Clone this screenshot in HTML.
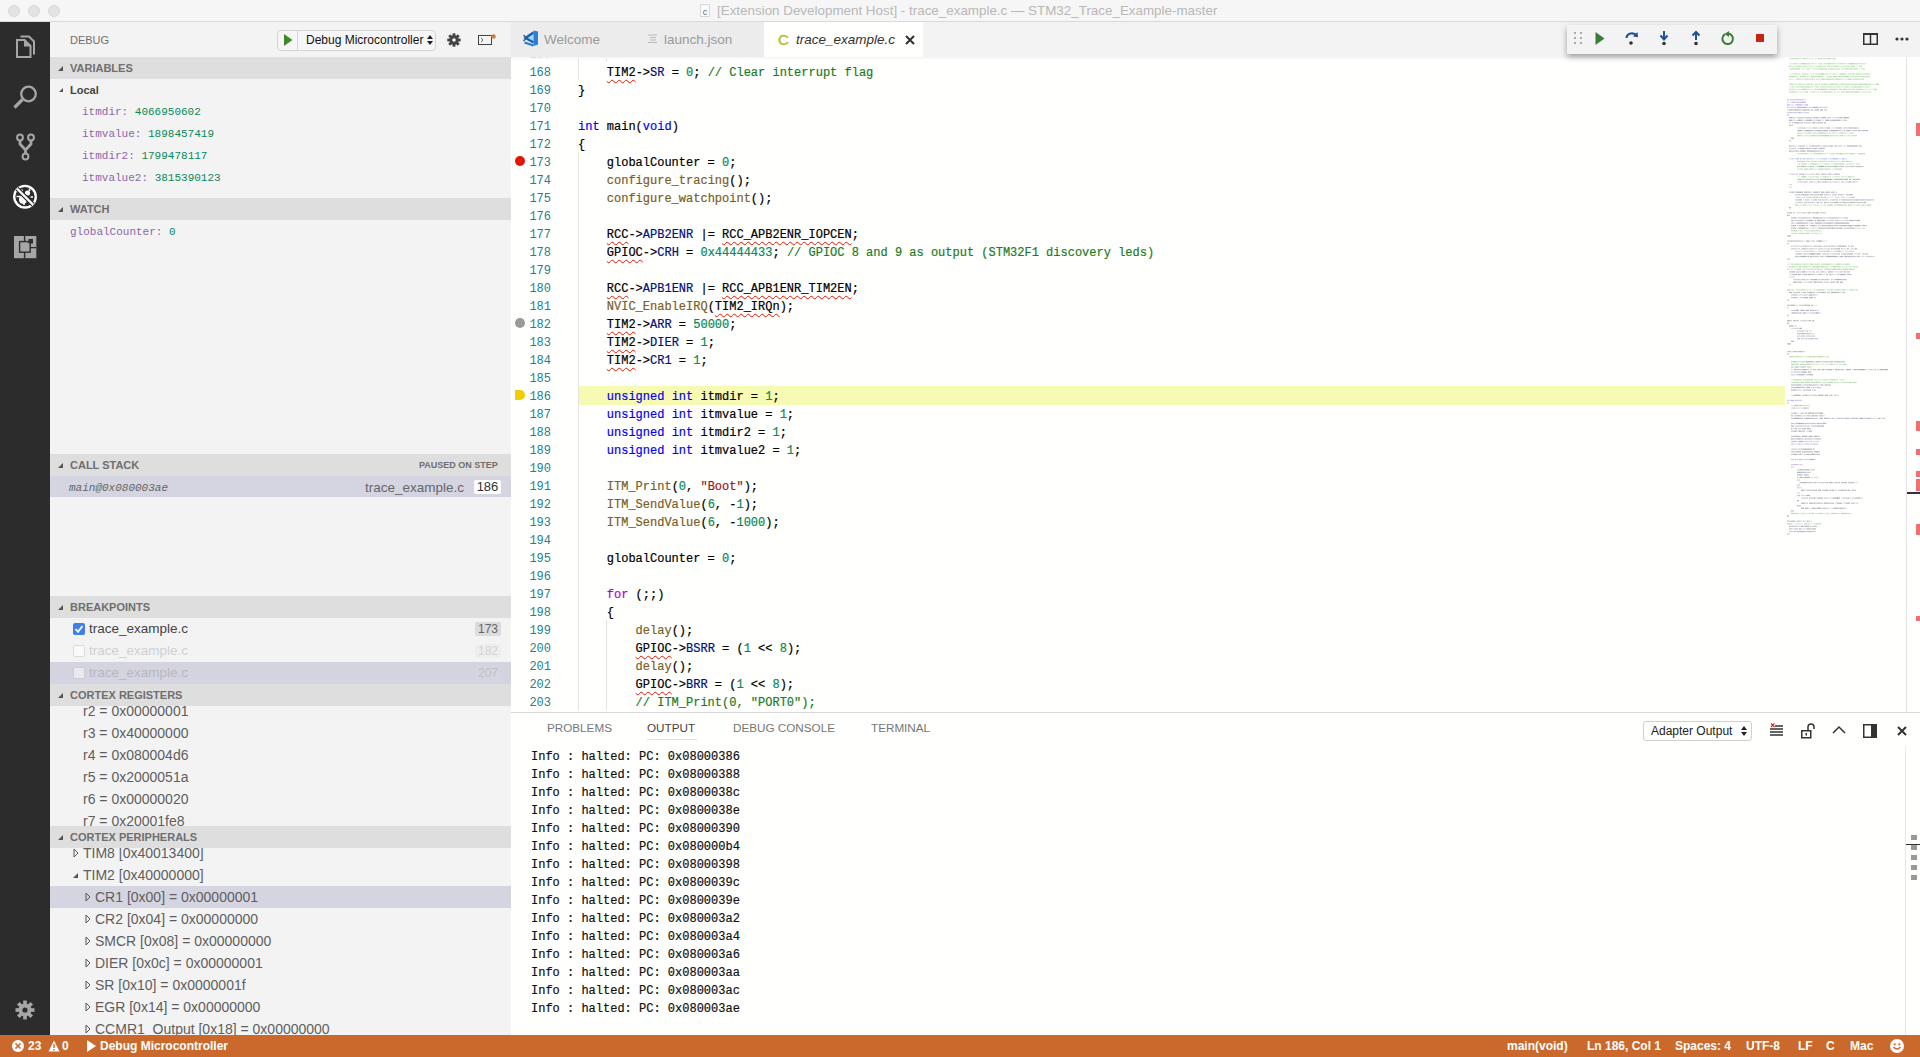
<!DOCTYPE html><html><head><meta charset="utf-8"><title>VS Code Debug</title><style>
*{margin:0;padding:0;box-sizing:border-box}
html,body{width:1920px;height:1057px;overflow:hidden;background:#f3f3f3;font-family:"Liberation Sans",sans-serif}
.a{position:absolute}
svg{position:absolute;overflow:visible}
.t{position:absolute;white-space:pre}
.mono{font-family:"Liberation Mono",monospace}
.sh{position:absolute;left:50px;width:461px;height:22px;background:#dedede;font-size:11px;font-weight:bold;color:#6f6f6f;line-height:22px}
.sh .tx{position:absolute;left:20px;top:0}
.tri{position:absolute;width:0;height:0;border-left:5px solid transparent;border-bottom:5px solid #555}
.tric{position:absolute;width:0;height:0;border-top:4px solid transparent;border-bottom:4px solid transparent;border-left:4px solid #666}
.ln{position:absolute;font-family:"Liberation Mono",monospace;font-size:12px;line-height:18px;color:#26808c;padding-top:2px;text-align:right;width:60px;left:491px;white-space:pre}
.cd{position:absolute;font-family:"Liberation Mono",monospace;font-size:12px;line-height:18px;color:#000;padding-top:2px;-webkit-text-stroke:0.2px currentColor;left:578px;white-space:pre}
.kw{color:#0000ff}.fn{color:#795e26}.nu{color:#09885a}.cm{color:#1e7b1e}.str{color:#a31515}.ctl{color:#af00db}.var{color:#001080}
.sq{text-decoration:underline wavy #e51400;text-decoration-thickness:1px;text-underline-offset:3px;text-decoration-skip-ink:none}
.out{position:absolute;left:531px;font-family:"Liberation Mono",monospace;font-size:12px;line-height:18px;color:#111;padding-top:2px;-webkit-text-stroke:0.2px currentColor;white-space:pre}
.reg{position:absolute;font-size:14px;color:#5e5e5e;line-height:22px;white-space:pre}
.st{position:absolute;top:1035px;height:22px;line-height:22px;font-size:12px;font-weight:bold;color:#fff;white-space:pre}
</style></head><body>
<div class="a" style="left:0;top:0;width:1920px;height:22px;background:#f6f6f6;border-bottom:1px solid #d9d9d9"></div>
<div class="a" style="left:8px;top:5px;width:12px;height:12px;border-radius:50%;background:#e3e3e3;border:1px solid #dadada"></div>
<div class="a" style="left:28px;top:5px;width:12px;height:12px;border-radius:50%;background:#e3e3e3;border:1px solid #dadada"></div>
<div class="a" style="left:48px;top:5px;width:12px;height:12px;border-radius:50%;background:#e3e3e3;border:1px solid #dadada"></div>
<div class="t" style="left:717px;top:0;height:22px;line-height:22px;font-size:13.4px;color:#b8b8b8">[Extension Development Host] - trace_example.c — STM32_Trace_Example-master</div>
<div class="a" style="left:700px;top:4px;width:10px;height:13px;border:1px solid #d8d8d8;background:#fbfbfb;font-size:9px;line-height:14px;color:#666;text-align:center">c</div>
<div class="a" style="left:0;top:22px;width:50px;height:1013px;background:#2c2c2c"></div>
<svg style="left:0;top:0" width="50" height="270" viewBox="0 0 50 270">
<path d="M20.5 36.5 H29 L34 41.5 V54.5" fill="none" stroke="#a6a6a6" stroke-width="2"/>
<path d="M15 38 H26 L32.5 44.5 V59 H15 Z" fill="#2c2c2c"/>
<path d="M17 40 H24.5 L30.5 46 V57 H17 Z" fill="none" stroke="#a6a6a6" stroke-width="2"/>
<path d="M24 40 L30.5 46.5 H24 Z" fill="#a6a6a6"/>
<circle cx="28.5" cy="94" r="7.3" fill="none" stroke="#a6a6a6" stroke-width="2.3"/>
<path d="M22.5 99.5 L14.5 107.5" stroke="#a6a6a6" stroke-width="3.2" stroke-linecap="butt"/>
<circle cx="20" cy="137.5" r="2.9" fill="none" stroke="#a6a6a6" stroke-width="2"/>
<circle cx="31" cy="137.5" r="2.9" fill="none" stroke="#a6a6a6" stroke-width="2"/>
<circle cx="25.5" cy="156.5" r="2.9" fill="none" stroke="#a6a6a6" stroke-width="2"/>
<path d="M20 140.5 V144 L25.5 150 L31 144 V140.5 M25.5 150 V153.5" fill="none" stroke="#a6a6a6" stroke-width="2.8" stroke-linejoin="round"/>
<circle cx="25" cy="196.7" r="10.8" fill="none" stroke="#fff" stroke-width="2.3"/>
<ellipse cx="23" cy="199.5" rx="4" ry="4.2" fill="#fff"/>
<circle cx="27.5" cy="193" r="2.6" fill="#fff"/>
<path d="M16.5 196.5 H20 M24 203 V205 M22 189.5 V192 M29.5 188.5 V191 M30.5 197 H33" stroke="#fff" stroke-width="1.6"/>
<path d="M17 188.6 L33 204.6" stroke="#2c2c2c" stroke-width="4.4"/>
<path d="M17 188.6 L33 204.6" stroke="#fff" stroke-width="2.2"/>
<rect x="14" y="236" width="22.3" height="22.2" fill="#a6a6a6"/>
<path d="M24.6 236 V258.2 M24.6 247.6 H36.3" stroke="#2c2c2c" stroke-width="1.4"/>
<rect x="19.6" y="241.6" width="10.6" height="10.6" fill="#a6a6a6" stroke="#2c2c2c" stroke-width="1.4"/>
<rect x="28.5" y="239" width="4.5" height="4.5" fill="#2c2c2c"/>
</svg>
<svg style="left:15px;top:1000px" width="20" height="20" viewBox="0 0 20 20"><g fill="#a6a6a6"><circle cx="10" cy="10" r="6.5"/><rect x="8.2" y="0.5" width="3.6" height="5" transform="rotate(0 10 10)"/><rect x="8.2" y="0.5" width="3.6" height="5" transform="rotate(45 10 10)"/><rect x="8.2" y="0.5" width="3.6" height="5" transform="rotate(90 10 10)"/><rect x="8.2" y="0.5" width="3.6" height="5" transform="rotate(135 10 10)"/><rect x="8.2" y="0.5" width="3.6" height="5" transform="rotate(180 10 10)"/><rect x="8.2" y="0.5" width="3.6" height="5" transform="rotate(225 10 10)"/><rect x="8.2" y="0.5" width="3.6" height="5" transform="rotate(270 10 10)"/><rect x="8.2" y="0.5" width="3.6" height="5" transform="rotate(315 10 10)"/></g><circle cx="10" cy="10" r="2.6" fill="#2c2c2c"/></svg>
<div class="a" style="left:50px;top:22px;width:461px;height:1013px;background:#f3f3f3"></div>
<div class="t" style="left:70px;top:33px;font-size:11px;line-height:14px;color:#6f6f6f">DEBUG</div>
<div class="a" style="left:277px;top:30px;width:159px;height:21px;border:1px solid #d4d4d4;border-radius:4px;background:#f6f6f6"></div>
<div class="a" style="left:297px;top:31px;width:1px;height:19px;background:#d8d8d8"></div>
<svg style="left:283px;top:34px" width="10" height="12" viewBox="0 0 10 12"><path d="M1 0 L9.5 6 L1 12 Z" fill="#3d8a2e"/></svg>
<div class="t" style="left:306px;top:32px;font-size:12px;line-height:16px;color:#111">Debug Microcontroller</div>
<svg style="left:427px;top:34px" width="6" height="12" viewBox="0 0 6 12"><path d="M0 5 L3 1 L6 5 Z M0 7 L3 11 L6 7 Z" fill="#222"/></svg>
<svg style="left:447px;top:33px" width="14" height="14" viewBox="0 0 14 14"><g fill="#444"><circle cx="7" cy="7" r="4.8"/><rect x="5.6" y="0.3" width="2.8" height="3.6" transform="rotate(0 7 7)"/><rect x="5.6" y="0.3" width="2.8" height="3.6" transform="rotate(45 7 7)"/><rect x="5.6" y="0.3" width="2.8" height="3.6" transform="rotate(90 7 7)"/><rect x="5.6" y="0.3" width="2.8" height="3.6" transform="rotate(135 7 7)"/><rect x="5.6" y="0.3" width="2.8" height="3.6" transform="rotate(180 7 7)"/><rect x="5.6" y="0.3" width="2.8" height="3.6" transform="rotate(225 7 7)"/><rect x="5.6" y="0.3" width="2.8" height="3.6" transform="rotate(270 7 7)"/><rect x="5.6" y="0.3" width="2.8" height="3.6" transform="rotate(315 7 7)"/></g><circle cx="7" cy="7" r="1.8" fill="#f3f3f3"/></svg>
<svg style="left:478px;top:34px" width="18" height="12" viewBox="0 0 18 12"><rect x="0.5" y="1.5" width="13" height="9" fill="none" stroke="#444" stroke-width="1"/><path d="M3 4 L5 6 L3 8" fill="none" stroke="#444" stroke-width="0.8"/><circle cx="15.5" cy="2.5" r="2.3" fill="#d0803a"/></svg>
<div class="sh" style="top:57px"><div class="tri" style="left:8px;top:9px"></div><div class="tx">VARIABLES</div></div>
<div class="tri" style="left:59px;top:88px;border-left-width:4px;border-bottom-width:4px;border-bottom-color:#555"></div>
<div class="t" style="left:70px;top:79px;font-size:11px;line-height:22px;font-weight:bold;color:#444">Local</div>
<div class="t mono" style="left:82px;top:101px;font-size:11px;line-height:22px"><span style="color:#8a68a6">itmdir: </span><span style="color:#09885a">4066950602</span></div>
<div class="t mono" style="left:82px;top:123px;font-size:11px;line-height:22px"><span style="color:#8a68a6">itmvalue: </span><span style="color:#09885a">1898457419</span></div>
<div class="t mono" style="left:82px;top:145px;font-size:11px;line-height:22px"><span style="color:#8a68a6">itmdir2: </span><span style="color:#09885a">1799478117</span></div>
<div class="t mono" style="left:82px;top:167px;font-size:11px;line-height:22px"><span style="color:#8a68a6">itmvalue2: </span><span style="color:#09885a">3815390123</span></div>
<div class="sh" style="top:198px"><div class="tri" style="left:8px;top:9px"></div><div class="tx">WATCH</div></div>
<div class="t mono" style="left:70px;top:221px;font-size:11px;line-height:22px"><span style="color:#8a68a6">globalCounter: </span><span style="color:#09885a">0</span></div>
<div class="sh" style="top:454px"><div class="tri" style="left:8px;top:9px"></div><div class="tx">CALL STACK</div><div class="tx" style="left:369px;font-size:9px;color:#6f6f6f">PAUSED ON STEP</div></div>
<div class="a" style="left:50px;top:476px;width:461px;height:21px;background:#d5d5e1"></div>
<div class="t mono" style="left:69px;top:478px;font-size:11px;line-height:21px;font-style:italic;color:#666">main@0x080003ae</div>
<div class="t" style="left:365px;top:477px;font-size:13.5px;line-height:21px;color:#666">trace_example.c</div>
<div class="a" style="left:474px;top:480px;width:27px;height:14px;background:#fff;border-radius:2px"></div>
<div class="t" style="left:474px;top:477px;width:27px;text-align:center;font-size:13px;line-height:20px;color:#333">186</div>
<div class="sh" style="top:596px"><div class="tri" style="left:8px;top:9px"></div><div class="tx">BREAKPOINTS</div></div>
<div class="a" style="left:50px;top:662px;width:461px;height:22px;background:#d4d4e0"></div>
<div class="a" style="left:73px;top:623px;width:12px;height:12px;border-radius:2px;background:#3f7fe8"></div>
<svg style="left:73px;top:623px" width="12" height="12" viewBox="0 0 12 12"><path d="M2.5 6 L5 8.8 L9.5 3" fill="none" stroke="#fff" stroke-width="1.8"/></svg>
<div class="t" style="left:89px;top:618px;font-size:13.5px;line-height:22px;color:#444;opacity:1.0">trace_example.c</div>
<div class="a" style="left:475px;top:622px;width:26px;height:14px;background:#dcdcdc;border-radius:2px;opacity:1.0"></div>
<div class="t" style="left:475px;top:618px;width:26px;text-align:center;font-size:12px;line-height:22px;color:#666;opacity:1.0">173</div>
<div class="a" style="left:73px;top:645px;width:12px;height:12px;border-radius:2px;background:#fff;border:1px solid #c8c8c8;opacity:0.5"></div>
<div class="t" style="left:89px;top:640px;font-size:13.5px;line-height:22px;color:#444;opacity:0.2">trace_example.c</div>
<div class="a" style="left:475px;top:644px;width:26px;height:14px;background:#dcdcdc;border-radius:2px;opacity:0.2"></div>
<div class="t" style="left:475px;top:640px;width:26px;text-align:center;font-size:12px;line-height:22px;color:#666;opacity:0.2">182</div>
<div class="a" style="left:73px;top:667px;width:12px;height:12px;border-radius:2px;background:#fff;border:1px solid #c8c8c8;opacity:0.5"></div>
<div class="t" style="left:89px;top:662px;font-size:13.5px;line-height:22px;color:#444;opacity:0.2">trace_example.c</div>
<div class="a" style="left:475px;top:666px;width:26px;height:14px;background:#dcdcdc;border-radius:2px;opacity:0.2"></div>
<div class="t" style="left:475px;top:662px;width:26px;text-align:center;font-size:12px;line-height:22px;color:#666;opacity:0.2">207</div>
<div class="a" style="left:50px;top:706px;width:461px;height:120px;overflow:hidden">
<div class="reg" style="left:33px;top:-6px">r2 = 0x00000001</div>
<div class="reg" style="left:33px;top:16px">r3 = 0x40000000</div>
<div class="reg" style="left:33px;top:38px">r4 = 0x080004d6</div>
<div class="reg" style="left:33px;top:60px">r5 = 0x2000051a</div>
<div class="reg" style="left:33px;top:82px">r6 = 0x00000020</div>
<div class="reg" style="left:33px;top:104px">r7 = 0x20001fe8</div>
</div>
<div class="sh" style="top:684px"><div class="tri" style="left:8px;top:9px"></div><div class="tx">CORTEX REGISTERS</div></div>
<div class="sh" style="top:826px"><div class="tri" style="left:8px;top:9px"></div><div class="tx">CORTEX PERIPHERALS</div></div>
<div class="a" style="left:50px;top:848px;width:461px;height:187px;overflow:hidden">
<div class="a" style="left:0;top:38px;width:461px;height:22px;background:#d5d5e2"></div>
<svg style="left:23px;top:0px" width="6" height="10" viewBox="0 0 6 10"><path d="M1 1 L5 5 L1 9 Z" fill="none" stroke="#555" stroke-width="1"/></svg>
<div class="reg" style="left:33px;top:-6px">TIM8 [0x40013400]</div>
<div class="tri" style="left:23px;top:25px;border-left-width:5px;border-bottom-width:5px"></div>
<div class="reg" style="left:33px;top:16px">TIM2 [0x40000000]</div>
<svg style="left:35px;top:44px" width="6" height="10" viewBox="0 0 6 10"><path d="M1 1 L5 5 L1 9 Z" fill="none" stroke="#555" stroke-width="1"/></svg>
<div class="reg" style="left:45px;top:38px">CR1 [0x00] = 0x00000001</div>
<svg style="left:35px;top:66px" width="6" height="10" viewBox="0 0 6 10"><path d="M1 1 L5 5 L1 9 Z" fill="none" stroke="#555" stroke-width="1"/></svg>
<div class="reg" style="left:45px;top:60px">CR2 [0x04] = 0x00000000</div>
<svg style="left:35px;top:88px" width="6" height="10" viewBox="0 0 6 10"><path d="M1 1 L5 5 L1 9 Z" fill="none" stroke="#555" stroke-width="1"/></svg>
<div class="reg" style="left:45px;top:82px">SMCR [0x08] = 0x00000000</div>
<svg style="left:35px;top:110px" width="6" height="10" viewBox="0 0 6 10"><path d="M1 1 L5 5 L1 9 Z" fill="none" stroke="#555" stroke-width="1"/></svg>
<div class="reg" style="left:45px;top:104px">DIER [0x0c] = 0x00000001</div>
<svg style="left:35px;top:132px" width="6" height="10" viewBox="0 0 6 10"><path d="M1 1 L5 5 L1 9 Z" fill="none" stroke="#555" stroke-width="1"/></svg>
<div class="reg" style="left:45px;top:126px">SR [0x10] = 0x0000001f</div>
<svg style="left:35px;top:154px" width="6" height="10" viewBox="0 0 6 10"><path d="M1 1 L5 5 L1 9 Z" fill="none" stroke="#555" stroke-width="1"/></svg>
<div class="reg" style="left:45px;top:148px">EGR [0x14] = 0x00000000</div>
<svg style="left:35px;top:176px" width="6" height="10" viewBox="0 0 6 10"><path d="M1 1 L5 5 L1 9 Z" fill="none" stroke="#555" stroke-width="1"/></svg>
<div class="reg" style="left:45px;top:170px">CCMR1_Output [0x18] = 0x00000000</div>
</div>
<div class="a" style="left:511px;top:22px;width:1409px;height:690px;background:#fffffe"></div>
<div class="a" style="left:511px;top:22px;width:1409px;height:35px;background:#f3f3f3"></div>
<div class="a" style="left:511px;top:22px;width:253px;height:35px;background:#ececec"></div>
<div class="a" style="left:764px;top:22px;width:159px;height:35px;background:#fffffe"></div>
<svg style="left:515px;top:25px" width="30" height="30" viewBox="0 0 30 30"><path d="M18.5 8 L11 13 L18.5 17.5 Z" fill="#9fdcf8"/><path d="M18.5 7.5 L10.5 13 L18.5 17.5" fill="none" stroke="#1d5fae" stroke-width="2.4"/><path d="M8.5 10 L12 13.5 M8.5 16 L11 13.5" stroke="#2a5f9e" stroke-width="1.4"/><path d="M9.5 17.5 L18.5 20.5" stroke="#2a78c8" stroke-width="2"/><path d="M18.5 5.5 L23 6.5 V19.5 L18.5 21 Z" fill="#2c7ed6"/></svg>
<div class="t" style="left:544px;top:22px;font-size:13.5px;line-height:35px;color:#9a9a9a">Welcome</div>
<svg style="left:648px;top:34px" width="9" height="10" viewBox="0 0 9 10"><path d="M0 1 h9 M2 3.5 h6 M2 6 h6 M0 8.5 h9" stroke="#bbb" stroke-width="1"/></svg>
<div class="t" style="left:664px;top:22px;font-size:13.5px;line-height:35px;color:#9a9a9a">launch.json</div>
<div class="t" style="left:778px;top:22px;font-size:15px;line-height:35px;color:#b0c23a;-webkit-text-stroke:0.5px #b0c23a">C</div>
<div class="t" style="left:796px;top:22px;font-size:13.5px;line-height:35px;font-style:italic;color:#333">trace_example.c</div>
<svg style="left:905px;top:35px" width="10" height="10" viewBox="0 0 10 10"><path d="M1 1 L9 9 M9 1 L1 9" stroke="#333" stroke-width="2"/></svg>
<div class="a" style="left:511px;top:57px;width:1274px;height:655px;overflow:hidden">
<div class="a" style="left:67px;top:329px;width:1208px;height:19px;background:#f7fab2"></div>
<div class="a" style="left:67px;top:-13px;width:1px;height:36px;background:#e3e3e3"></div>
<div class="a" style="left:67px;top:95px;width:1px;height:558px;background:#e3e3e3"></div>
<div class="a" style="left:95px;top:563px;width:1px;height:90px;background:#e3e3e3"></div>
<div class="a" style="left:95px;top:-13px;width:1px;height:18px;background:#e3e3e3"></div>
<div class="ln" style="left:-20px;top:-13px">167</div>
<div class="ln" style="left:-20px;top:5px">168</div>
<div class="cd" style="left:67px;top:5px">    <span class="sq">TIM2</span>-&gt;<span class="var">SR</span> = <span class="nu">0</span>; <span class="cm">// Clear interrupt flag</span></div>
<div class="ln" style="left:-20px;top:23px">169</div>
<div class="cd" style="left:67px;top:23px">}</div>
<div class="ln" style="left:-20px;top:41px">170</div>
<div class="cd" style="left:67px;top:41px"></div>
<div class="ln" style="left:-20px;top:59px">171</div>
<div class="cd" style="left:67px;top:59px"><span class="kw">int</span> main(<span class="kw">void</span>)</div>
<div class="ln" style="left:-20px;top:77px">172</div>
<div class="cd" style="left:67px;top:77px">{</div>
<div class="ln" style="left:-20px;top:95px">173</div>
<div class="cd" style="left:67px;top:95px">    globalCounter = <span class="nu">0</span>;</div>
<div class="ln" style="left:-20px;top:113px">174</div>
<div class="cd" style="left:67px;top:113px">    <span class="fn">configure_tracing</span>();</div>
<div class="ln" style="left:-20px;top:131px">175</div>
<div class="cd" style="left:67px;top:131px">    <span class="fn">configure_watchpoint</span>();</div>
<div class="ln" style="left:-20px;top:149px">176</div>
<div class="cd" style="left:67px;top:149px"></div>
<div class="ln" style="left:-20px;top:167px">177</div>
<div class="cd" style="left:67px;top:167px">    <span class="sq">RCC</span>-&gt;<span class="var">APB2ENR</span> |= <span class="sq">RCC_APB2ENR_IOPCEN</span>;</div>
<div class="ln" style="left:-20px;top:185px">178</div>
<div class="cd" style="left:67px;top:185px">    <span class="sq">GPIOC</span>-&gt;<span class="var">CRH</span> = <span class="nu">0x44444433</span>; <span class="cm">// GPIOC 8 and 9 as output (STM32F1 discovery leds)</span></div>
<div class="ln" style="left:-20px;top:203px">179</div>
<div class="cd" style="left:67px;top:203px"></div>
<div class="ln" style="left:-20px;top:221px">180</div>
<div class="cd" style="left:67px;top:221px">    <span class="sq">RCC</span>-&gt;<span class="var">APB1ENR</span> |= <span class="sq">RCC_APB1ENR_TIM2EN</span>;</div>
<div class="ln" style="left:-20px;top:239px">181</div>
<div class="cd" style="left:67px;top:239px">    <span class="fn">NVIC_EnableIRQ</span>(<span class="sq">TIM2_IRQn</span>);</div>
<div class="ln" style="left:-20px;top:257px">182</div>
<div class="cd" style="left:67px;top:257px">    <span class="sq">TIM2</span>-&gt;<span class="var">ARR</span> = <span class="nu">50000</span>;</div>
<div class="ln" style="left:-20px;top:275px">183</div>
<div class="cd" style="left:67px;top:275px">    <span class="sq">TIM2</span>-&gt;<span class="var">DIER</span> = <span class="nu">1</span>;</div>
<div class="ln" style="left:-20px;top:293px">184</div>
<div class="cd" style="left:67px;top:293px">    <span class="sq">TIM2</span>-&gt;<span class="var">CR1</span> = <span class="nu">1</span>;</div>
<div class="ln" style="left:-20px;top:311px">185</div>
<div class="cd" style="left:67px;top:311px"></div>
<div class="ln" style="left:-20px;top:329px">186</div>
<div class="cd" style="left:67px;top:329px">    <span class="kw">unsigned</span> <span class="kw">int</span> itmdir = <span class="nu">1</span>;</div>
<div class="ln" style="left:-20px;top:347px">187</div>
<div class="cd" style="left:67px;top:347px">    <span class="kw">unsigned</span> <span class="kw">int</span> itmvalue = <span class="nu">1</span>;</div>
<div class="ln" style="left:-20px;top:365px">188</div>
<div class="cd" style="left:67px;top:365px">    <span class="kw">unsigned</span> <span class="kw">int</span> itmdir2 = <span class="nu">1</span>;</div>
<div class="ln" style="left:-20px;top:383px">189</div>
<div class="cd" style="left:67px;top:383px">    <span class="kw">unsigned</span> <span class="kw">int</span> itmvalue2 = <span class="nu">1</span>;</div>
<div class="ln" style="left:-20px;top:401px">190</div>
<div class="cd" style="left:67px;top:401px"></div>
<div class="ln" style="left:-20px;top:419px">191</div>
<div class="cd" style="left:67px;top:419px">    <span class="fn">ITM_Print</span>(<span class="nu">0</span>, <span class="str">"Boot"</span>);</div>
<div class="ln" style="left:-20px;top:437px">192</div>
<div class="cd" style="left:67px;top:437px">    <span class="fn">ITM_SendValue</span>(<span class="nu">6</span>, -<span class="nu">1</span>);</div>
<div class="ln" style="left:-20px;top:455px">193</div>
<div class="cd" style="left:67px;top:455px">    <span class="fn">ITM_SendValue</span>(<span class="nu">6</span>, -<span class="nu">1000</span>);</div>
<div class="ln" style="left:-20px;top:473px">194</div>
<div class="cd" style="left:67px;top:473px"></div>
<div class="ln" style="left:-20px;top:491px">195</div>
<div class="cd" style="left:67px;top:491px">    globalCounter = <span class="nu">0</span>;</div>
<div class="ln" style="left:-20px;top:509px">196</div>
<div class="cd" style="left:67px;top:509px"></div>
<div class="ln" style="left:-20px;top:527px">197</div>
<div class="cd" style="left:67px;top:527px">    <span class="ctl">for</span> (;;)</div>
<div class="ln" style="left:-20px;top:545px">198</div>
<div class="cd" style="left:67px;top:545px">    {</div>
<div class="ln" style="left:-20px;top:563px">199</div>
<div class="cd" style="left:67px;top:563px">        <span class="fn">delay</span>();</div>
<div class="ln" style="left:-20px;top:581px">200</div>
<div class="cd" style="left:67px;top:581px">        <span class="sq">GPIOC</span>-&gt;<span class="var">BSRR</span> = (<span class="nu">1</span> &lt;&lt; <span class="nu">8</span>);</div>
<div class="ln" style="left:-20px;top:599px">201</div>
<div class="cd" style="left:67px;top:599px">        <span class="fn">delay</span>();</div>
<div class="ln" style="left:-20px;top:617px">202</div>
<div class="cd" style="left:67px;top:617px">        <span class="sq">GPIOC</span>-&gt;<span class="var">BRR</span> = (<span class="nu">1</span> &lt;&lt; <span class="nu">8</span>);</div>
<div class="ln" style="left:-20px;top:635px">203</div>
<div class="cd" style="left:67px;top:635px">        <span class="cm">// ITM_Print(0, "PORT0");</span></div>
<div class="a" style="left:4px;top:99px;width:10px;height:10px;border-radius:50%;background:#e51400"></div>
<div class="a" style="left:4px;top:261px;width:10px;height:10px;border-radius:50%;background:#9a9a9a"></div>
<svg style="left:4px;top:333px" width="11" height="10" viewBox="0 0 11 10"><path d="M0 0 H5 A5 5 0 0 1 5 10 H0 Z" fill="#f0cc00"/></svg>
</div>
<svg style="left:1785px;top:57px" width="120" height="490" viewBox="0 0 120 490">
<rect x="4" y="1.0" width="3" height="1.2" fill="#9fcf95" fill-opacity="0.5"/>
<rect x="7" y="1.0" width="1" height="1.2" fill="#9fcf95" fill-opacity="0.75"/>
<rect x="8" y="1.0" width="3" height="1.2" fill="#9fcf95" fill-opacity="0.5"/>
<rect x="11" y="1.0" width="1" height="1.2" fill="#9fcf95" fill-opacity="0.75"/>
<rect x="12" y="1.0" width="2" height="1.2" fill="#9fcf95" fill-opacity="0.5"/>
<rect x="14" y="1.0" width="3" height="1.2" fill="#9fcf95" fill-opacity="0.35"/>
<rect x="18" y="1.0" width="2" height="1.2" fill="#9fcf95" fill-opacity="0.75"/>
<rect x="20" y="1.0" width="3" height="1.2" fill="#9fcf95" fill-opacity="0.5"/>
<rect x="23" y="1.0" width="3" height="1.2" fill="#9fcf95" fill-opacity="0.35"/>
<rect x="26" y="1.0" width="3" height="1.2" fill="#9fcf95" fill-opacity="0.35"/>
<rect x="30" y="1.0" width="1" height="1.2" fill="#9fcf95" fill-opacity="0.5"/>
<rect x="31" y="1.0" width="1" height="1.2" fill="#9fcf95" fill-opacity="0.35"/>
<rect x="33" y="1.0" width="2" height="1.2" fill="#9fcf95" fill-opacity="0.75"/>
<rect x="35" y="1.0" width="3" height="1.2" fill="#9fcf95" fill-opacity="0.5"/>
<rect x="38" y="1.0" width="3" height="1.2" fill="#9fcf95" fill-opacity="0.5"/>
<rect x="41" y="1.0" width="3" height="1.2" fill="#9fcf95" fill-opacity="0.6"/>
<rect x="43" y="1.0" width="1" height="1.2" fill="#9fcf95" fill-opacity="0.35"/>
<rect x="44" y="1.0" width="2" height="1.2" fill="#9fcf95" fill-opacity="0.6"/>
<rect x="46" y="1.0" width="2" height="1.2" fill="#9fcf95" fill-opacity="0.35"/>
<rect x="48" y="1.0" width="3" height="1.2" fill="#9fcf95" fill-opacity="0.6"/>
<rect x="4" y="6.1" width="2" height="1.2" fill="#9fcf95" fill-opacity="0.35"/>
<rect x="6" y="6.1" width="1" height="1.2" fill="#9fcf95" fill-opacity="0.35"/>
<rect x="7" y="6.1" width="2" height="1.2" fill="#9fcf95" fill-opacity="0.35"/>
<rect x="9" y="6.1" width="2" height="1.2" fill="#9fcf95" fill-opacity="0.75"/>
<rect x="11" y="6.1" width="1" height="1.2" fill="#9fcf95" fill-opacity="0.35"/>
<rect x="12" y="6.1" width="3" height="1.2" fill="#9fcf95" fill-opacity="0.35"/>
<rect x="15" y="6.1" width="1" height="1.2" fill="#9fcf95" fill-opacity="0.35"/>
<rect x="16" y="6.1" width="2" height="1.2" fill="#9fcf95" fill-opacity="0.75"/>
<rect x="18" y="6.1" width="3" height="1.2" fill="#9fcf95" fill-opacity="0.75"/>
<rect x="21" y="6.1" width="1" height="1.2" fill="#9fcf95" fill-opacity="0.5"/>
<rect x="22" y="6.1" width="3" height="1.2" fill="#9fcf95" fill-opacity="0.6"/>
<rect x="25" y="6.1" width="2" height="1.2" fill="#9fcf95" fill-opacity="0.35"/>
<rect x="27" y="6.1" width="2" height="1.2" fill="#9fcf95" fill-opacity="0.6"/>
<rect x="30" y="6.1" width="2" height="1.2" fill="#9fcf95" fill-opacity="0.35"/>
<rect x="33" y="6.1" width="1" height="1.2" fill="#9fcf95" fill-opacity="0.35"/>
<rect x="34" y="6.1" width="1" height="1.2" fill="#9fcf95" fill-opacity="0.35"/>
<rect x="35" y="6.1" width="2" height="1.2" fill="#9fcf95" fill-opacity="0.75"/>
<rect x="38" y="6.1" width="3" height="1.2" fill="#9fcf95" fill-opacity="0.5"/>
<rect x="41" y="6.1" width="2" height="1.2" fill="#9fcf95" fill-opacity="0.5"/>
<rect x="43" y="6.1" width="2" height="1.2" fill="#9fcf95" fill-opacity="0.75"/>
<rect x="45" y="6.1" width="1" height="1.2" fill="#9fcf95" fill-opacity="0.75"/>
<rect x="46" y="6.1" width="2" height="1.2" fill="#9fcf95" fill-opacity="0.5"/>
<rect x="48" y="6.1" width="2" height="1.2" fill="#9fcf95" fill-opacity="0.6"/>
<rect x="51" y="6.1" width="1" height="1.2" fill="#9fcf95" fill-opacity="0.5"/>
<rect x="52" y="6.1" width="2" height="1.2" fill="#9fcf95" fill-opacity="0.35"/>
<rect x="54" y="6.1" width="1" height="1.2" fill="#9fcf95" fill-opacity="0.5"/>
<rect x="55" y="6.1" width="2" height="1.2" fill="#9fcf95" fill-opacity="0.6"/>
<rect x="57" y="6.1" width="3" height="1.2" fill="#9fcf95" fill-opacity="0.6"/>
<rect x="60" y="6.1" width="2" height="1.2" fill="#9fcf95" fill-opacity="0.35"/>
<rect x="62" y="6.1" width="1" height="1.2" fill="#9fcf95" fill-opacity="0.35"/>
<rect x="63" y="6.1" width="1" height="1.2" fill="#9fcf95" fill-opacity="0.5"/>
<rect x="64" y="6.1" width="1" height="1.2" fill="#9fcf95" fill-opacity="0.6"/>
<rect x="65" y="6.1" width="2" height="1.2" fill="#9fcf95" fill-opacity="0.75"/>
<rect x="67" y="6.1" width="3" height="1.2" fill="#9fcf95" fill-opacity="0.75"/>
<rect x="70" y="6.1" width="3" height="1.2" fill="#9fcf95" fill-opacity="0.5"/>
<rect x="72" y="6.1" width="1" height="1.2" fill="#9fcf95" fill-opacity="0.5"/>
<rect x="73" y="6.1" width="2" height="1.2" fill="#9fcf95" fill-opacity="0.5"/>
<rect x="75" y="6.1" width="3" height="1.2" fill="#9fcf95" fill-opacity="0.5"/>
<rect x="78" y="6.1" width="3" height="1.2" fill="#9fcf95" fill-opacity="0.5"/>
<rect x="4" y="8.7" width="2" height="1.2" fill="#9fcf95" fill-opacity="0.75"/>
<rect x="6" y="8.7" width="3" height="1.2" fill="#9fcf95" fill-opacity="0.35"/>
<rect x="9" y="8.7" width="2" height="1.2" fill="#9fcf95" fill-opacity="0.35"/>
<rect x="11" y="8.7" width="1" height="1.2" fill="#9fcf95" fill-opacity="0.35"/>
<rect x="12" y="8.7" width="1" height="1.2" fill="#9fcf95" fill-opacity="0.6"/>
<rect x="13" y="8.7" width="1" height="1.2" fill="#9fcf95" fill-opacity="0.75"/>
<rect x="14" y="8.7" width="2" height="1.2" fill="#9fcf95" fill-opacity="0.75"/>
<rect x="17" y="8.7" width="2" height="1.2" fill="#9fcf95" fill-opacity="0.6"/>
<rect x="19" y="8.7" width="3" height="1.2" fill="#9fcf95" fill-opacity="0.5"/>
<rect x="22" y="8.7" width="3" height="1.2" fill="#9fcf95" fill-opacity="0.35"/>
<rect x="25" y="8.7" width="1" height="1.2" fill="#9fcf95" fill-opacity="0.5"/>
<rect x="26" y="8.7" width="2" height="1.2" fill="#9fcf95" fill-opacity="0.35"/>
<rect x="29" y="8.7" width="1" height="1.2" fill="#9fcf95" fill-opacity="0.5"/>
<rect x="30" y="8.7" width="3" height="1.2" fill="#9fcf95" fill-opacity="0.35"/>
<rect x="33" y="8.7" width="1" height="1.2" fill="#9fcf95" fill-opacity="0.6"/>
<rect x="34" y="8.7" width="2" height="1.2" fill="#9fcf95" fill-opacity="0.75"/>
<rect x="36" y="8.7" width="1" height="1.2" fill="#9fcf95" fill-opacity="0.35"/>
<rect x="37" y="8.7" width="1" height="1.2" fill="#9fcf95" fill-opacity="0.6"/>
<rect x="38" y="8.7" width="2" height="1.2" fill="#9fcf95" fill-opacity="0.5"/>
<rect x="40" y="8.7" width="1" height="1.2" fill="#9fcf95" fill-opacity="0.6"/>
<rect x="42" y="8.7" width="2" height="1.2" fill="#9fcf95" fill-opacity="0.6"/>
<rect x="44" y="8.7" width="3" height="1.2" fill="#9fcf95" fill-opacity="0.5"/>
<rect x="47" y="8.7" width="1" height="1.2" fill="#9fcf95" fill-opacity="0.35"/>
<rect x="48" y="8.7" width="2" height="1.2" fill="#9fcf95" fill-opacity="0.6"/>
<rect x="50" y="8.7" width="3" height="1.2" fill="#9fcf95" fill-opacity="0.6"/>
<rect x="53" y="8.7" width="1" height="1.2" fill="#9fcf95" fill-opacity="0.35"/>
<rect x="54" y="8.7" width="3" height="1.2" fill="#9fcf95" fill-opacity="0.35"/>
<rect x="57" y="8.7" width="2" height="1.2" fill="#9fcf95" fill-opacity="0.35"/>
<rect x="59" y="8.7" width="2" height="1.2" fill="#9fcf95" fill-opacity="0.5"/>
<rect x="61" y="8.7" width="1" height="1.2" fill="#9fcf95" fill-opacity="0.35"/>
<rect x="62" y="8.7" width="2" height="1.2" fill="#9fcf95" fill-opacity="0.6"/>
<rect x="64" y="8.7" width="3" height="1.2" fill="#9fcf95" fill-opacity="0.35"/>
<rect x="66" y="8.7" width="2" height="1.2" fill="#9fcf95" fill-opacity="0.6"/>
<rect x="68" y="8.7" width="1" height="1.2" fill="#9fcf95" fill-opacity="0.75"/>
<rect x="69" y="8.7" width="1" height="1.2" fill="#9fcf95" fill-opacity="0.75"/>
<rect x="71" y="8.7" width="2" height="1.2" fill="#9fcf95" fill-opacity="0.35"/>
<rect x="74" y="8.7" width="3" height="1.2" fill="#9fcf95" fill-opacity="0.75"/>
<rect x="4" y="11.3" width="1" height="1.2" fill="#9fcf95" fill-opacity="0.35"/>
<rect x="5" y="11.3" width="1" height="1.2" fill="#9fcf95" fill-opacity="0.35"/>
<rect x="6" y="11.3" width="2" height="1.2" fill="#9fcf95" fill-opacity="0.75"/>
<rect x="8" y="11.3" width="3" height="1.2" fill="#9fcf95" fill-opacity="0.6"/>
<rect x="11" y="11.3" width="2" height="1.2" fill="#9fcf95" fill-opacity="0.75"/>
<rect x="13" y="11.3" width="2" height="1.2" fill="#9fcf95" fill-opacity="0.75"/>
<rect x="16" y="11.3" width="1" height="1.2" fill="#9fcf95" fill-opacity="0.35"/>
<rect x="17" y="11.3" width="2" height="1.2" fill="#9fcf95" fill-opacity="0.35"/>
<rect x="19" y="11.3" width="2" height="1.2" fill="#9fcf95" fill-opacity="0.35"/>
<rect x="21" y="11.3" width="1" height="1.2" fill="#9fcf95" fill-opacity="0.35"/>
<rect x="22" y="11.3" width="2" height="1.2" fill="#9fcf95" fill-opacity="0.75"/>
<rect x="24" y="11.3" width="2" height="1.2" fill="#9fcf95" fill-opacity="0.35"/>
<rect x="27" y="11.3" width="2" height="1.2" fill="#9fcf95" fill-opacity="0.5"/>
<rect x="29" y="11.3" width="3" height="1.2" fill="#9fcf95" fill-opacity="0.5"/>
<rect x="32" y="11.3" width="3" height="1.2" fill="#9fcf95" fill-opacity="0.5"/>
<rect x="35" y="11.3" width="3" height="1.2" fill="#9fcf95" fill-opacity="0.75"/>
<rect x="38" y="11.3" width="2" height="1.2" fill="#9fcf95" fill-opacity="0.5"/>
<rect x="40" y="11.3" width="2" height="1.2" fill="#9fcf95" fill-opacity="0.75"/>
<rect x="43" y="11.3" width="2" height="1.2" fill="#9fcf95" fill-opacity="0.5"/>
<rect x="45" y="11.3" width="3" height="1.2" fill="#9fcf95" fill-opacity="0.75"/>
<rect x="48" y="11.3" width="1" height="1.2" fill="#9fcf95" fill-opacity="0.5"/>
<rect x="49" y="11.3" width="2" height="1.2" fill="#9fcf95" fill-opacity="0.5"/>
<rect x="51" y="11.3" width="3" height="1.2" fill="#9fcf95" fill-opacity="0.6"/>
<rect x="54" y="11.3" width="1" height="1.2" fill="#9fcf95" fill-opacity="0.5"/>
<rect x="56" y="11.3" width="2" height="1.2" fill="#9fcf95" fill-opacity="0.6"/>
<rect x="58" y="11.3" width="1" height="1.2" fill="#9fcf95" fill-opacity="0.35"/>
<rect x="59" y="11.3" width="2" height="1.2" fill="#9fcf95" fill-opacity="0.5"/>
<rect x="61" y="11.3" width="2" height="1.2" fill="#9fcf95" fill-opacity="0.75"/>
<rect x="63" y="11.3" width="2" height="1.2" fill="#9fcf95" fill-opacity="0.5"/>
<rect x="65" y="11.3" width="2" height="1.2" fill="#9fcf95" fill-opacity="0.75"/>
<rect x="67" y="11.3" width="3" height="1.2" fill="#9fcf95" fill-opacity="0.6"/>
<rect x="70" y="11.3" width="3" height="1.2" fill="#9fcf95" fill-opacity="0.75"/>
<rect x="74" y="11.3" width="1" height="1.2" fill="#9fcf95" fill-opacity="0.35"/>
<rect x="75" y="11.3" width="2" height="1.2" fill="#9fcf95" fill-opacity="0.35"/>
<rect x="77" y="11.3" width="3" height="1.2" fill="#9fcf95" fill-opacity="0.6"/>
<rect x="4" y="16.4" width="3" height="1.2" fill="#9fcf95" fill-opacity="0.35"/>
<rect x="7" y="16.4" width="3" height="1.2" fill="#9fcf95" fill-opacity="0.5"/>
<rect x="10" y="16.4" width="2" height="1.2" fill="#9fcf95" fill-opacity="0.75"/>
<rect x="12" y="16.4" width="1" height="1.2" fill="#9fcf95" fill-opacity="0.35"/>
<rect x="13" y="16.4" width="2" height="1.2" fill="#9fcf95" fill-opacity="0.5"/>
<rect x="15" y="16.4" width="1" height="1.2" fill="#9fcf95" fill-opacity="0.35"/>
<rect x="17" y="16.4" width="1" height="1.2" fill="#9fcf95" fill-opacity="0.75"/>
<rect x="18" y="16.4" width="1" height="1.2" fill="#9fcf95" fill-opacity="0.6"/>
<rect x="19" y="16.4" width="1" height="1.2" fill="#9fcf95" fill-opacity="0.5"/>
<rect x="20" y="16.4" width="1" height="1.2" fill="#9fcf95" fill-opacity="0.75"/>
<rect x="21" y="16.4" width="2" height="1.2" fill="#9fcf95" fill-opacity="0.5"/>
<rect x="23" y="16.4" width="3" height="1.2" fill="#9fcf95" fill-opacity="0.35"/>
<rect x="26" y="16.4" width="2" height="1.2" fill="#9fcf95" fill-opacity="0.35"/>
<rect x="28" y="16.4" width="1" height="1.2" fill="#9fcf95" fill-opacity="0.5"/>
<rect x="30" y="16.4" width="2" height="1.2" fill="#9fcf95" fill-opacity="0.5"/>
<rect x="32" y="16.4" width="2" height="1.2" fill="#9fcf95" fill-opacity="0.5"/>
<rect x="34" y="16.4" width="1" height="1.2" fill="#9fcf95" fill-opacity="0.75"/>
<rect x="35" y="16.4" width="3" height="1.2" fill="#9fcf95" fill-opacity="0.75"/>
<rect x="37" y="16.4" width="2" height="1.2" fill="#9fcf95" fill-opacity="0.75"/>
<rect x="39" y="16.4" width="1" height="1.2" fill="#9fcf95" fill-opacity="0.35"/>
<rect x="40" y="16.4" width="2" height="1.2" fill="#9fcf95" fill-opacity="0.6"/>
<rect x="42" y="16.4" width="2" height="1.2" fill="#9fcf95" fill-opacity="0.5"/>
<rect x="44" y="16.4" width="1" height="1.2" fill="#9fcf95" fill-opacity="0.35"/>
<rect x="45" y="16.4" width="1" height="1.2" fill="#9fcf95" fill-opacity="0.5"/>
<rect x="46" y="16.4" width="2" height="1.2" fill="#9fcf95" fill-opacity="0.35"/>
<rect x="48" y="16.4" width="2" height="1.2" fill="#9fcf95" fill-opacity="0.6"/>
<rect x="50" y="16.4" width="2" height="1.2" fill="#9fcf95" fill-opacity="0.35"/>
<rect x="52" y="16.4" width="3" height="1.2" fill="#9fcf95" fill-opacity="0.35"/>
<rect x="55" y="16.4" width="1" height="1.2" fill="#9fcf95" fill-opacity="0.75"/>
<rect x="56" y="16.4" width="2" height="1.2" fill="#9fcf95" fill-opacity="0.75"/>
<rect x="58" y="16.4" width="2" height="1.2" fill="#9fcf95" fill-opacity="0.75"/>
<rect x="60" y="16.4" width="1" height="1.2" fill="#9fcf95" fill-opacity="0.35"/>
<rect x="61" y="16.4" width="2" height="1.2" fill="#9fcf95" fill-opacity="0.35"/>
<rect x="63" y="16.4" width="3" height="1.2" fill="#9fcf95" fill-opacity="0.6"/>
<rect x="66" y="16.4" width="3" height="1.2" fill="#9fcf95" fill-opacity="0.5"/>
<rect x="68" y="16.4" width="1" height="1.2" fill="#9fcf95" fill-opacity="0.75"/>
<rect x="69" y="16.4" width="2" height="1.2" fill="#9fcf95" fill-opacity="0.35"/>
<rect x="71" y="16.4" width="1" height="1.2" fill="#9fcf95" fill-opacity="0.75"/>
<rect x="72" y="16.4" width="3" height="1.2" fill="#9fcf95" fill-opacity="0.6"/>
<rect x="75" y="16.4" width="3" height="1.2" fill="#9fcf95" fill-opacity="0.5"/>
<rect x="78" y="16.4" width="3" height="1.2" fill="#9fcf95" fill-opacity="0.6"/>
<rect x="81" y="16.4" width="2" height="1.2" fill="#9fcf95" fill-opacity="0.75"/>
<rect x="83" y="16.4" width="3" height="1.2" fill="#9fcf95" fill-opacity="0.5"/>
<rect x="4" y="19.0" width="3" height="1.2" fill="#9fcf95" fill-opacity="0.6"/>
<rect x="7" y="19.0" width="3" height="1.2" fill="#9fcf95" fill-opacity="0.75"/>
<rect x="10" y="19.0" width="1" height="1.2" fill="#9fcf95" fill-opacity="0.75"/>
<rect x="11" y="19.0" width="3" height="1.2" fill="#9fcf95" fill-opacity="0.35"/>
<rect x="15" y="19.0" width="1" height="1.2" fill="#9fcf95" fill-opacity="0.75"/>
<rect x="16" y="19.0" width="1" height="1.2" fill="#9fcf95" fill-opacity="0.35"/>
<rect x="17" y="19.0" width="3" height="1.2" fill="#9fcf95" fill-opacity="0.75"/>
<rect x="20" y="19.0" width="3" height="1.2" fill="#9fcf95" fill-opacity="0.35"/>
<rect x="23" y="19.0" width="2" height="1.2" fill="#9fcf95" fill-opacity="0.35"/>
<rect x="26" y="19.0" width="1" height="1.2" fill="#9fcf95" fill-opacity="0.75"/>
<rect x="27" y="19.0" width="2" height="1.2" fill="#9fcf95" fill-opacity="0.75"/>
<rect x="29" y="19.0" width="2" height="1.2" fill="#9fcf95" fill-opacity="0.5"/>
<rect x="31" y="19.0" width="2" height="1.2" fill="#9fcf95" fill-opacity="0.5"/>
<rect x="33" y="19.0" width="2" height="1.2" fill="#9fcf95" fill-opacity="0.75"/>
<rect x="35" y="19.0" width="2" height="1.2" fill="#9fcf95" fill-opacity="0.6"/>
<rect x="37" y="19.0" width="1" height="1.2" fill="#9fcf95" fill-opacity="0.5"/>
<rect x="38" y="19.0" width="2" height="1.2" fill="#9fcf95" fill-opacity="0.35"/>
<rect x="41" y="19.0" width="1" height="1.2" fill="#9fcf95" fill-opacity="0.35"/>
<rect x="42" y="19.0" width="1" height="1.2" fill="#9fcf95" fill-opacity="0.5"/>
<rect x="43" y="19.0" width="1" height="1.2" fill="#9fcf95" fill-opacity="0.5"/>
<rect x="44" y="19.0" width="1" height="1.2" fill="#9fcf95" fill-opacity="0.6"/>
<rect x="45" y="19.0" width="2" height="1.2" fill="#9fcf95" fill-opacity="0.6"/>
<rect x="48" y="19.0" width="3" height="1.2" fill="#9fcf95" fill-opacity="0.75"/>
<rect x="51" y="19.0" width="1" height="1.2" fill="#9fcf95" fill-opacity="0.75"/>
<rect x="52" y="19.0" width="3" height="1.2" fill="#9fcf95" fill-opacity="0.35"/>
<rect x="54" y="19.0" width="3" height="1.2" fill="#9fcf95" fill-opacity="0.6"/>
<rect x="57" y="19.0" width="3" height="1.2" fill="#9fcf95" fill-opacity="0.5"/>
<rect x="60" y="19.0" width="3" height="1.2" fill="#9fcf95" fill-opacity="0.75"/>
<rect x="63" y="19.0" width="1" height="1.2" fill="#9fcf95" fill-opacity="0.75"/>
<rect x="65" y="19.0" width="2" height="1.2" fill="#9fcf95" fill-opacity="0.5"/>
<rect x="67" y="19.0" width="3" height="1.2" fill="#9fcf95" fill-opacity="0.5"/>
<rect x="70" y="19.0" width="3" height="1.2" fill="#9fcf95" fill-opacity="0.5"/>
<rect x="73" y="19.0" width="3" height="1.2" fill="#9fcf95" fill-opacity="0.5"/>
<rect x="76" y="19.0" width="3" height="1.2" fill="#9fcf95" fill-opacity="0.5"/>
<rect x="78" y="19.0" width="3" height="1.2" fill="#9fcf95" fill-opacity="0.6"/>
<rect x="81" y="19.0" width="1" height="1.2" fill="#9fcf95" fill-opacity="0.6"/>
<rect x="82" y="19.0" width="3" height="1.2" fill="#9fcf95" fill-opacity="0.6"/>
<rect x="4" y="21.6" width="1" height="1.2" fill="#9fcf95" fill-opacity="0.5"/>
<rect x="5" y="21.6" width="1" height="1.2" fill="#9fcf95" fill-opacity="0.5"/>
<rect x="6" y="21.6" width="3" height="1.2" fill="#9fcf95" fill-opacity="0.35"/>
<rect x="10" y="21.6" width="2" height="1.2" fill="#9fcf95" fill-opacity="0.35"/>
<rect x="12" y="21.6" width="2" height="1.2" fill="#9fcf95" fill-opacity="0.75"/>
<rect x="14" y="21.6" width="3" height="1.2" fill="#9fcf95" fill-opacity="0.5"/>
<rect x="17" y="21.6" width="2" height="1.2" fill="#9fcf95" fill-opacity="0.35"/>
<rect x="19" y="21.6" width="1" height="1.2" fill="#9fcf95" fill-opacity="0.5"/>
<rect x="20" y="21.6" width="3" height="1.2" fill="#9fcf95" fill-opacity="0.6"/>
<rect x="23" y="21.6" width="1" height="1.2" fill="#9fcf95" fill-opacity="0.6"/>
<rect x="24" y="21.6" width="3" height="1.2" fill="#9fcf95" fill-opacity="0.5"/>
<rect x="27" y="21.6" width="1" height="1.2" fill="#9fcf95" fill-opacity="0.75"/>
<rect x="28" y="21.6" width="1" height="1.2" fill="#9fcf95" fill-opacity="0.35"/>
<rect x="29" y="21.6" width="1" height="1.2" fill="#9fcf95" fill-opacity="0.75"/>
<rect x="31" y="21.6" width="1" height="1.2" fill="#9fcf95" fill-opacity="0.5"/>
<rect x="32" y="21.6" width="1" height="1.2" fill="#9fcf95" fill-opacity="0.5"/>
<rect x="33" y="21.6" width="1" height="1.2" fill="#9fcf95" fill-opacity="0.5"/>
<rect x="34" y="21.6" width="2" height="1.2" fill="#9fcf95" fill-opacity="0.35"/>
<rect x="36" y="21.6" width="1" height="1.2" fill="#9fcf95" fill-opacity="0.5"/>
<rect x="37" y="21.6" width="3" height="1.2" fill="#9fcf95" fill-opacity="0.75"/>
<rect x="40" y="21.6" width="1" height="1.2" fill="#9fcf95" fill-opacity="0.35"/>
<rect x="41" y="21.6" width="2" height="1.2" fill="#9fcf95" fill-opacity="0.75"/>
<rect x="43" y="21.6" width="2" height="1.2" fill="#9fcf95" fill-opacity="0.75"/>
<rect x="45" y="21.6" width="3" height="1.2" fill="#9fcf95" fill-opacity="0.6"/>
<rect x="48" y="21.6" width="1" height="1.2" fill="#9fcf95" fill-opacity="0.6"/>
<rect x="49" y="21.6" width="1" height="1.2" fill="#9fcf95" fill-opacity="0.35"/>
<rect x="50" y="21.6" width="1" height="1.2" fill="#9fcf95" fill-opacity="0.5"/>
<rect x="51" y="21.6" width="2" height="1.2" fill="#9fcf95" fill-opacity="0.75"/>
<rect x="53" y="21.6" width="2" height="1.2" fill="#9fcf95" fill-opacity="0.6"/>
<rect x="55" y="21.6" width="2" height="1.2" fill="#9fcf95" fill-opacity="0.5"/>
<rect x="57" y="21.6" width="1" height="1.2" fill="#9fcf95" fill-opacity="0.35"/>
<rect x="58" y="21.6" width="3" height="1.2" fill="#9fcf95" fill-opacity="0.35"/>
<rect x="61" y="21.6" width="2" height="1.2" fill="#9fcf95" fill-opacity="0.35"/>
<rect x="63" y="21.6" width="3" height="1.2" fill="#9fcf95" fill-opacity="0.75"/>
<rect x="66" y="21.6" width="3" height="1.2" fill="#9fcf95" fill-opacity="0.5"/>
<rect x="69" y="21.6" width="3" height="1.2" fill="#9fcf95" fill-opacity="0.6"/>
<rect x="72" y="21.6" width="2" height="1.2" fill="#9fcf95" fill-opacity="0.6"/>
<rect x="74" y="21.6" width="1" height="1.2" fill="#9fcf95" fill-opacity="0.5"/>
<rect x="75" y="21.6" width="2" height="1.2" fill="#9fcf95" fill-opacity="0.5"/>
<rect x="77" y="21.6" width="2" height="1.2" fill="#9fcf95" fill-opacity="0.6"/>
<rect x="4" y="26.7" width="1" height="1.2" fill="#9fcf95" fill-opacity="0.5"/>
<rect x="5" y="26.7" width="1" height="1.2" fill="#9fcf95" fill-opacity="0.6"/>
<rect x="6" y="26.7" width="2" height="1.2" fill="#9fcf95" fill-opacity="0.75"/>
<rect x="8" y="26.7" width="1" height="1.2" fill="#9fcf95" fill-opacity="0.35"/>
<rect x="9" y="26.7" width="2" height="1.2" fill="#9fcf95" fill-opacity="0.35"/>
<rect x="11" y="26.7" width="1" height="1.2" fill="#9fcf95" fill-opacity="0.6"/>
<rect x="13" y="26.7" width="2" height="1.2" fill="#9fcf95" fill-opacity="0.6"/>
<rect x="15" y="26.7" width="1" height="1.2" fill="#9fcf95" fill-opacity="0.75"/>
<rect x="16" y="26.7" width="3" height="1.2" fill="#9fcf95" fill-opacity="0.5"/>
<rect x="19" y="26.7" width="3" height="1.2" fill="#9fcf95" fill-opacity="0.35"/>
<rect x="22" y="26.7" width="2" height="1.2" fill="#9fcf95" fill-opacity="0.75"/>
<rect x="24" y="26.7" width="3" height="1.2" fill="#9fcf95" fill-opacity="0.5"/>
<rect x="26" y="26.7" width="2" height="1.2" fill="#9fcf95" fill-opacity="0.35"/>
<rect x="28" y="26.7" width="1" height="1.2" fill="#9fcf95" fill-opacity="0.35"/>
<rect x="30" y="26.7" width="2" height="1.2" fill="#9fcf95" fill-opacity="0.75"/>
<rect x="32" y="26.7" width="2" height="1.2" fill="#9fcf95" fill-opacity="0.35"/>
<rect x="34" y="26.7" width="1" height="1.2" fill="#9fcf95" fill-opacity="0.75"/>
<rect x="36" y="26.7" width="1" height="1.2" fill="#9fcf95" fill-opacity="0.6"/>
<rect x="37" y="26.7" width="2" height="1.2" fill="#9fcf95" fill-opacity="0.6"/>
<rect x="39" y="26.7" width="3" height="1.2" fill="#9fcf95" fill-opacity="0.75"/>
<rect x="42" y="26.7" width="3" height="1.2" fill="#9fcf95" fill-opacity="0.35"/>
<rect x="45" y="26.7" width="3" height="1.2" fill="#9fcf95" fill-opacity="0.75"/>
<rect x="47" y="26.7" width="1" height="1.2" fill="#9fcf95" fill-opacity="0.35"/>
<rect x="48" y="26.7" width="2" height="1.2" fill="#9fcf95" fill-opacity="0.5"/>
<rect x="50" y="26.7" width="2" height="1.2" fill="#9fcf95" fill-opacity="0.75"/>
<rect x="52" y="26.7" width="1" height="1.2" fill="#9fcf95" fill-opacity="0.75"/>
<rect x="53" y="26.7" width="3" height="1.2" fill="#9fcf95" fill-opacity="0.35"/>
<rect x="56" y="26.7" width="2" height="1.2" fill="#9fcf95" fill-opacity="0.75"/>
<rect x="58" y="26.7" width="2" height="1.2" fill="#9fcf95" fill-opacity="0.6"/>
<rect x="60" y="26.7" width="2" height="1.2" fill="#9fcf95" fill-opacity="0.6"/>
<rect x="62" y="26.7" width="2" height="1.2" fill="#9fcf95" fill-opacity="0.6"/>
<rect x="64" y="26.7" width="2" height="1.2" fill="#9fcf95" fill-opacity="0.6"/>
<rect x="66" y="26.7" width="3" height="1.2" fill="#9fcf95" fill-opacity="0.6"/>
<rect x="69" y="26.7" width="3" height="1.2" fill="#9fcf95" fill-opacity="0.6"/>
<rect x="71" y="26.7" width="1" height="1.2" fill="#9fcf95" fill-opacity="0.5"/>
<rect x="72" y="26.7" width="3" height="1.2" fill="#9fcf95" fill-opacity="0.35"/>
<rect x="74" y="26.7" width="1" height="1.2" fill="#9fcf95" fill-opacity="0.75"/>
<rect x="75" y="26.7" width="3" height="1.2" fill="#9fcf95" fill-opacity="0.75"/>
<rect x="78" y="26.7" width="1" height="1.2" fill="#9fcf95" fill-opacity="0.6"/>
<rect x="79" y="26.7" width="3" height="1.2" fill="#9fcf95" fill-opacity="0.75"/>
<rect x="82" y="26.7" width="1" height="1.2" fill="#9fcf95" fill-opacity="0.6"/>
<rect x="83" y="26.7" width="1" height="1.2" fill="#9fcf95" fill-opacity="0.5"/>
<rect x="84" y="26.7" width="2" height="1.2" fill="#9fcf95" fill-opacity="0.75"/>
<rect x="87" y="26.7" width="1" height="1.2" fill="#9fcf95" fill-opacity="0.35"/>
<rect x="88" y="26.7" width="3" height="1.2" fill="#9fcf95" fill-opacity="0.35"/>
<rect x="91" y="26.7" width="3" height="1.2" fill="#9fcf95" fill-opacity="0.75"/>
<rect x="4" y="29.3" width="3" height="1.2" fill="#9fcf95" fill-opacity="0.35"/>
<rect x="7" y="29.3" width="1" height="1.2" fill="#9fcf95" fill-opacity="0.75"/>
<rect x="8" y="29.3" width="2" height="1.2" fill="#9fcf95" fill-opacity="0.35"/>
<rect x="10" y="29.3" width="1" height="1.2" fill="#9fcf95" fill-opacity="0.35"/>
<rect x="11" y="29.3" width="2" height="1.2" fill="#9fcf95" fill-opacity="0.5"/>
<rect x="13" y="29.3" width="1" height="1.2" fill="#9fcf95" fill-opacity="0.6"/>
<rect x="14" y="29.3" width="2" height="1.2" fill="#9fcf95" fill-opacity="0.5"/>
<rect x="16" y="29.3" width="2" height="1.2" fill="#9fcf95" fill-opacity="0.75"/>
<rect x="18" y="29.3" width="3" height="1.2" fill="#9fcf95" fill-opacity="0.6"/>
<rect x="21" y="29.3" width="3" height="1.2" fill="#9fcf95" fill-opacity="0.75"/>
<rect x="24" y="29.3" width="2" height="1.2" fill="#9fcf95" fill-opacity="0.5"/>
<rect x="26" y="29.3" width="2" height="1.2" fill="#9fcf95" fill-opacity="0.5"/>
<rect x="29" y="29.3" width="2" height="1.2" fill="#9fcf95" fill-opacity="0.35"/>
<rect x="31" y="29.3" width="3" height="1.2" fill="#9fcf95" fill-opacity="0.6"/>
<rect x="35" y="29.3" width="3" height="1.2" fill="#9fcf95" fill-opacity="0.6"/>
<rect x="38" y="29.3" width="2" height="1.2" fill="#9fcf95" fill-opacity="0.6"/>
<rect x="40" y="29.3" width="3" height="1.2" fill="#9fcf95" fill-opacity="0.5"/>
<rect x="43" y="29.3" width="3" height="1.2" fill="#9fcf95" fill-opacity="0.6"/>
<rect x="46" y="29.3" width="1" height="1.2" fill="#9fcf95" fill-opacity="0.5"/>
<rect x="47" y="29.3" width="3" height="1.2" fill="#9fcf95" fill-opacity="0.5"/>
<rect x="50" y="29.3" width="3" height="1.2" fill="#9fcf95" fill-opacity="0.35"/>
<rect x="52" y="29.3" width="1" height="1.2" fill="#9fcf95" fill-opacity="0.35"/>
<rect x="53" y="29.3" width="2" height="1.2" fill="#9fcf95" fill-opacity="0.6"/>
<rect x="55" y="29.3" width="2" height="1.2" fill="#9fcf95" fill-opacity="0.35"/>
<rect x="57" y="29.3" width="3" height="1.2" fill="#9fcf95" fill-opacity="0.35"/>
<rect x="60" y="29.3" width="1" height="1.2" fill="#9fcf95" fill-opacity="0.5"/>
<rect x="61" y="29.3" width="3" height="1.2" fill="#9fcf95" fill-opacity="0.6"/>
<rect x="65" y="29.3" width="1" height="1.2" fill="#9fcf95" fill-opacity="0.5"/>
<rect x="66" y="29.3" width="3" height="1.2" fill="#9fcf95" fill-opacity="0.5"/>
<rect x="69" y="29.3" width="2" height="1.2" fill="#9fcf95" fill-opacity="0.75"/>
<rect x="71" y="29.3" width="2" height="1.2" fill="#9fcf95" fill-opacity="0.6"/>
<rect x="73" y="29.3" width="1" height="1.2" fill="#9fcf95" fill-opacity="0.6"/>
<rect x="74" y="29.3" width="2" height="1.2" fill="#9fcf95" fill-opacity="0.75"/>
<rect x="76" y="29.3" width="3" height="1.2" fill="#9fcf95" fill-opacity="0.5"/>
<rect x="79" y="29.3" width="1" height="1.2" fill="#9fcf95" fill-opacity="0.35"/>
<rect x="80" y="29.3" width="2" height="1.2" fill="#9fcf95" fill-opacity="0.5"/>
<rect x="82" y="29.3" width="2" height="1.2" fill="#9fcf95" fill-opacity="0.6"/>
<rect x="4" y="31.8" width="1" height="1.2" fill="#9fcf95" fill-opacity="0.6"/>
<rect x="5" y="31.8" width="2" height="1.2" fill="#9fcf95" fill-opacity="0.5"/>
<rect x="7" y="31.8" width="2" height="1.2" fill="#9fcf95" fill-opacity="0.6"/>
<rect x="9" y="31.8" width="3" height="1.2" fill="#9fcf95" fill-opacity="0.35"/>
<rect x="12" y="31.8" width="2" height="1.2" fill="#9fcf95" fill-opacity="0.35"/>
<rect x="14" y="31.8" width="3" height="1.2" fill="#9fcf95" fill-opacity="0.35"/>
<rect x="17" y="31.8" width="2" height="1.2" fill="#9fcf95" fill-opacity="0.75"/>
<rect x="19" y="31.8" width="3" height="1.2" fill="#9fcf95" fill-opacity="0.75"/>
<rect x="22" y="31.8" width="1" height="1.2" fill="#9fcf95" fill-opacity="0.35"/>
<rect x="23" y="31.8" width="2" height="1.2" fill="#9fcf95" fill-opacity="0.5"/>
<rect x="25" y="31.8" width="3" height="1.2" fill="#9fcf95" fill-opacity="0.35"/>
<rect x="29" y="31.8" width="2" height="1.2" fill="#9fcf95" fill-opacity="0.6"/>
<rect x="31" y="31.8" width="2" height="1.2" fill="#9fcf95" fill-opacity="0.5"/>
<rect x="33" y="31.8" width="1" height="1.2" fill="#9fcf95" fill-opacity="0.6"/>
<rect x="34" y="31.8" width="3" height="1.2" fill="#9fcf95" fill-opacity="0.6"/>
<rect x="36" y="31.8" width="1" height="1.2" fill="#9fcf95" fill-opacity="0.6"/>
<rect x="37" y="31.8" width="3" height="1.2" fill="#9fcf95" fill-opacity="0.75"/>
<rect x="40" y="31.8" width="3" height="1.2" fill="#9fcf95" fill-opacity="0.6"/>
<rect x="44" y="31.8" width="3" height="1.2" fill="#9fcf95" fill-opacity="0.6"/>
<rect x="47" y="31.8" width="2" height="1.2" fill="#9fcf95" fill-opacity="0.6"/>
<rect x="49" y="31.8" width="1" height="1.2" fill="#9fcf95" fill-opacity="0.75"/>
<rect x="50" y="31.8" width="3" height="1.2" fill="#9fcf95" fill-opacity="0.5"/>
<rect x="54" y="31.8" width="2" height="1.2" fill="#9fcf95" fill-opacity="0.6"/>
<rect x="56" y="31.8" width="1" height="1.2" fill="#9fcf95" fill-opacity="0.6"/>
<rect x="58" y="31.8" width="2" height="1.2" fill="#9fcf95" fill-opacity="0.75"/>
<rect x="60" y="31.8" width="1" height="1.2" fill="#9fcf95" fill-opacity="0.6"/>
<rect x="61" y="31.8" width="2" height="1.2" fill="#9fcf95" fill-opacity="0.5"/>
<rect x="63" y="31.8" width="3" height="1.2" fill="#9fcf95" fill-opacity="0.5"/>
<rect x="66" y="31.8" width="1" height="1.2" fill="#9fcf95" fill-opacity="0.35"/>
<rect x="67" y="31.8" width="2" height="1.2" fill="#9fcf95" fill-opacity="0.6"/>
<rect x="69" y="31.8" width="1" height="1.2" fill="#9fcf95" fill-opacity="0.5"/>
<rect x="71" y="31.8" width="1" height="1.2" fill="#9fcf95" fill-opacity="0.5"/>
<rect x="72" y="31.8" width="3" height="1.2" fill="#9fcf95" fill-opacity="0.6"/>
<rect x="75" y="31.8" width="1" height="1.2" fill="#9fcf95" fill-opacity="0.75"/>
<rect x="76" y="31.8" width="1" height="1.2" fill="#9fcf95" fill-opacity="0.6"/>
<rect x="77" y="31.8" width="3" height="1.2" fill="#9fcf95" fill-opacity="0.35"/>
<rect x="80" y="31.8" width="2" height="1.2" fill="#9fcf95" fill-opacity="0.35"/>
<rect x="82" y="31.8" width="3" height="1.2" fill="#9fcf95" fill-opacity="0.35"/>
<rect x="85" y="31.8" width="2" height="1.2" fill="#9fcf95" fill-opacity="0.35"/>
<rect x="87" y="31.8" width="1" height="1.2" fill="#9fcf95" fill-opacity="0.5"/>
<rect x="89" y="31.8" width="3" height="1.2" fill="#9fcf95" fill-opacity="0.75"/>
<rect x="4" y="34.4" width="3" height="1.2" fill="#9fcf95" fill-opacity="0.6"/>
<rect x="7" y="34.4" width="2" height="1.2" fill="#9fcf95" fill-opacity="0.75"/>
<rect x="9" y="34.4" width="2" height="1.2" fill="#9fcf95" fill-opacity="0.6"/>
<rect x="11" y="34.4" width="2" height="1.2" fill="#9fcf95" fill-opacity="0.5"/>
<rect x="14" y="34.4" width="2" height="1.2" fill="#9fcf95" fill-opacity="0.35"/>
<rect x="16" y="34.4" width="3" height="1.2" fill="#9fcf95" fill-opacity="0.35"/>
<rect x="19" y="34.4" width="2" height="1.2" fill="#9fcf95" fill-opacity="0.6"/>
<rect x="21" y="34.4" width="1" height="1.2" fill="#9fcf95" fill-opacity="0.75"/>
<rect x="22" y="34.4" width="1" height="1.2" fill="#9fcf95" fill-opacity="0.75"/>
<rect x="24" y="34.4" width="3" height="1.2" fill="#9fcf95" fill-opacity="0.35"/>
<rect x="27" y="34.4" width="3" height="1.2" fill="#9fcf95" fill-opacity="0.6"/>
<rect x="30" y="34.4" width="3" height="1.2" fill="#9fcf95" fill-opacity="0.35"/>
<rect x="33" y="34.4" width="1" height="1.2" fill="#9fcf95" fill-opacity="0.75"/>
<rect x="35" y="34.4" width="1" height="1.2" fill="#9fcf95" fill-opacity="0.5"/>
<rect x="36" y="34.4" width="3" height="1.2" fill="#9fcf95" fill-opacity="0.5"/>
<rect x="39" y="34.4" width="3" height="1.2" fill="#9fcf95" fill-opacity="0.75"/>
<rect x="42" y="34.4" width="3" height="1.2" fill="#9fcf95" fill-opacity="0.5"/>
<rect x="44" y="34.4" width="1" height="1.2" fill="#9fcf95" fill-opacity="0.75"/>
<rect x="45" y="34.4" width="2" height="1.2" fill="#9fcf95" fill-opacity="0.6"/>
<rect x="47" y="34.4" width="2" height="1.2" fill="#9fcf95" fill-opacity="0.35"/>
<rect x="49" y="34.4" width="2" height="1.2" fill="#9fcf95" fill-opacity="0.6"/>
<rect x="52" y="34.4" width="2" height="1.2" fill="#9fcf95" fill-opacity="0.5"/>
<rect x="54" y="34.4" width="1" height="1.2" fill="#9fcf95" fill-opacity="0.35"/>
<rect x="56" y="34.4" width="1" height="1.2" fill="#9fcf95" fill-opacity="0.75"/>
<rect x="57" y="34.4" width="1" height="1.2" fill="#9fcf95" fill-opacity="0.6"/>
<rect x="58" y="34.4" width="1" height="1.2" fill="#9fcf95" fill-opacity="0.5"/>
<rect x="59" y="34.4" width="1" height="1.2" fill="#9fcf95" fill-opacity="0.6"/>
<rect x="60" y="34.4" width="1" height="1.2" fill="#9fcf95" fill-opacity="0.5"/>
<rect x="61" y="34.4" width="3" height="1.2" fill="#9fcf95" fill-opacity="0.75"/>
<rect x="64" y="34.4" width="3" height="1.2" fill="#9fcf95" fill-opacity="0.5"/>
<rect x="66" y="34.4" width="1" height="1.2" fill="#9fcf95" fill-opacity="0.6"/>
<rect x="67" y="34.4" width="2" height="1.2" fill="#9fcf95" fill-opacity="0.5"/>
<rect x="69" y="34.4" width="2" height="1.2" fill="#9fcf95" fill-opacity="0.75"/>
<rect x="71" y="34.4" width="2" height="1.2" fill="#9fcf95" fill-opacity="0.75"/>
<rect x="73" y="34.4" width="2" height="1.2" fill="#9fcf95" fill-opacity="0.6"/>
<rect x="76" y="34.4" width="3" height="1.2" fill="#9fcf95" fill-opacity="0.35"/>
<rect x="79" y="34.4" width="2" height="1.2" fill="#9fcf95" fill-opacity="0.5"/>
<rect x="81" y="34.4" width="2" height="1.2" fill="#9fcf95" fill-opacity="0.35"/>
<rect x="83" y="34.4" width="1" height="1.2" fill="#9fcf95" fill-opacity="0.5"/>
<rect x="84" y="34.4" width="2" height="1.2" fill="#9fcf95" fill-opacity="0.6"/>
<rect x="2" y="42.1" width="2" height="1.2" fill="#b898cc" fill-opacity="0.6"/>
<rect x="5" y="42.1" width="1" height="1.2" fill="#b898cc" fill-opacity="0.75"/>
<rect x="6" y="42.1" width="3" height="1.2" fill="#b898cc" fill-opacity="0.5"/>
<rect x="9" y="42.1" width="2" height="1.2" fill="#b898cc" fill-opacity="0.5"/>
<rect x="11" y="42.1" width="2" height="1.2" fill="#b898cc" fill-opacity="0.5"/>
<rect x="13" y="42.1" width="2" height="1.2" fill="#b898cc" fill-opacity="0.5"/>
<rect x="15" y="42.1" width="3" height="1.2" fill="#b898cc" fill-opacity="0.6"/>
<rect x="18" y="42.1" width="3" height="1.2" fill="#b898cc" fill-opacity="0.35"/>
<rect x="2" y="44.7" width="1" height="1.2" fill="#b898cc" fill-opacity="0.5"/>
<rect x="3" y="44.7" width="1" height="1.2" fill="#b898cc" fill-opacity="0.35"/>
<rect x="5" y="44.7" width="2" height="1.2" fill="#b898cc" fill-opacity="0.35"/>
<rect x="7" y="44.7" width="2" height="1.2" fill="#b898cc" fill-opacity="0.75"/>
<rect x="9" y="44.7" width="1" height="1.2" fill="#b898cc" fill-opacity="0.6"/>
<rect x="10" y="44.7" width="1" height="1.2" fill="#b898cc" fill-opacity="0.5"/>
<rect x="11" y="44.7" width="2" height="1.2" fill="#b898cc" fill-opacity="0.5"/>
<rect x="13" y="44.7" width="1" height="1.2" fill="#b898cc" fill-opacity="0.75"/>
<rect x="14" y="44.7" width="1" height="1.2" fill="#b898cc" fill-opacity="0.35"/>
<rect x="15" y="44.7" width="3" height="1.2" fill="#b898cc" fill-opacity="0.75"/>
<rect x="18" y="44.7" width="3" height="1.2" fill="#b898cc" fill-opacity="0.75"/>
<rect x="2" y="47.3" width="2" height="1.2" fill="#9aa0e0" fill-opacity="0.75"/>
<rect x="4" y="47.3" width="1" height="1.2" fill="#9aa0e0" fill-opacity="0.6"/>
<rect x="5" y="47.3" width="2" height="1.2" fill="#9aa0e0" fill-opacity="0.35"/>
<rect x="7" y="47.3" width="2" height="1.2" fill="#9aa0e0" fill-opacity="0.35"/>
<rect x="10" y="47.3" width="1" height="1.2" fill="#9aa0e0" fill-opacity="0.35"/>
<rect x="11" y="47.3" width="3" height="1.2" fill="#9aa0e0" fill-opacity="0.75"/>
<rect x="14" y="47.3" width="3" height="1.2" fill="#9aa0e0" fill-opacity="0.75"/>
<rect x="17" y="47.3" width="3" height="1.2" fill="#9aa0e0" fill-opacity="0.35"/>
<rect x="20" y="47.3" width="3" height="1.2" fill="#9aa0e0" fill-opacity="0.75"/>
<rect x="2" y="49.8" width="1" height="1.2" fill="#9a9aa8" fill-opacity="0.6"/>
<rect x="3" y="49.8" width="3" height="1.2" fill="#9a9aa8" fill-opacity="0.35"/>
<rect x="6" y="49.8" width="2" height="1.2" fill="#9a9aa8" fill-opacity="0.35"/>
<rect x="8" y="49.8" width="3" height="1.2" fill="#9a9aa8" fill-opacity="0.5"/>
<rect x="12" y="49.8" width="1" height="1.2" fill="#9a9aa8" fill-opacity="0.6"/>
<rect x="13" y="49.8" width="3" height="1.2" fill="#9a9aa8" fill-opacity="0.75"/>
<rect x="16" y="49.8" width="3" height="1.2" fill="#9a9aa8" fill-opacity="0.6"/>
<rect x="19" y="49.8" width="2" height="1.2" fill="#9a9aa8" fill-opacity="0.75"/>
<rect x="21" y="49.8" width="3" height="1.2" fill="#9a9aa8" fill-opacity="0.35"/>
<rect x="24" y="49.8" width="1" height="1.2" fill="#9a9aa8" fill-opacity="0.5"/>
<rect x="25" y="49.8" width="2" height="1.2" fill="#9a9aa8" fill-opacity="0.35"/>
<rect x="27" y="49.8" width="2" height="1.2" fill="#9a9aa8" fill-opacity="0.6"/>
<rect x="29" y="49.8" width="2" height="1.2" fill="#9a9aa8" fill-opacity="0.75"/>
<rect x="31" y="49.8" width="2" height="1.2" fill="#9a9aa8" fill-opacity="0.75"/>
<rect x="33" y="49.8" width="2" height="1.2" fill="#9a9aa8" fill-opacity="0.35"/>
<rect x="35" y="49.8" width="1" height="1.2" fill="#9a9aa8" fill-opacity="0.5"/>
<rect x="36" y="49.8" width="3" height="1.2" fill="#9a9aa8" fill-opacity="0.35"/>
<rect x="39" y="49.8" width="1" height="1.2" fill="#9a9aa8" fill-opacity="0.5"/>
<rect x="40" y="49.8" width="1" height="1.2" fill="#9a9aa8" fill-opacity="0.5"/>
<rect x="41" y="49.8" width="2" height="1.2" fill="#9a9aa8" fill-opacity="0.35"/>
<rect x="2" y="52.4" width="1" height="1.2" fill="#9a9aa8" fill-opacity="0.35"/>
<rect x="3" y="52.4" width="1" height="1.2" fill="#9a9aa8" fill-opacity="0.35"/>
<rect x="4" y="52.4" width="2" height="1.2" fill="#9a9aa8" fill-opacity="0.75"/>
<rect x="6" y="52.4" width="2" height="1.2" fill="#9a9aa8" fill-opacity="0.75"/>
<rect x="8" y="52.4" width="3" height="1.2" fill="#9a9aa8" fill-opacity="0.5"/>
<rect x="10" y="52.4" width="1" height="1.2" fill="#9a9aa8" fill-opacity="0.5"/>
<rect x="11" y="52.4" width="3" height="1.2" fill="#9a9aa8" fill-opacity="0.75"/>
<rect x="14" y="52.4" width="2" height="1.2" fill="#9a9aa8" fill-opacity="0.6"/>
<rect x="16" y="52.4" width="2" height="1.2" fill="#9a9aa8" fill-opacity="0.35"/>
<rect x="18" y="52.4" width="3" height="1.2" fill="#9a9aa8" fill-opacity="0.75"/>
<rect x="21" y="52.4" width="3" height="1.2" fill="#9a9aa8" fill-opacity="0.6"/>
<rect x="23" y="52.4" width="3" height="1.2" fill="#9a9aa8" fill-opacity="0.35"/>
<rect x="26" y="52.4" width="2" height="1.2" fill="#9a9aa8" fill-opacity="0.6"/>
<rect x="29" y="52.4" width="2" height="1.2" fill="#9a9aa8" fill-opacity="0.6"/>
<rect x="31" y="52.4" width="3" height="1.2" fill="#9a9aa8" fill-opacity="0.75"/>
<rect x="35" y="52.4" width="3" height="1.2" fill="#9a9aa8" fill-opacity="0.75"/>
<rect x="39" y="52.4" width="3" height="1.2" fill="#9a9aa8" fill-opacity="0.6"/>
<rect x="2" y="55.0" width="3" height="1.2" fill="#9aa0e0" fill-opacity="0.5"/>
<rect x="5" y="55.0" width="2" height="1.2" fill="#9aa0e0" fill-opacity="0.6"/>
<rect x="7" y="55.0" width="3" height="1.2" fill="#9aa0e0" fill-opacity="0.5"/>
<rect x="10" y="55.0" width="2" height="1.2" fill="#9aa0e0" fill-opacity="0.5"/>
<rect x="12" y="55.0" width="3" height="1.2" fill="#9aa0e0" fill-opacity="0.5"/>
<rect x="14" y="55.0" width="3" height="1.2" fill="#9aa0e0" fill-opacity="0.5"/>
<rect x="17" y="55.0" width="3" height="1.2" fill="#9aa0e0" fill-opacity="0.35"/>
<rect x="20" y="55.0" width="3" height="1.2" fill="#9aa0e0" fill-opacity="0.5"/>
<rect x="23" y="55.0" width="1" height="1.2" fill="#9aa0e0" fill-opacity="0.5"/>
<rect x="2" y="57.5" width="2" height="1.2" fill="#9a9aa8" fill-opacity="0.6"/>
<rect x="4" y="60.1" width="2" height="1.2" fill="#9a9aa8" fill-opacity="0.75"/>
<rect x="6" y="60.1" width="1" height="1.2" fill="#9a9aa8" fill-opacity="0.75"/>
<rect x="7" y="60.1" width="3" height="1.2" fill="#9a9aa8" fill-opacity="0.5"/>
<rect x="10" y="60.1" width="1" height="1.2" fill="#9a9aa8" fill-opacity="0.35"/>
<rect x="12" y="60.1" width="2" height="1.2" fill="#9a9aa8" fill-opacity="0.5"/>
<rect x="14" y="60.1" width="3" height="1.2" fill="#9a9aa8" fill-opacity="0.6"/>
<rect x="17" y="60.1" width="3" height="1.2" fill="#9a9aa8" fill-opacity="0.5"/>
<rect x="20" y="60.1" width="1" height="1.2" fill="#9a9aa8" fill-opacity="0.35"/>
<rect x="21" y="60.1" width="2" height="1.2" fill="#9a9aa8" fill-opacity="0.6"/>
<rect x="23" y="60.1" width="3" height="1.2" fill="#9a9aa8" fill-opacity="0.6"/>
<rect x="26" y="60.1" width="1" height="1.2" fill="#9a9aa8" fill-opacity="0.5"/>
<rect x="27" y="60.1" width="3" height="1.2" fill="#9a9aa8" fill-opacity="0.35"/>
<rect x="29" y="60.1" width="1" height="1.2" fill="#9a9aa8" fill-opacity="0.75"/>
<rect x="30" y="60.1" width="1" height="1.2" fill="#9a9aa8" fill-opacity="0.5"/>
<rect x="31" y="60.1" width="2" height="1.2" fill="#9a9aa8" fill-opacity="0.75"/>
<rect x="33" y="60.1" width="3" height="1.2" fill="#9a9aa8" fill-opacity="0.35"/>
<rect x="36" y="60.1" width="1" height="1.2" fill="#9a9aa8" fill-opacity="0.5"/>
<rect x="37" y="60.1" width="2" height="1.2" fill="#9a9aa8" fill-opacity="0.75"/>
<rect x="39" y="60.1" width="1" height="1.2" fill="#9a9aa8" fill-opacity="0.75"/>
<rect x="40" y="60.1" width="1" height="1.2" fill="#9a9aa8" fill-opacity="0.75"/>
<rect x="42" y="60.1" width="2" height="1.2" fill="#9a9aa8" fill-opacity="0.5"/>
<rect x="44" y="60.1" width="2" height="1.2" fill="#9a9aa8" fill-opacity="0.5"/>
<rect x="47" y="60.1" width="2" height="1.2" fill="#9a9aa8" fill-opacity="0.35"/>
<rect x="49" y="60.1" width="3" height="1.2" fill="#9a9aa8" fill-opacity="0.35"/>
<rect x="52" y="60.1" width="3" height="1.2" fill="#9a9aa8" fill-opacity="0.5"/>
<rect x="55" y="60.1" width="2" height="1.2" fill="#9a9aa8" fill-opacity="0.75"/>
<rect x="57" y="60.1" width="3" height="1.2" fill="#9a9aa8" fill-opacity="0.35"/>
<rect x="59" y="60.1" width="2" height="1.2" fill="#9a9aa8" fill-opacity="0.75"/>
<rect x="61" y="60.1" width="3" height="1.2" fill="#9a9aa8" fill-opacity="0.75"/>
<rect x="4" y="62.7" width="3" height="1.2" fill="#9a9aa8" fill-opacity="0.75"/>
<rect x="7" y="62.7" width="2" height="1.2" fill="#9a9aa8" fill-opacity="0.35"/>
<rect x="9" y="62.7" width="3" height="1.2" fill="#9a9aa8" fill-opacity="0.35"/>
<rect x="12" y="62.7" width="3" height="1.2" fill="#9a9aa8" fill-opacity="0.6"/>
<rect x="14" y="62.7" width="3" height="1.2" fill="#9a9aa8" fill-opacity="0.75"/>
<rect x="17" y="62.7" width="2" height="1.2" fill="#9a9aa8" fill-opacity="0.35"/>
<rect x="19" y="62.7" width="2" height="1.2" fill="#9a9aa8" fill-opacity="0.35"/>
<rect x="21" y="62.7" width="2" height="1.2" fill="#9a9aa8" fill-opacity="0.75"/>
<rect x="23" y="62.7" width="3" height="1.2" fill="#9a9aa8" fill-opacity="0.75"/>
<rect x="25" y="62.7" width="2" height="1.2" fill="#9a9aa8" fill-opacity="0.6"/>
<rect x="27" y="62.7" width="3" height="1.2" fill="#9a9aa8" fill-opacity="0.35"/>
<rect x="30" y="62.7" width="1" height="1.2" fill="#9a9aa8" fill-opacity="0.35"/>
<rect x="31" y="62.7" width="2" height="1.2" fill="#9a9aa8" fill-opacity="0.5"/>
<rect x="33" y="62.7" width="3" height="1.2" fill="#9a9aa8" fill-opacity="0.75"/>
<rect x="37" y="62.7" width="2" height="1.2" fill="#9a9aa8" fill-opacity="0.35"/>
<rect x="40" y="62.7" width="1" height="1.2" fill="#9a9aa8" fill-opacity="0.6"/>
<rect x="41" y="62.7" width="3" height="1.2" fill="#9a9aa8" fill-opacity="0.75"/>
<rect x="44" y="62.7" width="1" height="1.2" fill="#9a9aa8" fill-opacity="0.35"/>
<rect x="45" y="62.7" width="3" height="1.2" fill="#9a9aa8" fill-opacity="0.6"/>
<rect x="48" y="62.7" width="3" height="1.2" fill="#9a9aa8" fill-opacity="0.75"/>
<rect x="51" y="62.7" width="1" height="1.2" fill="#9a9aa8" fill-opacity="0.5"/>
<rect x="52" y="62.7" width="3" height="1.2" fill="#9a9aa8" fill-opacity="0.75"/>
<rect x="55" y="62.7" width="3" height="1.2" fill="#9a9aa8" fill-opacity="0.35"/>
<rect x="58" y="62.7" width="1" height="1.2" fill="#9a9aa8" fill-opacity="0.35"/>
<rect x="59" y="62.7" width="3" height="1.2" fill="#9a9aa8" fill-opacity="0.5"/>
<rect x="4" y="65.2" width="2" height="1.2" fill="#9a9aa8" fill-opacity="0.5"/>
<rect x="7" y="65.2" width="1" height="1.2" fill="#9a9aa8" fill-opacity="0.6"/>
<rect x="8" y="65.2" width="1" height="1.2" fill="#9a9aa8" fill-opacity="0.35"/>
<rect x="9" y="65.2" width="2" height="1.2" fill="#9a9aa8" fill-opacity="0.75"/>
<rect x="11" y="65.2" width="3" height="1.2" fill="#9a9aa8" fill-opacity="0.75"/>
<rect x="14" y="65.2" width="2" height="1.2" fill="#9a9aa8" fill-opacity="0.5"/>
<rect x="16" y="65.2" width="1" height="1.2" fill="#9a9aa8" fill-opacity="0.6"/>
<rect x="17" y="65.2" width="1" height="1.2" fill="#9a9aa8" fill-opacity="0.75"/>
<rect x="19" y="65.2" width="2" height="1.2" fill="#9a9aa8" fill-opacity="0.6"/>
<rect x="21" y="65.2" width="2" height="1.2" fill="#9a9aa8" fill-opacity="0.5"/>
<rect x="23" y="65.2" width="2" height="1.2" fill="#9a9aa8" fill-opacity="0.5"/>
<rect x="25" y="65.2" width="1" height="1.2" fill="#9a9aa8" fill-opacity="0.6"/>
<rect x="27" y="65.2" width="1" height="1.2" fill="#9a9aa8" fill-opacity="0.6"/>
<rect x="28" y="65.2" width="2" height="1.2" fill="#9a9aa8" fill-opacity="0.75"/>
<rect x="30" y="65.2" width="1" height="1.2" fill="#9a9aa8" fill-opacity="0.5"/>
<rect x="31" y="65.2" width="3" height="1.2" fill="#9a9aa8" fill-opacity="0.5"/>
<rect x="33" y="65.2" width="1" height="1.2" fill="#9a9aa8" fill-opacity="0.35"/>
<rect x="34" y="65.2" width="2" height="1.2" fill="#9a9aa8" fill-opacity="0.6"/>
<rect x="36" y="65.2" width="2" height="1.2" fill="#9a9aa8" fill-opacity="0.75"/>
<rect x="39" y="65.2" width="2" height="1.2" fill="#9a9aa8" fill-opacity="0.75"/>
<rect x="4" y="67.8" width="1" height="1.2" fill="#9a9aa8" fill-opacity="0.6"/>
<rect x="5" y="67.8" width="1" height="1.2" fill="#9a9aa8" fill-opacity="0.5"/>
<rect x="6" y="67.8" width="2" height="1.2" fill="#9a9aa8" fill-opacity="0.5"/>
<rect x="12" y="70.4" width="2" height="1.2" fill="#9a9aa8" fill-opacity="0.35"/>
<rect x="14" y="70.4" width="3" height="1.2" fill="#9a9aa8" fill-opacity="0.5"/>
<rect x="17" y="70.4" width="2" height="1.2" fill="#9a9aa8" fill-opacity="0.5"/>
<rect x="19" y="70.4" width="1" height="1.2" fill="#9a9aa8" fill-opacity="0.6"/>
<rect x="20" y="70.4" width="1" height="1.2" fill="#9a9aa8" fill-opacity="0.35"/>
<rect x="21" y="70.4" width="2" height="1.2" fill="#9a9aa8" fill-opacity="0.35"/>
<rect x="23" y="70.4" width="2" height="1.2" fill="#9a9aa8" fill-opacity="0.35"/>
<rect x="25" y="70.4" width="3" height="1.2" fill="#9a9aa8" fill-opacity="0.35"/>
<rect x="28" y="70.4" width="1" height="1.2" fill="#9a9aa8" fill-opacity="0.6"/>
<rect x="29" y="70.4" width="3" height="1.2" fill="#9a9aa8" fill-opacity="0.6"/>
<rect x="32" y="70.4" width="3" height="1.2" fill="#9a9aa8" fill-opacity="0.35"/>
<rect x="35" y="70.4" width="1" height="1.2" fill="#9a9aa8" fill-opacity="0.6"/>
<rect x="36" y="70.4" width="1" height="1.2" fill="#9a9aa8" fill-opacity="0.5"/>
<rect x="37" y="70.4" width="1" height="1.2" fill="#9a9aa8" fill-opacity="0.6"/>
<rect x="38" y="70.4" width="3" height="1.2" fill="#9a9aa8" fill-opacity="0.35"/>
<rect x="41" y="70.4" width="1" height="1.2" fill="#9a9aa8" fill-opacity="0.35"/>
<rect x="42" y="70.4" width="3" height="1.2" fill="#9a9aa8" fill-opacity="0.75"/>
<rect x="46" y="70.4" width="2" height="1.2" fill="#9a9aa8" fill-opacity="0.35"/>
<rect x="48" y="70.4" width="2" height="1.2" fill="#9a9aa8" fill-opacity="0.35"/>
<rect x="50" y="70.4" width="1" height="1.2" fill="#9a9aa8" fill-opacity="0.35"/>
<rect x="51" y="70.4" width="3" height="1.2" fill="#9a9aa8" fill-opacity="0.6"/>
<rect x="54" y="70.4" width="2" height="1.2" fill="#9a9aa8" fill-opacity="0.75"/>
<rect x="56" y="70.4" width="1" height="1.2" fill="#9a9aa8" fill-opacity="0.6"/>
<rect x="58" y="70.4" width="3" height="1.2" fill="#9a9aa8" fill-opacity="0.5"/>
<rect x="61" y="70.4" width="3" height="1.2" fill="#9a9aa8" fill-opacity="0.5"/>
<rect x="64" y="70.4" width="1" height="1.2" fill="#9a9aa8" fill-opacity="0.75"/>
<rect x="65" y="70.4" width="1" height="1.2" fill="#9a9aa8" fill-opacity="0.75"/>
<rect x="66" y="70.4" width="3" height="1.2" fill="#9a9aa8" fill-opacity="0.6"/>
<rect x="69" y="70.4" width="2" height="1.2" fill="#9a9aa8" fill-opacity="0.75"/>
<rect x="71" y="70.4" width="3" height="1.2" fill="#9a9aa8" fill-opacity="0.5"/>
<rect x="12" y="73.0" width="1" height="1.2" fill="#9a9aa8" fill-opacity="0.35"/>
<rect x="13" y="73.0" width="3" height="1.2" fill="#9a9aa8" fill-opacity="0.75"/>
<rect x="15" y="73.0" width="2" height="1.2" fill="#9a9aa8" fill-opacity="0.5"/>
<rect x="17" y="73.0" width="3" height="1.2" fill="#9a9aa8" fill-opacity="0.35"/>
<rect x="20" y="73.0" width="2" height="1.2" fill="#9a9aa8" fill-opacity="0.75"/>
<rect x="22" y="73.0" width="3" height="1.2" fill="#9a9aa8" fill-opacity="0.75"/>
<rect x="25" y="73.0" width="3" height="1.2" fill="#9a9aa8" fill-opacity="0.6"/>
<rect x="28" y="73.0" width="1" height="1.2" fill="#9a9aa8" fill-opacity="0.35"/>
<rect x="29" y="73.0" width="1" height="1.2" fill="#9a9aa8" fill-opacity="0.5"/>
<rect x="30" y="73.0" width="3" height="1.2" fill="#9a9aa8" fill-opacity="0.5"/>
<rect x="32" y="73.0" width="1" height="1.2" fill="#9a9aa8" fill-opacity="0.35"/>
<rect x="33" y="73.0" width="2" height="1.2" fill="#9a9aa8" fill-opacity="0.75"/>
<rect x="35" y="73.0" width="1" height="1.2" fill="#9a9aa8" fill-opacity="0.6"/>
<rect x="36" y="73.0" width="3" height="1.2" fill="#9a9aa8" fill-opacity="0.6"/>
<rect x="39" y="73.0" width="3" height="1.2" fill="#9a9aa8" fill-opacity="0.75"/>
<rect x="42" y="73.0" width="1" height="1.2" fill="#9a9aa8" fill-opacity="0.5"/>
<rect x="44" y="73.0" width="2" height="1.2" fill="#9a9aa8" fill-opacity="0.5"/>
<rect x="46" y="73.0" width="1" height="1.2" fill="#9a9aa8" fill-opacity="0.75"/>
<rect x="47" y="73.0" width="3" height="1.2" fill="#9a9aa8" fill-opacity="0.75"/>
<rect x="50" y="73.0" width="1" height="1.2" fill="#9a9aa8" fill-opacity="0.6"/>
<rect x="51" y="73.0" width="2" height="1.2" fill="#9a9aa8" fill-opacity="0.75"/>
<rect x="53" y="73.0" width="3" height="1.2" fill="#9a9aa8" fill-opacity="0.5"/>
<rect x="56" y="73.0" width="3" height="1.2" fill="#9a9aa8" fill-opacity="0.35"/>
<rect x="59" y="73.0" width="1" height="1.2" fill="#9a9aa8" fill-opacity="0.75"/>
<rect x="61" y="73.0" width="1" height="1.2" fill="#9a9aa8" fill-opacity="0.5"/>
<rect x="62" y="73.0" width="3" height="1.2" fill="#9a9aa8" fill-opacity="0.75"/>
<rect x="65" y="73.0" width="3" height="1.2" fill="#9a9aa8" fill-opacity="0.35"/>
<rect x="68" y="73.0" width="1" height="1.2" fill="#9a9aa8" fill-opacity="0.5"/>
<rect x="69" y="73.0" width="2" height="1.2" fill="#9a9aa8" fill-opacity="0.5"/>
<rect x="71" y="73.0" width="1" height="1.2" fill="#9a9aa8" fill-opacity="0.75"/>
<rect x="73" y="73.0" width="2" height="1.2" fill="#9a9aa8" fill-opacity="0.75"/>
<rect x="75" y="73.0" width="2" height="1.2" fill="#9a9aa8" fill-opacity="0.35"/>
<rect x="77" y="73.0" width="1" height="1.2" fill="#9a9aa8" fill-opacity="0.5"/>
<rect x="78" y="73.0" width="2" height="1.2" fill="#9a9aa8" fill-opacity="0.6"/>
<rect x="80" y="73.0" width="1" height="1.2" fill="#9a9aa8" fill-opacity="0.5"/>
<rect x="81" y="73.0" width="2" height="1.2" fill="#9a9aa8" fill-opacity="0.75"/>
<rect x="12" y="75.5" width="2" height="1.2" fill="#9fcf95" fill-opacity="0.6"/>
<rect x="14" y="75.5" width="3" height="1.2" fill="#9fcf95" fill-opacity="0.5"/>
<rect x="17" y="75.5" width="1" height="1.2" fill="#9fcf95" fill-opacity="0.5"/>
<rect x="18" y="75.5" width="2" height="1.2" fill="#9fcf95" fill-opacity="0.35"/>
<rect x="20" y="75.5" width="3" height="1.2" fill="#9fcf95" fill-opacity="0.5"/>
<rect x="23" y="75.5" width="2" height="1.2" fill="#9fcf95" fill-opacity="0.75"/>
<rect x="25" y="75.5" width="1" height="1.2" fill="#9fcf95" fill-opacity="0.75"/>
<rect x="26" y="75.5" width="2" height="1.2" fill="#9fcf95" fill-opacity="0.35"/>
<rect x="28" y="75.5" width="2" height="1.2" fill="#9fcf95" fill-opacity="0.6"/>
<rect x="30" y="75.5" width="1" height="1.2" fill="#9fcf95" fill-opacity="0.5"/>
<rect x="31" y="75.5" width="3" height="1.2" fill="#9fcf95" fill-opacity="0.5"/>
<rect x="34" y="75.5" width="1" height="1.2" fill="#9fcf95" fill-opacity="0.75"/>
<rect x="35" y="75.5" width="1" height="1.2" fill="#9fcf95" fill-opacity="0.75"/>
<rect x="36" y="75.5" width="2" height="1.2" fill="#9fcf95" fill-opacity="0.75"/>
<rect x="38" y="75.5" width="2" height="1.2" fill="#9fcf95" fill-opacity="0.75"/>
<rect x="40" y="75.5" width="3" height="1.2" fill="#9fcf95" fill-opacity="0.5"/>
<rect x="44" y="75.5" width="1" height="1.2" fill="#9fcf95" fill-opacity="0.75"/>
<rect x="45" y="75.5" width="2" height="1.2" fill="#9fcf95" fill-opacity="0.35"/>
<rect x="47" y="75.5" width="1" height="1.2" fill="#9fcf95" fill-opacity="0.6"/>
<rect x="48" y="75.5" width="2" height="1.2" fill="#9fcf95" fill-opacity="0.6"/>
<rect x="50" y="75.5" width="3" height="1.2" fill="#9fcf95" fill-opacity="0.35"/>
<rect x="54" y="75.5" width="1" height="1.2" fill="#9fcf95" fill-opacity="0.6"/>
<rect x="55" y="75.5" width="3" height="1.2" fill="#9fcf95" fill-opacity="0.75"/>
<rect x="58" y="75.5" width="3" height="1.2" fill="#9fcf95" fill-opacity="0.5"/>
<rect x="61" y="75.5" width="2" height="1.2" fill="#9fcf95" fill-opacity="0.35"/>
<rect x="63" y="75.5" width="2" height="1.2" fill="#9fcf95" fill-opacity="0.35"/>
<rect x="65" y="75.5" width="3" height="1.2" fill="#9fcf95" fill-opacity="0.6"/>
<rect x="68" y="75.5" width="1" height="1.2" fill="#9fcf95" fill-opacity="0.5"/>
<rect x="12" y="78.1" width="2" height="1.2" fill="#9fcf95" fill-opacity="0.75"/>
<rect x="14" y="78.1" width="1" height="1.2" fill="#9fcf95" fill-opacity="0.75"/>
<rect x="15" y="78.1" width="2" height="1.2" fill="#9fcf95" fill-opacity="0.6"/>
<rect x="17" y="78.1" width="3" height="1.2" fill="#9fcf95" fill-opacity="0.35"/>
<rect x="20" y="78.1" width="2" height="1.2" fill="#9fcf95" fill-opacity="0.5"/>
<rect x="22" y="78.1" width="2" height="1.2" fill="#9fcf95" fill-opacity="0.35"/>
<rect x="24" y="78.1" width="1" height="1.2" fill="#9fcf95" fill-opacity="0.5"/>
<rect x="25" y="78.1" width="3" height="1.2" fill="#9fcf95" fill-opacity="0.5"/>
<rect x="27" y="78.1" width="1" height="1.2" fill="#9fcf95" fill-opacity="0.6"/>
<rect x="28" y="78.1" width="2" height="1.2" fill="#9fcf95" fill-opacity="0.75"/>
<rect x="30" y="78.1" width="3" height="1.2" fill="#9fcf95" fill-opacity="0.5"/>
<rect x="33" y="78.1" width="3" height="1.2" fill="#9fcf95" fill-opacity="0.6"/>
<rect x="36" y="78.1" width="2" height="1.2" fill="#9fcf95" fill-opacity="0.75"/>
<rect x="38" y="78.1" width="3" height="1.2" fill="#9fcf95" fill-opacity="0.75"/>
<rect x="40" y="78.1" width="1" height="1.2" fill="#9fcf95" fill-opacity="0.6"/>
<rect x="41" y="78.1" width="3" height="1.2" fill="#9fcf95" fill-opacity="0.75"/>
<rect x="45" y="78.1" width="1" height="1.2" fill="#9fcf95" fill-opacity="0.75"/>
<rect x="46" y="78.1" width="3" height="1.2" fill="#9fcf95" fill-opacity="0.6"/>
<rect x="49" y="78.1" width="1" height="1.2" fill="#9fcf95" fill-opacity="0.35"/>
<rect x="50" y="78.1" width="2" height="1.2" fill="#9fcf95" fill-opacity="0.6"/>
<rect x="52" y="78.1" width="2" height="1.2" fill="#9fcf95" fill-opacity="0.5"/>
<rect x="54" y="78.1" width="1" height="1.2" fill="#9fcf95" fill-opacity="0.35"/>
<rect x="55" y="78.1" width="3" height="1.2" fill="#9fcf95" fill-opacity="0.75"/>
<rect x="59" y="78.1" width="1" height="1.2" fill="#9fcf95" fill-opacity="0.6"/>
<rect x="60" y="78.1" width="3" height="1.2" fill="#9fcf95" fill-opacity="0.35"/>
<rect x="63" y="78.1" width="1" height="1.2" fill="#9fcf95" fill-opacity="0.6"/>
<rect x="64" y="78.1" width="3" height="1.2" fill="#9fcf95" fill-opacity="0.35"/>
<rect x="67" y="78.1" width="2" height="1.2" fill="#9fcf95" fill-opacity="0.5"/>
<rect x="69" y="78.1" width="3" height="1.2" fill="#9fcf95" fill-opacity="0.6"/>
<rect x="6" y="80.7" width="2" height="1.2" fill="#9a9aa8" fill-opacity="0.75"/>
<rect x="8" y="80.7" width="1" height="1.2" fill="#9a9aa8" fill-opacity="0.75"/>
<rect x="4" y="83.2" width="2" height="1.2" fill="#9a9aa8" fill-opacity="0.6"/>
<rect x="4" y="88.4" width="1" height="1.2" fill="#9a9aa8" fill-opacity="0.75"/>
<rect x="5" y="88.4" width="1" height="1.2" fill="#9a9aa8" fill-opacity="0.6"/>
<rect x="6" y="88.4" width="3" height="1.2" fill="#9a9aa8" fill-opacity="0.5"/>
<rect x="9" y="88.4" width="3" height="1.2" fill="#9a9aa8" fill-opacity="0.35"/>
<rect x="13" y="88.4" width="2" height="1.2" fill="#9a9aa8" fill-opacity="0.5"/>
<rect x="15" y="88.4" width="2" height="1.2" fill="#9a9aa8" fill-opacity="0.6"/>
<rect x="17" y="88.4" width="3" height="1.2" fill="#9a9aa8" fill-opacity="0.6"/>
<rect x="21" y="88.4" width="2" height="1.2" fill="#9a9aa8" fill-opacity="0.35"/>
<rect x="24" y="88.4" width="1" height="1.2" fill="#9a9aa8" fill-opacity="0.75"/>
<rect x="25" y="88.4" width="2" height="1.2" fill="#9a9aa8" fill-opacity="0.35"/>
<rect x="27" y="88.4" width="2" height="1.2" fill="#9a9aa8" fill-opacity="0.75"/>
<rect x="29" y="88.4" width="3" height="1.2" fill="#9a9aa8" fill-opacity="0.6"/>
<rect x="32" y="88.4" width="3" height="1.2" fill="#9a9aa8" fill-opacity="0.6"/>
<rect x="35" y="88.4" width="2" height="1.2" fill="#9a9aa8" fill-opacity="0.35"/>
<rect x="37" y="88.4" width="1" height="1.2" fill="#9a9aa8" fill-opacity="0.35"/>
<rect x="38" y="88.4" width="2" height="1.2" fill="#9a9aa8" fill-opacity="0.6"/>
<rect x="40" y="88.4" width="2" height="1.2" fill="#9a9aa8" fill-opacity="0.6"/>
<rect x="42" y="88.4" width="3" height="1.2" fill="#9a9aa8" fill-opacity="0.5"/>
<rect x="45" y="88.4" width="3" height="1.2" fill="#9a9aa8" fill-opacity="0.75"/>
<rect x="49" y="88.4" width="3" height="1.2" fill="#9a9aa8" fill-opacity="0.6"/>
<rect x="52" y="88.4" width="2" height="1.2" fill="#9a9aa8" fill-opacity="0.35"/>
<rect x="54" y="88.4" width="3" height="1.2" fill="#9a9aa8" fill-opacity="0.5"/>
<rect x="58" y="88.4" width="3" height="1.2" fill="#9a9aa8" fill-opacity="0.35"/>
<rect x="62" y="88.4" width="3" height="1.2" fill="#9a9aa8" fill-opacity="0.75"/>
<rect x="65" y="88.4" width="3" height="1.2" fill="#9a9aa8" fill-opacity="0.75"/>
<rect x="68" y="88.4" width="1" height="1.2" fill="#9a9aa8" fill-opacity="0.6"/>
<rect x="69" y="88.4" width="1" height="1.2" fill="#9a9aa8" fill-opacity="0.75"/>
<rect x="70" y="88.4" width="2" height="1.2" fill="#9a9aa8" fill-opacity="0.75"/>
<rect x="72" y="88.4" width="2" height="1.2" fill="#9a9aa8" fill-opacity="0.35"/>
<rect x="74" y="88.4" width="3" height="1.2" fill="#9a9aa8" fill-opacity="0.6"/>
<rect x="4" y="90.9" width="2" height="1.2" fill="#9a9aa8" fill-opacity="0.35"/>
<rect x="6" y="90.9" width="1" height="1.2" fill="#9a9aa8" fill-opacity="0.5"/>
<rect x="7" y="90.9" width="2" height="1.2" fill="#9a9aa8" fill-opacity="0.5"/>
<rect x="9" y="90.9" width="2" height="1.2" fill="#9a9aa8" fill-opacity="0.5"/>
<rect x="12" y="90.9" width="3" height="1.2" fill="#9a9aa8" fill-opacity="0.35"/>
<rect x="15" y="90.9" width="3" height="1.2" fill="#9a9aa8" fill-opacity="0.75"/>
<rect x="18" y="90.9" width="1" height="1.2" fill="#9a9aa8" fill-opacity="0.75"/>
<rect x="19" y="90.9" width="3" height="1.2" fill="#9a9aa8" fill-opacity="0.35"/>
<rect x="21" y="90.9" width="3" height="1.2" fill="#9a9aa8" fill-opacity="0.6"/>
<rect x="24" y="90.9" width="2" height="1.2" fill="#9a9aa8" fill-opacity="0.6"/>
<rect x="26" y="90.9" width="1" height="1.2" fill="#9a9aa8" fill-opacity="0.35"/>
<rect x="27" y="90.9" width="2" height="1.2" fill="#9a9aa8" fill-opacity="0.5"/>
<rect x="29" y="90.9" width="3" height="1.2" fill="#9a9aa8" fill-opacity="0.75"/>
<rect x="33" y="90.9" width="1" height="1.2" fill="#9a9aa8" fill-opacity="0.5"/>
<rect x="34" y="90.9" width="1" height="1.2" fill="#9a9aa8" fill-opacity="0.5"/>
<rect x="35" y="90.9" width="2" height="1.2" fill="#9a9aa8" fill-opacity="0.75"/>
<rect x="37" y="90.9" width="3" height="1.2" fill="#9a9aa8" fill-opacity="0.6"/>
<rect x="4" y="93.5" width="2" height="1.2" fill="#9a9aa8" fill-opacity="0.75"/>
<rect x="6" y="93.5" width="1" height="1.2" fill="#9a9aa8" fill-opacity="0.5"/>
<rect x="7" y="93.5" width="2" height="1.2" fill="#9a9aa8" fill-opacity="0.6"/>
<rect x="9" y="93.5" width="3" height="1.2" fill="#9a9aa8" fill-opacity="0.5"/>
<rect x="11" y="93.5" width="3" height="1.2" fill="#9a9aa8" fill-opacity="0.5"/>
<rect x="14" y="93.5" width="1" height="1.2" fill="#9a9aa8" fill-opacity="0.35"/>
<rect x="15" y="93.5" width="1" height="1.2" fill="#9a9aa8" fill-opacity="0.6"/>
<rect x="16" y="93.5" width="1" height="1.2" fill="#9a9aa8" fill-opacity="0.75"/>
<rect x="17" y="93.5" width="3" height="1.2" fill="#9a9aa8" fill-opacity="0.75"/>
<rect x="20" y="93.5" width="1" height="1.2" fill="#9a9aa8" fill-opacity="0.5"/>
<rect x="22" y="93.5" width="2" height="1.2" fill="#9a9aa8" fill-opacity="0.75"/>
<rect x="24" y="93.5" width="1" height="1.2" fill="#9a9aa8" fill-opacity="0.6"/>
<rect x="25" y="93.5" width="2" height="1.2" fill="#9a9aa8" fill-opacity="0.75"/>
<rect x="27" y="93.5" width="3" height="1.2" fill="#9a9aa8" fill-opacity="0.75"/>
<rect x="30" y="93.5" width="2" height="1.2" fill="#9a9aa8" fill-opacity="0.6"/>
<rect x="32" y="93.5" width="2" height="1.2" fill="#9a9aa8" fill-opacity="0.6"/>
<rect x="34" y="93.5" width="2" height="1.2" fill="#9a9aa8" fill-opacity="0.5"/>
<rect x="36" y="93.5" width="3" height="1.2" fill="#9a9aa8" fill-opacity="0.5"/>
<rect x="12" y="96.1" width="3" height="1.2" fill="#9fcf95" fill-opacity="0.5"/>
<rect x="15" y="96.1" width="3" height="1.2" fill="#9fcf95" fill-opacity="0.6"/>
<rect x="18" y="96.1" width="1" height="1.2" fill="#9fcf95" fill-opacity="0.5"/>
<rect x="19" y="96.1" width="1" height="1.2" fill="#9fcf95" fill-opacity="0.75"/>
<rect x="20" y="96.1" width="3" height="1.2" fill="#9fcf95" fill-opacity="0.6"/>
<rect x="23" y="96.1" width="1" height="1.2" fill="#9fcf95" fill-opacity="0.5"/>
<rect x="25" y="96.1" width="2" height="1.2" fill="#9fcf95" fill-opacity="0.5"/>
<rect x="28" y="96.1" width="3" height="1.2" fill="#9fcf95" fill-opacity="0.6"/>
<rect x="31" y="96.1" width="2" height="1.2" fill="#9fcf95" fill-opacity="0.6"/>
<rect x="33" y="96.1" width="3" height="1.2" fill="#9fcf95" fill-opacity="0.75"/>
<rect x="35" y="96.1" width="3" height="1.2" fill="#9fcf95" fill-opacity="0.5"/>
<rect x="38" y="96.1" width="1" height="1.2" fill="#9fcf95" fill-opacity="0.5"/>
<rect x="39" y="96.1" width="3" height="1.2" fill="#9fcf95" fill-opacity="0.35"/>
<rect x="42" y="96.1" width="1" height="1.2" fill="#9fcf95" fill-opacity="0.5"/>
<rect x="44" y="96.1" width="2" height="1.2" fill="#9fcf95" fill-opacity="0.35"/>
<rect x="46" y="96.1" width="2" height="1.2" fill="#9fcf95" fill-opacity="0.6"/>
<rect x="48" y="96.1" width="1" height="1.2" fill="#9fcf95" fill-opacity="0.75"/>
<rect x="49" y="96.1" width="1" height="1.2" fill="#9fcf95" fill-opacity="0.6"/>
<rect x="51" y="96.1" width="2" height="1.2" fill="#9fcf95" fill-opacity="0.75"/>
<rect x="53" y="96.1" width="3" height="1.2" fill="#9fcf95" fill-opacity="0.6"/>
<rect x="55" y="96.1" width="2" height="1.2" fill="#9fcf95" fill-opacity="0.75"/>
<rect x="57" y="96.1" width="1" height="1.2" fill="#9fcf95" fill-opacity="0.75"/>
<rect x="58" y="96.1" width="3" height="1.2" fill="#9fcf95" fill-opacity="0.5"/>
<rect x="61" y="96.1" width="2" height="1.2" fill="#9fcf95" fill-opacity="0.5"/>
<rect x="63" y="96.1" width="2" height="1.2" fill="#9fcf95" fill-opacity="0.5"/>
<rect x="65" y="96.1" width="1" height="1.2" fill="#9fcf95" fill-opacity="0.6"/>
<rect x="66" y="96.1" width="2" height="1.2" fill="#9fcf95" fill-opacity="0.75"/>
<rect x="68" y="96.1" width="1" height="1.2" fill="#9fcf95" fill-opacity="0.5"/>
<rect x="69" y="96.1" width="2" height="1.2" fill="#9fcf95" fill-opacity="0.35"/>
<rect x="72" y="96.1" width="3" height="1.2" fill="#9fcf95" fill-opacity="0.5"/>
<rect x="75" y="96.1" width="2" height="1.2" fill="#9fcf95" fill-opacity="0.75"/>
<rect x="77" y="96.1" width="2" height="1.2" fill="#9fcf95" fill-opacity="0.6"/>
<rect x="79" y="96.1" width="1" height="1.2" fill="#9fcf95" fill-opacity="0.75"/>
<rect x="4" y="101.2" width="2" height="1.2" fill="#9aa0e0" fill-opacity="0.35"/>
<rect x="6" y="101.2" width="1" height="1.2" fill="#9aa0e0" fill-opacity="0.35"/>
<rect x="7" y="101.2" width="1" height="1.2" fill="#9aa0e0" fill-opacity="0.6"/>
<rect x="8" y="101.2" width="3" height="1.2" fill="#9aa0e0" fill-opacity="0.35"/>
<rect x="11" y="101.2" width="1" height="1.2" fill="#9aa0e0" fill-opacity="0.5"/>
<rect x="12" y="101.2" width="2" height="1.2" fill="#9aa0e0" fill-opacity="0.75"/>
<rect x="15" y="101.2" width="1" height="1.2" fill="#9aa0e0" fill-opacity="0.75"/>
<rect x="16" y="101.2" width="2" height="1.2" fill="#9aa0e0" fill-opacity="0.35"/>
<rect x="18" y="101.2" width="2" height="1.2" fill="#9aa0e0" fill-opacity="0.6"/>
<rect x="20" y="101.2" width="2" height="1.2" fill="#9aa0e0" fill-opacity="0.35"/>
<rect x="22" y="101.2" width="1" height="1.2" fill="#9aa0e0" fill-opacity="0.6"/>
<rect x="23" y="101.2" width="2" height="1.2" fill="#9aa0e0" fill-opacity="0.5"/>
<rect x="25" y="101.2" width="2" height="1.2" fill="#9aa0e0" fill-opacity="0.5"/>
<rect x="27" y="101.2" width="2" height="1.2" fill="#9aa0e0" fill-opacity="0.35"/>
<rect x="29" y="101.2" width="1" height="1.2" fill="#9aa0e0" fill-opacity="0.35"/>
<rect x="31" y="101.2" width="3" height="1.2" fill="#9aa0e0" fill-opacity="0.35"/>
<rect x="34" y="101.2" width="3" height="1.2" fill="#9aa0e0" fill-opacity="0.35"/>
<rect x="36" y="101.2" width="2" height="1.2" fill="#9aa0e0" fill-opacity="0.35"/>
<rect x="38" y="101.2" width="3" height="1.2" fill="#9aa0e0" fill-opacity="0.6"/>
<rect x="41" y="101.2" width="1" height="1.2" fill="#9aa0e0" fill-opacity="0.75"/>
<rect x="43" y="101.2" width="1" height="1.2" fill="#9aa0e0" fill-opacity="0.35"/>
<rect x="44" y="101.2" width="2" height="1.2" fill="#9aa0e0" fill-opacity="0.35"/>
<rect x="46" y="101.2" width="2" height="1.2" fill="#9aa0e0" fill-opacity="0.5"/>
<rect x="48" y="101.2" width="3" height="1.2" fill="#9aa0e0" fill-opacity="0.75"/>
<rect x="51" y="101.2" width="2" height="1.2" fill="#9aa0e0" fill-opacity="0.6"/>
<rect x="53" y="101.2" width="3" height="1.2" fill="#9aa0e0" fill-opacity="0.35"/>
<rect x="57" y="101.2" width="2" height="1.2" fill="#9aa0e0" fill-opacity="0.75"/>
<rect x="59" y="101.2" width="2" height="1.2" fill="#9aa0e0" fill-opacity="0.35"/>
<rect x="61" y="101.2" width="1" height="1.2" fill="#9aa0e0" fill-opacity="0.5"/>
<rect x="12" y="103.8" width="3" height="1.2" fill="#9fcf95" fill-opacity="0.6"/>
<rect x="15" y="103.8" width="3" height="1.2" fill="#9fcf95" fill-opacity="0.6"/>
<rect x="18" y="103.8" width="2" height="1.2" fill="#9fcf95" fill-opacity="0.75"/>
<rect x="21" y="103.8" width="2" height="1.2" fill="#9fcf95" fill-opacity="0.6"/>
<rect x="23" y="103.8" width="1" height="1.2" fill="#9fcf95" fill-opacity="0.6"/>
<rect x="24" y="103.8" width="3" height="1.2" fill="#9fcf95" fill-opacity="0.35"/>
<rect x="27" y="103.8" width="2" height="1.2" fill="#9fcf95" fill-opacity="0.6"/>
<rect x="29" y="103.8" width="3" height="1.2" fill="#9fcf95" fill-opacity="0.5"/>
<rect x="32" y="103.8" width="1" height="1.2" fill="#9fcf95" fill-opacity="0.35"/>
<rect x="33" y="103.8" width="3" height="1.2" fill="#9fcf95" fill-opacity="0.5"/>
<rect x="35" y="103.8" width="2" height="1.2" fill="#9fcf95" fill-opacity="0.5"/>
<rect x="37" y="103.8" width="1" height="1.2" fill="#9fcf95" fill-opacity="0.6"/>
<rect x="38" y="103.8" width="1" height="1.2" fill="#9fcf95" fill-opacity="0.5"/>
<rect x="39" y="103.8" width="1" height="1.2" fill="#9fcf95" fill-opacity="0.6"/>
<rect x="40" y="103.8" width="2" height="1.2" fill="#9fcf95" fill-opacity="0.5"/>
<rect x="42" y="103.8" width="2" height="1.2" fill="#9fcf95" fill-opacity="0.35"/>
<rect x="44" y="103.8" width="1" height="1.2" fill="#9fcf95" fill-opacity="0.75"/>
<rect x="46" y="103.8" width="1" height="1.2" fill="#9fcf95" fill-opacity="0.75"/>
<rect x="47" y="103.8" width="1" height="1.2" fill="#9fcf95" fill-opacity="0.6"/>
<rect x="48" y="103.8" width="3" height="1.2" fill="#9fcf95" fill-opacity="0.5"/>
<rect x="51" y="103.8" width="1" height="1.2" fill="#9fcf95" fill-opacity="0.5"/>
<rect x="52" y="103.8" width="2" height="1.2" fill="#9fcf95" fill-opacity="0.35"/>
<rect x="54" y="103.8" width="3" height="1.2" fill="#9fcf95" fill-opacity="0.35"/>
<rect x="57" y="103.8" width="2" height="1.2" fill="#9fcf95" fill-opacity="0.75"/>
<rect x="59" y="103.8" width="2" height="1.2" fill="#9fcf95" fill-opacity="0.5"/>
<rect x="61" y="103.8" width="2" height="1.2" fill="#9fcf95" fill-opacity="0.75"/>
<rect x="63" y="103.8" width="3" height="1.2" fill="#9fcf95" fill-opacity="0.5"/>
<rect x="66" y="103.8" width="2" height="1.2" fill="#9fcf95" fill-opacity="0.35"/>
<rect x="12" y="106.4" width="2" height="1.2" fill="#9fcf95" fill-opacity="0.35"/>
<rect x="14" y="106.4" width="1" height="1.2" fill="#9fcf95" fill-opacity="0.75"/>
<rect x="15" y="106.4" width="3" height="1.2" fill="#9fcf95" fill-opacity="0.35"/>
<rect x="17" y="106.4" width="3" height="1.2" fill="#9fcf95" fill-opacity="0.6"/>
<rect x="20" y="106.4" width="2" height="1.2" fill="#9fcf95" fill-opacity="0.75"/>
<rect x="23" y="106.4" width="3" height="1.2" fill="#9fcf95" fill-opacity="0.35"/>
<rect x="26" y="106.4" width="1" height="1.2" fill="#9fcf95" fill-opacity="0.75"/>
<rect x="27" y="106.4" width="2" height="1.2" fill="#9fcf95" fill-opacity="0.75"/>
<rect x="29" y="106.4" width="2" height="1.2" fill="#9fcf95" fill-opacity="0.75"/>
<rect x="31" y="106.4" width="3" height="1.2" fill="#9fcf95" fill-opacity="0.5"/>
<rect x="34" y="106.4" width="3" height="1.2" fill="#9fcf95" fill-opacity="0.35"/>
<rect x="37" y="106.4" width="3" height="1.2" fill="#9fcf95" fill-opacity="0.35"/>
<rect x="40" y="106.4" width="3" height="1.2" fill="#9fcf95" fill-opacity="0.75"/>
<rect x="43" y="106.4" width="2" height="1.2" fill="#9fcf95" fill-opacity="0.35"/>
<rect x="45" y="106.4" width="3" height="1.2" fill="#9fcf95" fill-opacity="0.35"/>
<rect x="48" y="106.4" width="2" height="1.2" fill="#9fcf95" fill-opacity="0.5"/>
<rect x="50" y="106.4" width="3" height="1.2" fill="#9fcf95" fill-opacity="0.75"/>
<rect x="53" y="106.4" width="2" height="1.2" fill="#9fcf95" fill-opacity="0.6"/>
<rect x="55" y="106.4" width="1" height="1.2" fill="#9fcf95" fill-opacity="0.75"/>
<rect x="56" y="106.4" width="3" height="1.2" fill="#9fcf95" fill-opacity="0.75"/>
<rect x="59" y="106.4" width="1" height="1.2" fill="#9fcf95" fill-opacity="0.5"/>
<rect x="61" y="106.4" width="1" height="1.2" fill="#9fcf95" fill-opacity="0.5"/>
<rect x="62" y="106.4" width="1" height="1.2" fill="#9fcf95" fill-opacity="0.5"/>
<rect x="63" y="106.4" width="1" height="1.2" fill="#9fcf95" fill-opacity="0.35"/>
<rect x="64" y="106.4" width="3" height="1.2" fill="#9fcf95" fill-opacity="0.6"/>
<rect x="67" y="106.4" width="2" height="1.2" fill="#9fcf95" fill-opacity="0.35"/>
<rect x="69" y="106.4" width="1" height="1.2" fill="#9fcf95" fill-opacity="0.35"/>
<rect x="71" y="106.4" width="2" height="1.2" fill="#9fcf95" fill-opacity="0.6"/>
<rect x="73" y="106.4" width="2" height="1.2" fill="#9fcf95" fill-opacity="0.5"/>
<rect x="12" y="108.9" width="1" height="1.2" fill="#9a9aa8" fill-opacity="0.75"/>
<rect x="13" y="108.9" width="2" height="1.2" fill="#9a9aa8" fill-opacity="0.5"/>
<rect x="15" y="108.9" width="1" height="1.2" fill="#9a9aa8" fill-opacity="0.35"/>
<rect x="16" y="108.9" width="3" height="1.2" fill="#9a9aa8" fill-opacity="0.75"/>
<rect x="19" y="108.9" width="2" height="1.2" fill="#9a9aa8" fill-opacity="0.5"/>
<rect x="21" y="108.9" width="2" height="1.2" fill="#9a9aa8" fill-opacity="0.35"/>
<rect x="23" y="108.9" width="3" height="1.2" fill="#9a9aa8" fill-opacity="0.35"/>
<rect x="25" y="108.9" width="2" height="1.2" fill="#9a9aa8" fill-opacity="0.5"/>
<rect x="27" y="108.9" width="1" height="1.2" fill="#9a9aa8" fill-opacity="0.6"/>
<rect x="28" y="108.9" width="1" height="1.2" fill="#9a9aa8" fill-opacity="0.6"/>
<rect x="30" y="108.9" width="2" height="1.2" fill="#9a9aa8" fill-opacity="0.35"/>
<rect x="32" y="108.9" width="2" height="1.2" fill="#9a9aa8" fill-opacity="0.5"/>
<rect x="34" y="108.9" width="3" height="1.2" fill="#9a9aa8" fill-opacity="0.75"/>
<rect x="36" y="108.9" width="3" height="1.2" fill="#9a9aa8" fill-opacity="0.75"/>
<rect x="39" y="108.9" width="1" height="1.2" fill="#9a9aa8" fill-opacity="0.35"/>
<rect x="40" y="108.9" width="3" height="1.2" fill="#9a9aa8" fill-opacity="0.5"/>
<rect x="43" y="108.9" width="3" height="1.2" fill="#9a9aa8" fill-opacity="0.6"/>
<rect x="46" y="108.9" width="3" height="1.2" fill="#9a9aa8" fill-opacity="0.5"/>
<rect x="49" y="108.9" width="3" height="1.2" fill="#9a9aa8" fill-opacity="0.75"/>
<rect x="52" y="108.9" width="2" height="1.2" fill="#9a9aa8" fill-opacity="0.35"/>
<rect x="54" y="108.9" width="2" height="1.2" fill="#9a9aa8" fill-opacity="0.6"/>
<rect x="56" y="108.9" width="3" height="1.2" fill="#9a9aa8" fill-opacity="0.6"/>
<rect x="60" y="108.9" width="3" height="1.2" fill="#9a9aa8" fill-opacity="0.5"/>
<rect x="63" y="108.9" width="3" height="1.2" fill="#9a9aa8" fill-opacity="0.5"/>
<rect x="66" y="108.9" width="1" height="1.2" fill="#9a9aa8" fill-opacity="0.5"/>
<rect x="67" y="108.9" width="1" height="1.2" fill="#9a9aa8" fill-opacity="0.75"/>
<rect x="68" y="108.9" width="1" height="1.2" fill="#9a9aa8" fill-opacity="0.5"/>
<rect x="69" y="108.9" width="2" height="1.2" fill="#9a9aa8" fill-opacity="0.35"/>
<rect x="71" y="108.9" width="2" height="1.2" fill="#9a9aa8" fill-opacity="0.6"/>
<rect x="73" y="108.9" width="3" height="1.2" fill="#9a9aa8" fill-opacity="0.6"/>
<rect x="76" y="108.9" width="2" height="1.2" fill="#9a9aa8" fill-opacity="0.5"/>
<rect x="78" y="108.9" width="1" height="1.2" fill="#9a9aa8" fill-opacity="0.35"/>
<rect x="12" y="111.5" width="2" height="1.2" fill="#9fcf95" fill-opacity="0.5"/>
<rect x="14" y="111.5" width="1" height="1.2" fill="#9fcf95" fill-opacity="0.35"/>
<rect x="15" y="111.5" width="3" height="1.2" fill="#9fcf95" fill-opacity="0.6"/>
<rect x="19" y="111.5" width="2" height="1.2" fill="#9fcf95" fill-opacity="0.75"/>
<rect x="21" y="111.5" width="2" height="1.2" fill="#9fcf95" fill-opacity="0.75"/>
<rect x="23" y="111.5" width="1" height="1.2" fill="#9fcf95" fill-opacity="0.35"/>
<rect x="24" y="111.5" width="1" height="1.2" fill="#9fcf95" fill-opacity="0.6"/>
<rect x="25" y="111.5" width="3" height="1.2" fill="#9fcf95" fill-opacity="0.75"/>
<rect x="28" y="111.5" width="2" height="1.2" fill="#9fcf95" fill-opacity="0.35"/>
<rect x="30" y="111.5" width="2" height="1.2" fill="#9fcf95" fill-opacity="0.35"/>
<rect x="32" y="111.5" width="2" height="1.2" fill="#9fcf95" fill-opacity="0.35"/>
<rect x="34" y="111.5" width="3" height="1.2" fill="#9fcf95" fill-opacity="0.75"/>
<rect x="37" y="111.5" width="1" height="1.2" fill="#9fcf95" fill-opacity="0.75"/>
<rect x="38" y="111.5" width="2" height="1.2" fill="#9fcf95" fill-opacity="0.5"/>
<rect x="40" y="111.5" width="3" height="1.2" fill="#9fcf95" fill-opacity="0.75"/>
<rect x="43" y="111.5" width="3" height="1.2" fill="#9fcf95" fill-opacity="0.5"/>
<rect x="47" y="111.5" width="3" height="1.2" fill="#9fcf95" fill-opacity="0.35"/>
<rect x="50" y="111.5" width="2" height="1.2" fill="#9fcf95" fill-opacity="0.75"/>
<rect x="52" y="111.5" width="2" height="1.2" fill="#9fcf95" fill-opacity="0.6"/>
<rect x="54" y="111.5" width="3" height="1.2" fill="#9fcf95" fill-opacity="0.75"/>
<rect x="4" y="116.6" width="3" height="1.2" fill="#9a9aa8" fill-opacity="0.35"/>
<rect x="7" y="116.6" width="3" height="1.2" fill="#9a9aa8" fill-opacity="0.5"/>
<rect x="11" y="116.6" width="2" height="1.2" fill="#9a9aa8" fill-opacity="0.6"/>
<rect x="14" y="116.6" width="3" height="1.2" fill="#9a9aa8" fill-opacity="0.6"/>
<rect x="17" y="116.6" width="2" height="1.2" fill="#9a9aa8" fill-opacity="0.75"/>
<rect x="19" y="116.6" width="2" height="1.2" fill="#9a9aa8" fill-opacity="0.35"/>
<rect x="21" y="116.6" width="3" height="1.2" fill="#9a9aa8" fill-opacity="0.35"/>
<rect x="24" y="116.6" width="3" height="1.2" fill="#9a9aa8" fill-opacity="0.35"/>
<rect x="26" y="116.6" width="1" height="1.2" fill="#9a9aa8" fill-opacity="0.35"/>
<rect x="27" y="116.6" width="2" height="1.2" fill="#9a9aa8" fill-opacity="0.35"/>
<rect x="29" y="116.6" width="2" height="1.2" fill="#9a9aa8" fill-opacity="0.35"/>
<rect x="31" y="116.6" width="3" height="1.2" fill="#9a9aa8" fill-opacity="0.6"/>
<rect x="34" y="116.6" width="1" height="1.2" fill="#9a9aa8" fill-opacity="0.5"/>
<rect x="36" y="116.6" width="1" height="1.2" fill="#9a9aa8" fill-opacity="0.6"/>
<rect x="37" y="116.6" width="1" height="1.2" fill="#9a9aa8" fill-opacity="0.75"/>
<rect x="38" y="116.6" width="3" height="1.2" fill="#9a9aa8" fill-opacity="0.6"/>
<rect x="41" y="116.6" width="2" height="1.2" fill="#9a9aa8" fill-opacity="0.35"/>
<rect x="43" y="116.6" width="1" height="1.2" fill="#9a9aa8" fill-opacity="0.35"/>
<rect x="44" y="116.6" width="2" height="1.2" fill="#9a9aa8" fill-opacity="0.75"/>
<rect x="46" y="116.6" width="3" height="1.2" fill="#9a9aa8" fill-opacity="0.35"/>
<rect x="49" y="116.6" width="1" height="1.2" fill="#9a9aa8" fill-opacity="0.35"/>
<rect x="50" y="116.6" width="2" height="1.2" fill="#9a9aa8" fill-opacity="0.75"/>
<rect x="52" y="116.6" width="1" height="1.2" fill="#9a9aa8" fill-opacity="0.5"/>
<rect x="53" y="116.6" width="2" height="1.2" fill="#9a9aa8" fill-opacity="0.6"/>
<rect x="12" y="119.2" width="3" height="1.2" fill="#9fcf95" fill-opacity="0.35"/>
<rect x="16" y="119.2" width="1" height="1.2" fill="#9fcf95" fill-opacity="0.6"/>
<rect x="17" y="119.2" width="3" height="1.2" fill="#9fcf95" fill-opacity="0.75"/>
<rect x="19" y="119.2" width="2" height="1.2" fill="#9fcf95" fill-opacity="0.75"/>
<rect x="21" y="119.2" width="1" height="1.2" fill="#9fcf95" fill-opacity="0.35"/>
<rect x="23" y="119.2" width="2" height="1.2" fill="#9fcf95" fill-opacity="0.35"/>
<rect x="25" y="119.2" width="1" height="1.2" fill="#9fcf95" fill-opacity="0.6"/>
<rect x="26" y="119.2" width="2" height="1.2" fill="#9fcf95" fill-opacity="0.35"/>
<rect x="28" y="119.2" width="1" height="1.2" fill="#9fcf95" fill-opacity="0.6"/>
<rect x="29" y="119.2" width="3" height="1.2" fill="#9fcf95" fill-opacity="0.35"/>
<rect x="31" y="119.2" width="3" height="1.2" fill="#9fcf95" fill-opacity="0.5"/>
<rect x="35" y="119.2" width="3" height="1.2" fill="#9fcf95" fill-opacity="0.35"/>
<rect x="38" y="119.2" width="3" height="1.2" fill="#9fcf95" fill-opacity="0.6"/>
<rect x="40" y="119.2" width="2" height="1.2" fill="#9fcf95" fill-opacity="0.5"/>
<rect x="42" y="119.2" width="1" height="1.2" fill="#9fcf95" fill-opacity="0.75"/>
<rect x="43" y="119.2" width="2" height="1.2" fill="#9fcf95" fill-opacity="0.35"/>
<rect x="45" y="119.2" width="1" height="1.2" fill="#9fcf95" fill-opacity="0.75"/>
<rect x="47" y="119.2" width="3" height="1.2" fill="#9fcf95" fill-opacity="0.35"/>
<rect x="50" y="119.2" width="2" height="1.2" fill="#9fcf95" fill-opacity="0.5"/>
<rect x="52" y="119.2" width="3" height="1.2" fill="#9fcf95" fill-opacity="0.5"/>
<rect x="56" y="119.2" width="3" height="1.2" fill="#9fcf95" fill-opacity="0.5"/>
<rect x="59" y="119.2" width="2" height="1.2" fill="#9fcf95" fill-opacity="0.35"/>
<rect x="61" y="119.2" width="1" height="1.2" fill="#9fcf95" fill-opacity="0.5"/>
<rect x="62" y="119.2" width="1" height="1.2" fill="#9fcf95" fill-opacity="0.35"/>
<rect x="63" y="119.2" width="3" height="1.2" fill="#9fcf95" fill-opacity="0.75"/>
<rect x="66" y="119.2" width="1" height="1.2" fill="#9fcf95" fill-opacity="0.6"/>
<rect x="67" y="119.2" width="3" height="1.2" fill="#9fcf95" fill-opacity="0.35"/>
<rect x="12" y="121.8" width="2" height="1.2" fill="#9a9aa8" fill-opacity="0.35"/>
<rect x="14" y="121.8" width="2" height="1.2" fill="#9a9aa8" fill-opacity="0.75"/>
<rect x="16" y="121.8" width="2" height="1.2" fill="#9a9aa8" fill-opacity="0.35"/>
<rect x="18" y="121.8" width="1" height="1.2" fill="#9a9aa8" fill-opacity="0.6"/>
<rect x="19" y="121.8" width="3" height="1.2" fill="#9a9aa8" fill-opacity="0.35"/>
<rect x="22" y="121.8" width="2" height="1.2" fill="#9a9aa8" fill-opacity="0.6"/>
<rect x="24" y="121.8" width="2" height="1.2" fill="#9a9aa8" fill-opacity="0.5"/>
<rect x="26" y="121.8" width="3" height="1.2" fill="#9a9aa8" fill-opacity="0.5"/>
<rect x="29" y="121.8" width="3" height="1.2" fill="#9a9aa8" fill-opacity="0.35"/>
<rect x="32" y="121.8" width="2" height="1.2" fill="#9a9aa8" fill-opacity="0.6"/>
<rect x="35" y="121.8" width="3" height="1.2" fill="#9a9aa8" fill-opacity="0.6"/>
<rect x="38" y="121.8" width="1" height="1.2" fill="#9a9aa8" fill-opacity="0.6"/>
<rect x="39" y="121.8" width="1" height="1.2" fill="#9a9aa8" fill-opacity="0.75"/>
<rect x="40" y="121.8" width="2" height="1.2" fill="#9a9aa8" fill-opacity="0.75"/>
<rect x="42" y="121.8" width="3" height="1.2" fill="#9a9aa8" fill-opacity="0.75"/>
<rect x="45" y="121.8" width="2" height="1.2" fill="#9a9aa8" fill-opacity="0.75"/>
<rect x="47" y="121.8" width="1" height="1.2" fill="#9a9aa8" fill-opacity="0.35"/>
<rect x="48" y="121.8" width="2" height="1.2" fill="#9a9aa8" fill-opacity="0.35"/>
<rect x="50" y="121.8" width="3" height="1.2" fill="#9a9aa8" fill-opacity="0.75"/>
<rect x="53" y="121.8" width="3" height="1.2" fill="#9a9aa8" fill-opacity="0.6"/>
<rect x="55" y="121.8" width="1" height="1.2" fill="#9a9aa8" fill-opacity="0.35"/>
<rect x="56" y="121.8" width="3" height="1.2" fill="#9a9aa8" fill-opacity="0.6"/>
<rect x="59" y="121.8" width="1" height="1.2" fill="#9a9aa8" fill-opacity="0.6"/>
<rect x="60" y="121.8" width="2" height="1.2" fill="#9a9aa8" fill-opacity="0.75"/>
<rect x="62" y="121.8" width="1" height="1.2" fill="#9a9aa8" fill-opacity="0.75"/>
<rect x="64" y="121.8" width="2" height="1.2" fill="#9a9aa8" fill-opacity="0.75"/>
<rect x="67" y="121.8" width="1" height="1.2" fill="#9a9aa8" fill-opacity="0.35"/>
<rect x="68" y="121.8" width="3" height="1.2" fill="#9a9aa8" fill-opacity="0.6"/>
<rect x="71" y="121.8" width="1" height="1.2" fill="#9a9aa8" fill-opacity="0.6"/>
<rect x="72" y="121.8" width="3" height="1.2" fill="#9a9aa8" fill-opacity="0.6"/>
<rect x="12" y="124.4" width="3" height="1.2" fill="#9a9aa8" fill-opacity="0.35"/>
<rect x="15" y="124.4" width="2" height="1.2" fill="#9a9aa8" fill-opacity="0.5"/>
<rect x="17" y="124.4" width="2" height="1.2" fill="#9a9aa8" fill-opacity="0.35"/>
<rect x="19" y="124.4" width="3" height="1.2" fill="#9a9aa8" fill-opacity="0.6"/>
<rect x="22" y="124.4" width="1" height="1.2" fill="#9a9aa8" fill-opacity="0.35"/>
<rect x="24" y="124.4" width="2" height="1.2" fill="#9a9aa8" fill-opacity="0.6"/>
<rect x="26" y="124.4" width="2" height="1.2" fill="#9a9aa8" fill-opacity="0.6"/>
<rect x="28" y="124.4" width="2" height="1.2" fill="#9a9aa8" fill-opacity="0.35"/>
<rect x="30" y="124.4" width="3" height="1.2" fill="#9a9aa8" fill-opacity="0.35"/>
<rect x="33" y="124.4" width="1" height="1.2" fill="#9a9aa8" fill-opacity="0.75"/>
<rect x="34" y="124.4" width="1" height="1.2" fill="#9a9aa8" fill-opacity="0.6"/>
<rect x="35" y="124.4" width="2" height="1.2" fill="#9a9aa8" fill-opacity="0.35"/>
<rect x="37" y="124.4" width="1" height="1.2" fill="#9a9aa8" fill-opacity="0.5"/>
<rect x="38" y="124.4" width="2" height="1.2" fill="#9a9aa8" fill-opacity="0.6"/>
<rect x="40" y="124.4" width="1" height="1.2" fill="#9a9aa8" fill-opacity="0.75"/>
<rect x="41" y="124.4" width="1" height="1.2" fill="#9a9aa8" fill-opacity="0.75"/>
<rect x="42" y="124.4" width="3" height="1.2" fill="#9a9aa8" fill-opacity="0.35"/>
<rect x="45" y="124.4" width="1" height="1.2" fill="#9a9aa8" fill-opacity="0.6"/>
<rect x="46" y="124.4" width="3" height="1.2" fill="#9a9aa8" fill-opacity="0.35"/>
<rect x="49" y="124.4" width="3" height="1.2" fill="#9a9aa8" fill-opacity="0.5"/>
<rect x="52" y="124.4" width="3" height="1.2" fill="#9a9aa8" fill-opacity="0.35"/>
<rect x="56" y="124.4" width="2" height="1.2" fill="#9a9aa8" fill-opacity="0.6"/>
<rect x="58" y="124.4" width="3" height="1.2" fill="#9a9aa8" fill-opacity="0.35"/>
<rect x="61" y="124.4" width="1" height="1.2" fill="#9a9aa8" fill-opacity="0.35"/>
<rect x="62" y="124.4" width="2" height="1.2" fill="#9a9aa8" fill-opacity="0.5"/>
<rect x="64" y="124.4" width="2" height="1.2" fill="#9a9aa8" fill-opacity="0.75"/>
<rect x="66" y="124.4" width="2" height="1.2" fill="#9a9aa8" fill-opacity="0.35"/>
<rect x="68" y="124.4" width="2" height="1.2" fill="#9a9aa8" fill-opacity="0.6"/>
<rect x="70" y="124.4" width="3" height="1.2" fill="#9a9aa8" fill-opacity="0.35"/>
<rect x="4" y="126.9" width="3" height="1.2" fill="#9a9aa8" fill-opacity="0.35"/>
<rect x="4" y="129.5" width="3" height="1.2" fill="#9a9aa8" fill-opacity="0.35"/>
<rect x="4" y="134.6" width="2" height="1.2" fill="#9a9aa8" fill-opacity="0.5"/>
<rect x="6" y="134.6" width="1" height="1.2" fill="#9a9aa8" fill-opacity="0.5"/>
<rect x="7" y="134.6" width="2" height="1.2" fill="#9a9aa8" fill-opacity="0.75"/>
<rect x="9" y="134.6" width="2" height="1.2" fill="#9a9aa8" fill-opacity="0.35"/>
<rect x="11" y="134.6" width="2" height="1.2" fill="#9a9aa8" fill-opacity="0.75"/>
<rect x="13" y="134.6" width="3" height="1.2" fill="#9a9aa8" fill-opacity="0.75"/>
<rect x="16" y="134.6" width="2" height="1.2" fill="#9a9aa8" fill-opacity="0.75"/>
<rect x="19" y="134.6" width="3" height="1.2" fill="#9a9aa8" fill-opacity="0.75"/>
<rect x="22" y="134.6" width="1" height="1.2" fill="#9a9aa8" fill-opacity="0.5"/>
<rect x="23" y="134.6" width="3" height="1.2" fill="#9a9aa8" fill-opacity="0.6"/>
<rect x="26" y="134.6" width="1" height="1.2" fill="#9a9aa8" fill-opacity="0.35"/>
<rect x="28" y="134.6" width="1" height="1.2" fill="#9a9aa8" fill-opacity="0.6"/>
<rect x="29" y="134.6" width="2" height="1.2" fill="#9a9aa8" fill-opacity="0.75"/>
<rect x="31" y="134.6" width="2" height="1.2" fill="#9a9aa8" fill-opacity="0.75"/>
<rect x="33" y="134.6" width="2" height="1.2" fill="#9a9aa8" fill-opacity="0.5"/>
<rect x="36" y="134.6" width="3" height="1.2" fill="#9a9aa8" fill-opacity="0.75"/>
<rect x="39" y="134.6" width="2" height="1.2" fill="#9a9aa8" fill-opacity="0.35"/>
<rect x="41" y="134.6" width="3" height="1.2" fill="#9a9aa8" fill-opacity="0.75"/>
<rect x="44" y="134.6" width="1" height="1.2" fill="#9a9aa8" fill-opacity="0.6"/>
<rect x="46" y="134.6" width="3" height="1.2" fill="#9a9aa8" fill-opacity="0.75"/>
<rect x="49" y="134.6" width="3" height="1.2" fill="#9a9aa8" fill-opacity="0.35"/>
<rect x="10" y="137.2" width="2" height="1.2" fill="#9a9aa8" fill-opacity="0.5"/>
<rect x="12" y="137.2" width="3" height="1.2" fill="#9a9aa8" fill-opacity="0.5"/>
<rect x="15" y="137.2" width="2" height="1.2" fill="#9a9aa8" fill-opacity="0.35"/>
<rect x="17" y="137.2" width="1" height="1.2" fill="#9a9aa8" fill-opacity="0.75"/>
<rect x="18" y="137.2" width="3" height="1.2" fill="#9a9aa8" fill-opacity="0.75"/>
<rect x="21" y="137.2" width="2" height="1.2" fill="#9a9aa8" fill-opacity="0.75"/>
<rect x="23" y="137.2" width="1" height="1.2" fill="#9a9aa8" fill-opacity="0.5"/>
<rect x="24" y="137.2" width="1" height="1.2" fill="#9a9aa8" fill-opacity="0.35"/>
<rect x="25" y="137.2" width="3" height="1.2" fill="#9a9aa8" fill-opacity="0.6"/>
<rect x="28" y="137.2" width="1" height="1.2" fill="#9a9aa8" fill-opacity="0.35"/>
<rect x="29" y="137.2" width="3" height="1.2" fill="#9a9aa8" fill-opacity="0.6"/>
<rect x="32" y="137.2" width="3" height="1.2" fill="#9a9aa8" fill-opacity="0.5"/>
<rect x="35" y="137.2" width="3" height="1.2" fill="#9a9aa8" fill-opacity="0.75"/>
<rect x="39" y="137.2" width="2" height="1.2" fill="#9a9aa8" fill-opacity="0.5"/>
<rect x="41" y="137.2" width="2" height="1.2" fill="#9a9aa8" fill-opacity="0.6"/>
<rect x="43" y="137.2" width="2" height="1.2" fill="#9a9aa8" fill-opacity="0.35"/>
<rect x="45" y="137.2" width="1" height="1.2" fill="#9a9aa8" fill-opacity="0.5"/>
<rect x="47" y="137.2" width="1" height="1.2" fill="#9a9aa8" fill-opacity="0.6"/>
<rect x="48" y="137.2" width="1" height="1.2" fill="#9a9aa8" fill-opacity="0.5"/>
<rect x="49" y="137.2" width="1" height="1.2" fill="#9a9aa8" fill-opacity="0.5"/>
<rect x="50" y="137.2" width="2" height="1.2" fill="#9a9aa8" fill-opacity="0.6"/>
<rect x="53" y="137.2" width="1" height="1.2" fill="#9a9aa8" fill-opacity="0.6"/>
<rect x="54" y="137.2" width="3" height="1.2" fill="#9a9aa8" fill-opacity="0.6"/>
<rect x="57" y="137.2" width="1" height="1.2" fill="#9a9aa8" fill-opacity="0.5"/>
<rect x="58" y="137.2" width="2" height="1.2" fill="#9a9aa8" fill-opacity="0.35"/>
<rect x="61" y="137.2" width="3" height="1.2" fill="#9a9aa8" fill-opacity="0.6"/>
<rect x="64" y="137.2" width="3" height="1.2" fill="#9a9aa8" fill-opacity="0.6"/>
<rect x="66" y="137.2" width="2" height="1.2" fill="#9a9aa8" fill-opacity="0.5"/>
<rect x="10" y="139.8" width="2" height="1.2" fill="#9fcf95" fill-opacity="0.35"/>
<rect x="12" y="139.8" width="2" height="1.2" fill="#9fcf95" fill-opacity="0.6"/>
<rect x="14" y="139.8" width="1" height="1.2" fill="#9fcf95" fill-opacity="0.75"/>
<rect x="15" y="139.8" width="1" height="1.2" fill="#9fcf95" fill-opacity="0.5"/>
<rect x="16" y="139.8" width="3" height="1.2" fill="#9fcf95" fill-opacity="0.35"/>
<rect x="19" y="139.8" width="3" height="1.2" fill="#9fcf95" fill-opacity="0.5"/>
<rect x="22" y="139.8" width="3" height="1.2" fill="#9fcf95" fill-opacity="0.6"/>
<rect x="25" y="139.8" width="1" height="1.2" fill="#9fcf95" fill-opacity="0.75"/>
<rect x="26" y="139.8" width="2" height="1.2" fill="#9fcf95" fill-opacity="0.5"/>
<rect x="28" y="139.8" width="2" height="1.2" fill="#9fcf95" fill-opacity="0.75"/>
<rect x="30" y="139.8" width="3" height="1.2" fill="#9fcf95" fill-opacity="0.6"/>
<rect x="32" y="139.8" width="3" height="1.2" fill="#9fcf95" fill-opacity="0.5"/>
<rect x="35" y="139.8" width="3" height="1.2" fill="#9fcf95" fill-opacity="0.6"/>
<rect x="38" y="139.8" width="3" height="1.2" fill="#9fcf95" fill-opacity="0.6"/>
<rect x="40" y="139.8" width="1" height="1.2" fill="#9fcf95" fill-opacity="0.35"/>
<rect x="41" y="139.8" width="3" height="1.2" fill="#9fcf95" fill-opacity="0.35"/>
<rect x="44" y="139.8" width="2" height="1.2" fill="#9fcf95" fill-opacity="0.35"/>
<rect x="46" y="139.8" width="3" height="1.2" fill="#9fcf95" fill-opacity="0.35"/>
<rect x="50" y="139.8" width="2" height="1.2" fill="#9fcf95" fill-opacity="0.6"/>
<rect x="52" y="139.8" width="2" height="1.2" fill="#9fcf95" fill-opacity="0.5"/>
<rect x="54" y="139.8" width="1" height="1.2" fill="#9fcf95" fill-opacity="0.35"/>
<rect x="56" y="139.8" width="1" height="1.2" fill="#9fcf95" fill-opacity="0.75"/>
<rect x="57" y="139.8" width="3" height="1.2" fill="#9fcf95" fill-opacity="0.5"/>
<rect x="61" y="139.8" width="3" height="1.2" fill="#9fcf95" fill-opacity="0.35"/>
<rect x="64" y="139.8" width="2" height="1.2" fill="#9fcf95" fill-opacity="0.5"/>
<rect x="66" y="139.8" width="1" height="1.2" fill="#9fcf95" fill-opacity="0.6"/>
<rect x="67" y="139.8" width="3" height="1.2" fill="#9fcf95" fill-opacity="0.75"/>
<rect x="10" y="142.3" width="2" height="1.2" fill="#9a9aa8" fill-opacity="0.5"/>
<rect x="12" y="142.3" width="2" height="1.2" fill="#9a9aa8" fill-opacity="0.5"/>
<rect x="14" y="142.3" width="3" height="1.2" fill="#9a9aa8" fill-opacity="0.75"/>
<rect x="18" y="142.3" width="3" height="1.2" fill="#9a9aa8" fill-opacity="0.35"/>
<rect x="21" y="142.3" width="2" height="1.2" fill="#9a9aa8" fill-opacity="0.6"/>
<rect x="23" y="142.3" width="2" height="1.2" fill="#9a9aa8" fill-opacity="0.5"/>
<rect x="26" y="142.3" width="1" height="1.2" fill="#9a9aa8" fill-opacity="0.5"/>
<rect x="27" y="142.3" width="2" height="1.2" fill="#9a9aa8" fill-opacity="0.35"/>
<rect x="29" y="142.3" width="3" height="1.2" fill="#9a9aa8" fill-opacity="0.75"/>
<rect x="33" y="142.3" width="3" height="1.2" fill="#9a9aa8" fill-opacity="0.6"/>
<rect x="36" y="142.3" width="1" height="1.2" fill="#9a9aa8" fill-opacity="0.35"/>
<rect x="37" y="142.3" width="3" height="1.2" fill="#9a9aa8" fill-opacity="0.5"/>
<rect x="40" y="142.3" width="1" height="1.2" fill="#9a9aa8" fill-opacity="0.35"/>
<rect x="41" y="142.3" width="1" height="1.2" fill="#9a9aa8" fill-opacity="0.6"/>
<rect x="42" y="142.3" width="2" height="1.2" fill="#9a9aa8" fill-opacity="0.35"/>
<rect x="45" y="142.3" width="1" height="1.2" fill="#9a9aa8" fill-opacity="0.5"/>
<rect x="46" y="142.3" width="1" height="1.2" fill="#9a9aa8" fill-opacity="0.35"/>
<rect x="47" y="142.3" width="1" height="1.2" fill="#9a9aa8" fill-opacity="0.6"/>
<rect x="48" y="142.3" width="1" height="1.2" fill="#9a9aa8" fill-opacity="0.5"/>
<rect x="49" y="142.3" width="2" height="1.2" fill="#9a9aa8" fill-opacity="0.5"/>
<rect x="51" y="142.3" width="2" height="1.2" fill="#9a9aa8" fill-opacity="0.6"/>
<rect x="54" y="142.3" width="1" height="1.2" fill="#9a9aa8" fill-opacity="0.6"/>
<rect x="55" y="142.3" width="2" height="1.2" fill="#9a9aa8" fill-opacity="0.35"/>
<rect x="57" y="142.3" width="1" height="1.2" fill="#9a9aa8" fill-opacity="0.6"/>
<rect x="58" y="142.3" width="1" height="1.2" fill="#9a9aa8" fill-opacity="0.6"/>
<rect x="59" y="142.3" width="3" height="1.2" fill="#9a9aa8" fill-opacity="0.6"/>
<rect x="62" y="142.3" width="3" height="1.2" fill="#9a9aa8" fill-opacity="0.6"/>
<rect x="65" y="142.3" width="2" height="1.2" fill="#9a9aa8" fill-opacity="0.5"/>
<rect x="67" y="142.3" width="2" height="1.2" fill="#9a9aa8" fill-opacity="0.5"/>
<rect x="69" y="142.3" width="1" height="1.2" fill="#9a9aa8" fill-opacity="0.5"/>
<rect x="70" y="142.3" width="1" height="1.2" fill="#9a9aa8" fill-opacity="0.6"/>
<rect x="71" y="142.3" width="2" height="1.2" fill="#9a9aa8" fill-opacity="0.75"/>
<rect x="73" y="142.3" width="2" height="1.2" fill="#9a9aa8" fill-opacity="0.5"/>
<rect x="75" y="142.3" width="1" height="1.2" fill="#9a9aa8" fill-opacity="0.6"/>
<rect x="76" y="142.3" width="3" height="1.2" fill="#9a9aa8" fill-opacity="0.6"/>
<rect x="79" y="142.3" width="1" height="1.2" fill="#9a9aa8" fill-opacity="0.5"/>
<rect x="80" y="142.3" width="2" height="1.2" fill="#9a9aa8" fill-opacity="0.5"/>
<rect x="82" y="142.3" width="1" height="1.2" fill="#9a9aa8" fill-opacity="0.6"/>
<rect x="83" y="142.3" width="3" height="1.2" fill="#9a9aa8" fill-opacity="0.6"/>
<rect x="86" y="142.3" width="3" height="1.2" fill="#9a9aa8" fill-opacity="0.5"/>
<rect x="10" y="144.9" width="3" height="1.2" fill="#9a9aa8" fill-opacity="0.35"/>
<rect x="13" y="144.9" width="1" height="1.2" fill="#9a9aa8" fill-opacity="0.5"/>
<rect x="14" y="144.9" width="2" height="1.2" fill="#9a9aa8" fill-opacity="0.5"/>
<rect x="16" y="144.9" width="2" height="1.2" fill="#9a9aa8" fill-opacity="0.5"/>
<rect x="19" y="144.9" width="3" height="1.2" fill="#9a9aa8" fill-opacity="0.6"/>
<rect x="22" y="144.9" width="1" height="1.2" fill="#9a9aa8" fill-opacity="0.35"/>
<rect x="23" y="144.9" width="2" height="1.2" fill="#9a9aa8" fill-opacity="0.5"/>
<rect x="25" y="144.9" width="2" height="1.2" fill="#9a9aa8" fill-opacity="0.5"/>
<rect x="27" y="144.9" width="1" height="1.2" fill="#9a9aa8" fill-opacity="0.75"/>
<rect x="28" y="144.9" width="2" height="1.2" fill="#9a9aa8" fill-opacity="0.35"/>
<rect x="30" y="144.9" width="2" height="1.2" fill="#9a9aa8" fill-opacity="0.35"/>
<rect x="32" y="144.9" width="1" height="1.2" fill="#9a9aa8" fill-opacity="0.75"/>
<rect x="33" y="144.9" width="1" height="1.2" fill="#9a9aa8" fill-opacity="0.75"/>
<rect x="35" y="144.9" width="2" height="1.2" fill="#9a9aa8" fill-opacity="0.5"/>
<rect x="37" y="144.9" width="1" height="1.2" fill="#9a9aa8" fill-opacity="0.35"/>
<rect x="39" y="144.9" width="1" height="1.2" fill="#9a9aa8" fill-opacity="0.75"/>
<rect x="40" y="144.9" width="1" height="1.2" fill="#9a9aa8" fill-opacity="0.6"/>
<rect x="41" y="144.9" width="2" height="1.2" fill="#9a9aa8" fill-opacity="0.5"/>
<rect x="43" y="144.9" width="1" height="1.2" fill="#9a9aa8" fill-opacity="0.5"/>
<rect x="45" y="144.9" width="1" height="1.2" fill="#9a9aa8" fill-opacity="0.5"/>
<rect x="46" y="144.9" width="1" height="1.2" fill="#9a9aa8" fill-opacity="0.5"/>
<rect x="47" y="144.9" width="3" height="1.2" fill="#9a9aa8" fill-opacity="0.5"/>
<rect x="50" y="144.9" width="3" height="1.2" fill="#9a9aa8" fill-opacity="0.75"/>
<rect x="53" y="144.9" width="2" height="1.2" fill="#9a9aa8" fill-opacity="0.35"/>
<rect x="55" y="144.9" width="2" height="1.2" fill="#9a9aa8" fill-opacity="0.5"/>
<rect x="57" y="144.9" width="1" height="1.2" fill="#9a9aa8" fill-opacity="0.5"/>
<rect x="58" y="144.9" width="3" height="1.2" fill="#9a9aa8" fill-opacity="0.6"/>
<rect x="61" y="144.9" width="1" height="1.2" fill="#9a9aa8" fill-opacity="0.35"/>
<rect x="62" y="144.9" width="2" height="1.2" fill="#9a9aa8" fill-opacity="0.6"/>
<rect x="64" y="144.9" width="1" height="1.2" fill="#9a9aa8" fill-opacity="0.35"/>
<rect x="65" y="144.9" width="2" height="1.2" fill="#9a9aa8" fill-opacity="0.75"/>
<rect x="67" y="144.9" width="3" height="1.2" fill="#9a9aa8" fill-opacity="0.6"/>
<rect x="70" y="144.9" width="1" height="1.2" fill="#9a9aa8" fill-opacity="0.35"/>
<rect x="71" y="144.9" width="3" height="1.2" fill="#9a9aa8" fill-opacity="0.5"/>
<rect x="74" y="144.9" width="1" height="1.2" fill="#9a9aa8" fill-opacity="0.6"/>
<rect x="75" y="144.9" width="3" height="1.2" fill="#9a9aa8" fill-opacity="0.5"/>
<rect x="77" y="144.9" width="2" height="1.2" fill="#9a9aa8" fill-opacity="0.35"/>
<rect x="79" y="144.9" width="2" height="1.2" fill="#9a9aa8" fill-opacity="0.75"/>
<rect x="10" y="147.5" width="3" height="1.2" fill="#9fcf95" fill-opacity="0.75"/>
<rect x="13" y="147.5" width="2" height="1.2" fill="#9fcf95" fill-opacity="0.35"/>
<rect x="15" y="147.5" width="1" height="1.2" fill="#9fcf95" fill-opacity="0.5"/>
<rect x="16" y="147.5" width="2" height="1.2" fill="#9fcf95" fill-opacity="0.35"/>
<rect x="18" y="147.5" width="3" height="1.2" fill="#9fcf95" fill-opacity="0.75"/>
<rect x="21" y="147.5" width="3" height="1.2" fill="#9fcf95" fill-opacity="0.35"/>
<rect x="24" y="147.5" width="2" height="1.2" fill="#9fcf95" fill-opacity="0.5"/>
<rect x="26" y="147.5" width="1" height="1.2" fill="#9fcf95" fill-opacity="0.5"/>
<rect x="28" y="147.5" width="3" height="1.2" fill="#9fcf95" fill-opacity="0.5"/>
<rect x="31" y="147.5" width="1" height="1.2" fill="#9fcf95" fill-opacity="0.35"/>
<rect x="32" y="147.5" width="1" height="1.2" fill="#9fcf95" fill-opacity="0.75"/>
<rect x="33" y="147.5" width="2" height="1.2" fill="#9fcf95" fill-opacity="0.35"/>
<rect x="35" y="147.5" width="2" height="1.2" fill="#9fcf95" fill-opacity="0.35"/>
<rect x="37" y="147.5" width="2" height="1.2" fill="#9fcf95" fill-opacity="0.35"/>
<rect x="39" y="147.5" width="1" height="1.2" fill="#9fcf95" fill-opacity="0.6"/>
<rect x="40" y="147.5" width="1" height="1.2" fill="#9fcf95" fill-opacity="0.6"/>
<rect x="42" y="147.5" width="3" height="1.2" fill="#9fcf95" fill-opacity="0.6"/>
<rect x="45" y="147.5" width="3" height="1.2" fill="#9fcf95" fill-opacity="0.75"/>
<rect x="49" y="147.5" width="3" height="1.2" fill="#9fcf95" fill-opacity="0.6"/>
<rect x="52" y="147.5" width="1" height="1.2" fill="#9fcf95" fill-opacity="0.6"/>
<rect x="53" y="147.5" width="1" height="1.2" fill="#9fcf95" fill-opacity="0.75"/>
<rect x="54" y="147.5" width="2" height="1.2" fill="#9fcf95" fill-opacity="0.75"/>
<rect x="56" y="147.5" width="2" height="1.2" fill="#9fcf95" fill-opacity="0.75"/>
<rect x="58" y="147.5" width="1" height="1.2" fill="#9fcf95" fill-opacity="0.5"/>
<rect x="59" y="147.5" width="2" height="1.2" fill="#9fcf95" fill-opacity="0.6"/>
<rect x="61" y="147.5" width="1" height="1.2" fill="#9fcf95" fill-opacity="0.6"/>
<rect x="63" y="147.5" width="3" height="1.2" fill="#9fcf95" fill-opacity="0.75"/>
<rect x="66" y="147.5" width="1" height="1.2" fill="#9fcf95" fill-opacity="0.6"/>
<rect x="67" y="147.5" width="2" height="1.2" fill="#9fcf95" fill-opacity="0.35"/>
<rect x="69" y="147.5" width="3" height="1.2" fill="#9fcf95" fill-opacity="0.35"/>
<rect x="72" y="147.5" width="2" height="1.2" fill="#9fcf95" fill-opacity="0.75"/>
<rect x="74" y="147.5" width="3" height="1.2" fill="#9fcf95" fill-opacity="0.35"/>
<rect x="77" y="147.5" width="2" height="1.2" fill="#9fcf95" fill-opacity="0.75"/>
<rect x="79" y="147.5" width="3" height="1.2" fill="#9fcf95" fill-opacity="0.35"/>
<rect x="82" y="147.5" width="2" height="1.2" fill="#9fcf95" fill-opacity="0.75"/>
<rect x="84" y="147.5" width="2" height="1.2" fill="#9fcf95" fill-opacity="0.75"/>
<rect x="4" y="150.1" width="2" height="1.2" fill="#9a9aa8" fill-opacity="0.75"/>
<rect x="2" y="155.2" width="3" height="1.2" fill="#9a9aa8" fill-opacity="0.5"/>
<rect x="5" y="155.2" width="2" height="1.2" fill="#9a9aa8" fill-opacity="0.75"/>
<rect x="8" y="155.2" width="1" height="1.2" fill="#9a9aa8" fill-opacity="0.6"/>
<rect x="9" y="155.2" width="1" height="1.2" fill="#9a9aa8" fill-opacity="0.5"/>
<rect x="11" y="155.2" width="2" height="1.2" fill="#9a9aa8" fill-opacity="0.35"/>
<rect x="13" y="155.2" width="2" height="1.2" fill="#9a9aa8" fill-opacity="0.5"/>
<rect x="15" y="155.2" width="3" height="1.2" fill="#9a9aa8" fill-opacity="0.35"/>
<rect x="18" y="155.2" width="2" height="1.2" fill="#9a9aa8" fill-opacity="0.6"/>
<rect x="20" y="155.2" width="3" height="1.2" fill="#9a9aa8" fill-opacity="0.35"/>
<rect x="23" y="155.2" width="2" height="1.2" fill="#9a9aa8" fill-opacity="0.75"/>
<rect x="25" y="155.2" width="1" height="1.2" fill="#9a9aa8" fill-opacity="0.6"/>
<rect x="27" y="155.2" width="3" height="1.2" fill="#9a9aa8" fill-opacity="0.6"/>
<rect x="30" y="155.2" width="1" height="1.2" fill="#9a9aa8" fill-opacity="0.5"/>
<rect x="31" y="155.2" width="3" height="1.2" fill="#9a9aa8" fill-opacity="0.75"/>
<rect x="35" y="155.2" width="3" height="1.2" fill="#9a9aa8" fill-opacity="0.5"/>
<rect x="38" y="155.2" width="3" height="1.2" fill="#9a9aa8" fill-opacity="0.5"/>
<rect x="2" y="157.8" width="1" height="1.2" fill="#9a9aa8" fill-opacity="0.75"/>
<rect x="3" y="157.8" width="2" height="1.2" fill="#9a9aa8" fill-opacity="0.5"/>
<rect x="6" y="160.3" width="3" height="1.2" fill="#9a9aa8" fill-opacity="0.6"/>
<rect x="9" y="160.3" width="2" height="1.2" fill="#9a9aa8" fill-opacity="0.75"/>
<rect x="11" y="160.3" width="3" height="1.2" fill="#9a9aa8" fill-opacity="0.35"/>
<rect x="14" y="160.3" width="3" height="1.2" fill="#9a9aa8" fill-opacity="0.5"/>
<rect x="17" y="160.3" width="2" height="1.2" fill="#9a9aa8" fill-opacity="0.6"/>
<rect x="19" y="160.3" width="2" height="1.2" fill="#9a9aa8" fill-opacity="0.6"/>
<rect x="21" y="160.3" width="1" height="1.2" fill="#9a9aa8" fill-opacity="0.6"/>
<rect x="22" y="160.3" width="3" height="1.2" fill="#9a9aa8" fill-opacity="0.5"/>
<rect x="25" y="160.3" width="3" height="1.2" fill="#9a9aa8" fill-opacity="0.35"/>
<rect x="28" y="160.3" width="2" height="1.2" fill="#9a9aa8" fill-opacity="0.75"/>
<rect x="30" y="160.3" width="1" height="1.2" fill="#9a9aa8" fill-opacity="0.6"/>
<rect x="31" y="160.3" width="2" height="1.2" fill="#9a9aa8" fill-opacity="0.75"/>
<rect x="33" y="160.3" width="1" height="1.2" fill="#9a9aa8" fill-opacity="0.75"/>
<rect x="34" y="160.3" width="3" height="1.2" fill="#9a9aa8" fill-opacity="0.6"/>
<rect x="37" y="160.3" width="1" height="1.2" fill="#9a9aa8" fill-opacity="0.5"/>
<rect x="38" y="160.3" width="2" height="1.2" fill="#9a9aa8" fill-opacity="0.5"/>
<rect x="40" y="160.3" width="3" height="1.2" fill="#9a9aa8" fill-opacity="0.35"/>
<rect x="43" y="160.3" width="3" height="1.2" fill="#9a9aa8" fill-opacity="0.5"/>
<rect x="46" y="160.3" width="2" height="1.2" fill="#9a9aa8" fill-opacity="0.6"/>
<rect x="48" y="160.3" width="2" height="1.2" fill="#9a9aa8" fill-opacity="0.6"/>
<rect x="50" y="160.3" width="3" height="1.2" fill="#9a9aa8" fill-opacity="0.5"/>
<rect x="53" y="160.3" width="1" height="1.2" fill="#9a9aa8" fill-opacity="0.6"/>
<rect x="54" y="160.3" width="3" height="1.2" fill="#9a9aa8" fill-opacity="0.35"/>
<rect x="57" y="160.3" width="2" height="1.2" fill="#9a9aa8" fill-opacity="0.35"/>
<rect x="59" y="160.3" width="1" height="1.2" fill="#9a9aa8" fill-opacity="0.6"/>
<rect x="60" y="160.3" width="3" height="1.2" fill="#9a9aa8" fill-opacity="0.6"/>
<rect x="6" y="162.9" width="1" height="1.2" fill="#9a9aa8" fill-opacity="0.6"/>
<rect x="7" y="162.9" width="1" height="1.2" fill="#9a9aa8" fill-opacity="0.75"/>
<rect x="8" y="162.9" width="1" height="1.2" fill="#9a9aa8" fill-opacity="0.35"/>
<rect x="9" y="162.9" width="1" height="1.2" fill="#9a9aa8" fill-opacity="0.35"/>
<rect x="10" y="162.9" width="2" height="1.2" fill="#9a9aa8" fill-opacity="0.5"/>
<rect x="12" y="162.9" width="2" height="1.2" fill="#9a9aa8" fill-opacity="0.5"/>
<rect x="14" y="162.9" width="2" height="1.2" fill="#9a9aa8" fill-opacity="0.5"/>
<rect x="16" y="162.9" width="2" height="1.2" fill="#9a9aa8" fill-opacity="0.6"/>
<rect x="18" y="162.9" width="2" height="1.2" fill="#9a9aa8" fill-opacity="0.35"/>
<rect x="20" y="162.9" width="2" height="1.2" fill="#9a9aa8" fill-opacity="0.35"/>
<rect x="22" y="162.9" width="2" height="1.2" fill="#9a9aa8" fill-opacity="0.6"/>
<rect x="24" y="162.9" width="3" height="1.2" fill="#9a9aa8" fill-opacity="0.75"/>
<rect x="26" y="162.9" width="2" height="1.2" fill="#9a9aa8" fill-opacity="0.5"/>
<rect x="28" y="162.9" width="2" height="1.2" fill="#9a9aa8" fill-opacity="0.35"/>
<rect x="30" y="162.9" width="1" height="1.2" fill="#9a9aa8" fill-opacity="0.75"/>
<rect x="32" y="162.9" width="2" height="1.2" fill="#9a9aa8" fill-opacity="0.75"/>
<rect x="34" y="162.9" width="3" height="1.2" fill="#9a9aa8" fill-opacity="0.6"/>
<rect x="37" y="162.9" width="3" height="1.2" fill="#9a9aa8" fill-opacity="0.75"/>
<rect x="41" y="162.9" width="3" height="1.2" fill="#9a9aa8" fill-opacity="0.35"/>
<rect x="44" y="162.9" width="1" height="1.2" fill="#9a9aa8" fill-opacity="0.35"/>
<rect x="45" y="162.9" width="3" height="1.2" fill="#9a9aa8" fill-opacity="0.5"/>
<rect x="48" y="162.9" width="1" height="1.2" fill="#9a9aa8" fill-opacity="0.6"/>
<rect x="50" y="162.9" width="3" height="1.2" fill="#9a9aa8" fill-opacity="0.6"/>
<rect x="53" y="162.9" width="2" height="1.2" fill="#9a9aa8" fill-opacity="0.35"/>
<rect x="55" y="162.9" width="3" height="1.2" fill="#9a9aa8" fill-opacity="0.35"/>
<rect x="58" y="162.9" width="2" height="1.2" fill="#9a9aa8" fill-opacity="0.35"/>
<rect x="60" y="162.9" width="2" height="1.2" fill="#9a9aa8" fill-opacity="0.35"/>
<rect x="62" y="162.9" width="1" height="1.2" fill="#9a9aa8" fill-opacity="0.6"/>
<rect x="63" y="162.9" width="1" height="1.2" fill="#9a9aa8" fill-opacity="0.35"/>
<rect x="64" y="162.9" width="1" height="1.2" fill="#9a9aa8" fill-opacity="0.6"/>
<rect x="65" y="162.9" width="2" height="1.2" fill="#9a9aa8" fill-opacity="0.75"/>
<rect x="67" y="162.9" width="1" height="1.2" fill="#9a9aa8" fill-opacity="0.75"/>
<rect x="68" y="162.9" width="2" height="1.2" fill="#9a9aa8" fill-opacity="0.5"/>
<rect x="70" y="162.9" width="2" height="1.2" fill="#9a9aa8" fill-opacity="0.5"/>
<rect x="72" y="162.9" width="3" height="1.2" fill="#9a9aa8" fill-opacity="0.75"/>
<rect x="6" y="165.5" width="1" height="1.2" fill="#9a9aa8" fill-opacity="0.5"/>
<rect x="7" y="165.5" width="1" height="1.2" fill="#9a9aa8" fill-opacity="0.75"/>
<rect x="8" y="165.5" width="2" height="1.2" fill="#9a9aa8" fill-opacity="0.35"/>
<rect x="10" y="165.5" width="2" height="1.2" fill="#9a9aa8" fill-opacity="0.35"/>
<rect x="12" y="165.5" width="3" height="1.2" fill="#9a9aa8" fill-opacity="0.75"/>
<rect x="15" y="165.5" width="3" height="1.2" fill="#9a9aa8" fill-opacity="0.75"/>
<rect x="18" y="165.5" width="1" height="1.2" fill="#9a9aa8" fill-opacity="0.5"/>
<rect x="19" y="165.5" width="1" height="1.2" fill="#9a9aa8" fill-opacity="0.75"/>
<rect x="20" y="165.5" width="3" height="1.2" fill="#9a9aa8" fill-opacity="0.6"/>
<rect x="23" y="165.5" width="3" height="1.2" fill="#9a9aa8" fill-opacity="0.35"/>
<rect x="26" y="165.5" width="2" height="1.2" fill="#9a9aa8" fill-opacity="0.6"/>
<rect x="28" y="165.5" width="1" height="1.2" fill="#9a9aa8" fill-opacity="0.5"/>
<rect x="30" y="165.5" width="3" height="1.2" fill="#9a9aa8" fill-opacity="0.75"/>
<rect x="33" y="165.5" width="3" height="1.2" fill="#9a9aa8" fill-opacity="0.75"/>
<rect x="36" y="165.5" width="1" height="1.2" fill="#9a9aa8" fill-opacity="0.6"/>
<rect x="37" y="165.5" width="1" height="1.2" fill="#9a9aa8" fill-opacity="0.35"/>
<rect x="38" y="165.5" width="3" height="1.2" fill="#9a9aa8" fill-opacity="0.6"/>
<rect x="41" y="165.5" width="1" height="1.2" fill="#9a9aa8" fill-opacity="0.6"/>
<rect x="42" y="165.5" width="3" height="1.2" fill="#9a9aa8" fill-opacity="0.75"/>
<rect x="45" y="165.5" width="1" height="1.2" fill="#9a9aa8" fill-opacity="0.75"/>
<rect x="46" y="165.5" width="2" height="1.2" fill="#9a9aa8" fill-opacity="0.6"/>
<rect x="48" y="165.5" width="1" height="1.2" fill="#9a9aa8" fill-opacity="0.35"/>
<rect x="49" y="165.5" width="2" height="1.2" fill="#9a9aa8" fill-opacity="0.6"/>
<rect x="51" y="165.5" width="1" height="1.2" fill="#9a9aa8" fill-opacity="0.75"/>
<rect x="52" y="165.5" width="3" height="1.2" fill="#9a9aa8" fill-opacity="0.75"/>
<rect x="55" y="165.5" width="3" height="1.2" fill="#9a9aa8" fill-opacity="0.75"/>
<rect x="58" y="165.5" width="3" height="1.2" fill="#9a9aa8" fill-opacity="0.75"/>
<rect x="61" y="165.5" width="3" height="1.2" fill="#9a9aa8" fill-opacity="0.75"/>
<rect x="6" y="168.0" width="2" height="1.2" fill="#9a9aa8" fill-opacity="0.5"/>
<rect x="8" y="168.0" width="3" height="1.2" fill="#9a9aa8" fill-opacity="0.75"/>
<rect x="12" y="168.0" width="1" height="1.2" fill="#9a9aa8" fill-opacity="0.6"/>
<rect x="13" y="168.0" width="1" height="1.2" fill="#9a9aa8" fill-opacity="0.35"/>
<rect x="14" y="168.0" width="3" height="1.2" fill="#9a9aa8" fill-opacity="0.6"/>
<rect x="17" y="168.0" width="3" height="1.2" fill="#9a9aa8" fill-opacity="0.75"/>
<rect x="21" y="168.0" width="2" height="1.2" fill="#9a9aa8" fill-opacity="0.6"/>
<rect x="24" y="168.0" width="2" height="1.2" fill="#9a9aa8" fill-opacity="0.35"/>
<rect x="26" y="168.0" width="3" height="1.2" fill="#9a9aa8" fill-opacity="0.75"/>
<rect x="29" y="168.0" width="1" height="1.2" fill="#9a9aa8" fill-opacity="0.75"/>
<rect x="30" y="168.0" width="2" height="1.2" fill="#9a9aa8" fill-opacity="0.5"/>
<rect x="33" y="168.0" width="1" height="1.2" fill="#9a9aa8" fill-opacity="0.75"/>
<rect x="34" y="168.0" width="3" height="1.2" fill="#9a9aa8" fill-opacity="0.35"/>
<rect x="37" y="168.0" width="1" height="1.2" fill="#9a9aa8" fill-opacity="0.75"/>
<rect x="38" y="168.0" width="1" height="1.2" fill="#9a9aa8" fill-opacity="0.6"/>
<rect x="39" y="168.0" width="3" height="1.2" fill="#9a9aa8" fill-opacity="0.6"/>
<rect x="42" y="168.0" width="2" height="1.2" fill="#9a9aa8" fill-opacity="0.6"/>
<rect x="44" y="168.0" width="2" height="1.2" fill="#9a9aa8" fill-opacity="0.75"/>
<rect x="46" y="168.0" width="3" height="1.2" fill="#9a9aa8" fill-opacity="0.5"/>
<rect x="49" y="168.0" width="1" height="1.2" fill="#9a9aa8" fill-opacity="0.5"/>
<rect x="50" y="168.0" width="3" height="1.2" fill="#9a9aa8" fill-opacity="0.6"/>
<rect x="54" y="168.0" width="1" height="1.2" fill="#9a9aa8" fill-opacity="0.6"/>
<rect x="55" y="168.0" width="3" height="1.2" fill="#9a9aa8" fill-opacity="0.6"/>
<rect x="58" y="168.0" width="3" height="1.2" fill="#9a9aa8" fill-opacity="0.75"/>
<rect x="61" y="168.0" width="2" height="1.2" fill="#9a9aa8" fill-opacity="0.5"/>
<rect x="63" y="168.0" width="3" height="1.2" fill="#9a9aa8" fill-opacity="0.75"/>
<rect x="65" y="168.0" width="2" height="1.2" fill="#9a9aa8" fill-opacity="0.6"/>
<rect x="67" y="168.0" width="2" height="1.2" fill="#9a9aa8" fill-opacity="0.5"/>
<rect x="69" y="168.0" width="1" height="1.2" fill="#9a9aa8" fill-opacity="0.35"/>
<rect x="70" y="168.0" width="2" height="1.2" fill="#9a9aa8" fill-opacity="0.75"/>
<rect x="72" y="168.0" width="3" height="1.2" fill="#9a9aa8" fill-opacity="0.75"/>
<rect x="75" y="168.0" width="3" height="1.2" fill="#9a9aa8" fill-opacity="0.35"/>
<rect x="78" y="168.0" width="2" height="1.2" fill="#9a9aa8" fill-opacity="0.75"/>
<rect x="80" y="168.0" width="1" height="1.2" fill="#9a9aa8" fill-opacity="0.35"/>
<rect x="81" y="168.0" width="1" height="1.2" fill="#9a9aa8" fill-opacity="0.6"/>
<rect x="6" y="170.6" width="1" height="1.2" fill="#9a9aa8" fill-opacity="0.75"/>
<rect x="7" y="170.6" width="3" height="1.2" fill="#9a9aa8" fill-opacity="0.6"/>
<rect x="10" y="170.6" width="1" height="1.2" fill="#9a9aa8" fill-opacity="0.6"/>
<rect x="11" y="170.6" width="3" height="1.2" fill="#9a9aa8" fill-opacity="0.35"/>
<rect x="14" y="170.6" width="2" height="1.2" fill="#9a9aa8" fill-opacity="0.75"/>
<rect x="16" y="170.6" width="3" height="1.2" fill="#9a9aa8" fill-opacity="0.75"/>
<rect x="19" y="170.6" width="1" height="1.2" fill="#9a9aa8" fill-opacity="0.6"/>
<rect x="20" y="170.6" width="3" height="1.2" fill="#9a9aa8" fill-opacity="0.5"/>
<rect x="23" y="170.6" width="1" height="1.2" fill="#9a9aa8" fill-opacity="0.5"/>
<rect x="25" y="170.6" width="1" height="1.2" fill="#9a9aa8" fill-opacity="0.35"/>
<rect x="26" y="170.6" width="3" height="1.2" fill="#9a9aa8" fill-opacity="0.35"/>
<rect x="28" y="170.6" width="2" height="1.2" fill="#9a9aa8" fill-opacity="0.35"/>
<rect x="30" y="170.6" width="2" height="1.2" fill="#9a9aa8" fill-opacity="0.35"/>
<rect x="32" y="170.6" width="3" height="1.2" fill="#9a9aa8" fill-opacity="0.35"/>
<rect x="34" y="170.6" width="2" height="1.2" fill="#9a9aa8" fill-opacity="0.6"/>
<rect x="36" y="170.6" width="1" height="1.2" fill="#9a9aa8" fill-opacity="0.6"/>
<rect x="37" y="170.6" width="3" height="1.2" fill="#9a9aa8" fill-opacity="0.6"/>
<rect x="40" y="170.6" width="2" height="1.2" fill="#9a9aa8" fill-opacity="0.5"/>
<rect x="42" y="170.6" width="2" height="1.2" fill="#9a9aa8" fill-opacity="0.6"/>
<rect x="44" y="170.6" width="1" height="1.2" fill="#9a9aa8" fill-opacity="0.75"/>
<rect x="45" y="170.6" width="3" height="1.2" fill="#9a9aa8" fill-opacity="0.6"/>
<rect x="47" y="170.6" width="3" height="1.2" fill="#9a9aa8" fill-opacity="0.6"/>
<rect x="50" y="170.6" width="1" height="1.2" fill="#9a9aa8" fill-opacity="0.5"/>
<rect x="51" y="170.6" width="3" height="1.2" fill="#9a9aa8" fill-opacity="0.6"/>
<rect x="54" y="170.6" width="1" height="1.2" fill="#9a9aa8" fill-opacity="0.6"/>
<rect x="55" y="170.6" width="2" height="1.2" fill="#9a9aa8" fill-opacity="0.75"/>
<rect x="57" y="170.6" width="1" height="1.2" fill="#9a9aa8" fill-opacity="0.5"/>
<rect x="59" y="170.6" width="3" height="1.2" fill="#9a9aa8" fill-opacity="0.5"/>
<rect x="62" y="170.6" width="2" height="1.2" fill="#9a9aa8" fill-opacity="0.6"/>
<rect x="64" y="170.6" width="3" height="1.2" fill="#9a9aa8" fill-opacity="0.6"/>
<rect x="67" y="170.6" width="1" height="1.2" fill="#9a9aa8" fill-opacity="0.6"/>
<rect x="68" y="170.6" width="1" height="1.2" fill="#9a9aa8" fill-opacity="0.75"/>
<rect x="69" y="170.6" width="2" height="1.2" fill="#9a9aa8" fill-opacity="0.35"/>
<rect x="71" y="170.6" width="2" height="1.2" fill="#9a9aa8" fill-opacity="0.35"/>
<rect x="73" y="170.6" width="3" height="1.2" fill="#9a9aa8" fill-opacity="0.35"/>
<rect x="77" y="170.6" width="3" height="1.2" fill="#9a9aa8" fill-opacity="0.35"/>
<rect x="6" y="173.2" width="3" height="1.2" fill="#9fcf95" fill-opacity="0.6"/>
<rect x="9" y="173.2" width="3" height="1.2" fill="#9fcf95" fill-opacity="0.75"/>
<rect x="12" y="173.2" width="1" height="1.2" fill="#9fcf95" fill-opacity="0.35"/>
<rect x="13" y="173.2" width="2" height="1.2" fill="#9fcf95" fill-opacity="0.35"/>
<rect x="15" y="173.2" width="3" height="1.2" fill="#9fcf95" fill-opacity="0.5"/>
<rect x="19" y="173.2" width="2" height="1.2" fill="#9fcf95" fill-opacity="0.35"/>
<rect x="21" y="173.2" width="3" height="1.2" fill="#9fcf95" fill-opacity="0.5"/>
<rect x="24" y="173.2" width="3" height="1.2" fill="#9fcf95" fill-opacity="0.6"/>
<rect x="27" y="173.2" width="1" height="1.2" fill="#9fcf95" fill-opacity="0.75"/>
<rect x="28" y="173.2" width="2" height="1.2" fill="#9fcf95" fill-opacity="0.5"/>
<rect x="30" y="173.2" width="1" height="1.2" fill="#9fcf95" fill-opacity="0.6"/>
<rect x="31" y="173.2" width="1" height="1.2" fill="#9fcf95" fill-opacity="0.6"/>
<rect x="32" y="173.2" width="1" height="1.2" fill="#9fcf95" fill-opacity="0.5"/>
<rect x="33" y="173.2" width="2" height="1.2" fill="#9fcf95" fill-opacity="0.6"/>
<rect x="35" y="173.2" width="2" height="1.2" fill="#9fcf95" fill-opacity="0.35"/>
<rect x="6" y="175.8" width="2" height="1.2" fill="#9fcf95" fill-opacity="0.5"/>
<rect x="8" y="175.8" width="2" height="1.2" fill="#9fcf95" fill-opacity="0.5"/>
<rect x="10" y="175.8" width="1" height="1.2" fill="#9fcf95" fill-opacity="0.5"/>
<rect x="11" y="175.8" width="1" height="1.2" fill="#9fcf95" fill-opacity="0.75"/>
<rect x="13" y="175.8" width="3" height="1.2" fill="#9fcf95" fill-opacity="0.5"/>
<rect x="16" y="175.8" width="2" height="1.2" fill="#9fcf95" fill-opacity="0.75"/>
<rect x="18" y="175.8" width="3" height="1.2" fill="#9fcf95" fill-opacity="0.5"/>
<rect x="21" y="175.8" width="2" height="1.2" fill="#9fcf95" fill-opacity="0.75"/>
<rect x="23" y="175.8" width="2" height="1.2" fill="#9fcf95" fill-opacity="0.6"/>
<rect x="26" y="175.8" width="2" height="1.2" fill="#9fcf95" fill-opacity="0.5"/>
<rect x="28" y="175.8" width="2" height="1.2" fill="#9fcf95" fill-opacity="0.35"/>
<rect x="30" y="175.8" width="2" height="1.2" fill="#9fcf95" fill-opacity="0.6"/>
<rect x="32" y="175.8" width="2" height="1.2" fill="#9fcf95" fill-opacity="0.35"/>
<rect x="34" y="175.8" width="3" height="1.2" fill="#9fcf95" fill-opacity="0.35"/>
<rect x="2" y="178.3" width="1" height="1.2" fill="#9a9aa8" fill-opacity="0.6"/>
<rect x="3" y="178.3" width="3" height="1.2" fill="#9a9aa8" fill-opacity="0.75"/>
<rect x="2" y="183.5" width="2" height="1.2" fill="#9a9aa8" fill-opacity="0.5"/>
<rect x="4" y="183.5" width="3" height="1.2" fill="#9a9aa8" fill-opacity="0.5"/>
<rect x="6" y="183.5" width="1" height="1.2" fill="#9a9aa8" fill-opacity="0.5"/>
<rect x="7" y="183.5" width="3" height="1.2" fill="#9a9aa8" fill-opacity="0.6"/>
<rect x="10" y="183.5" width="2" height="1.2" fill="#9a9aa8" fill-opacity="0.6"/>
<rect x="12" y="183.5" width="1" height="1.2" fill="#9a9aa8" fill-opacity="0.6"/>
<rect x="13" y="183.5" width="3" height="1.2" fill="#9a9aa8" fill-opacity="0.6"/>
<rect x="16" y="183.5" width="1" height="1.2" fill="#9a9aa8" fill-opacity="0.35"/>
<rect x="17" y="183.5" width="1" height="1.2" fill="#9a9aa8" fill-opacity="0.5"/>
<rect x="18" y="183.5" width="2" height="1.2" fill="#9a9aa8" fill-opacity="0.35"/>
<rect x="21" y="183.5" width="3" height="1.2" fill="#9a9aa8" fill-opacity="0.75"/>
<rect x="24" y="183.5" width="3" height="1.2" fill="#9a9aa8" fill-opacity="0.35"/>
<rect x="27" y="183.5" width="3" height="1.2" fill="#9a9aa8" fill-opacity="0.5"/>
<rect x="31" y="183.5" width="2" height="1.2" fill="#9a9aa8" fill-opacity="0.5"/>
<rect x="33" y="183.5" width="3" height="1.2" fill="#9a9aa8" fill-opacity="0.75"/>
<rect x="35" y="183.5" width="2" height="1.2" fill="#9a9aa8" fill-opacity="0.6"/>
<rect x="37" y="183.5" width="3" height="1.2" fill="#9a9aa8" fill-opacity="0.35"/>
<rect x="41" y="183.5" width="1" height="1.2" fill="#9a9aa8" fill-opacity="0.5"/>
<rect x="2" y="186.0" width="2" height="1.2" fill="#9a9aa8" fill-opacity="0.5"/>
<rect x="6" y="188.6" width="1" height="1.2" fill="#9a9aa8" fill-opacity="0.5"/>
<rect x="7" y="188.6" width="1" height="1.2" fill="#9a9aa8" fill-opacity="0.35"/>
<rect x="8" y="188.6" width="2" height="1.2" fill="#9a9aa8" fill-opacity="0.35"/>
<rect x="10" y="188.6" width="3" height="1.2" fill="#9a9aa8" fill-opacity="0.5"/>
<rect x="13" y="188.6" width="3" height="1.2" fill="#9a9aa8" fill-opacity="0.35"/>
<rect x="16" y="188.6" width="3" height="1.2" fill="#9a9aa8" fill-opacity="0.5"/>
<rect x="19" y="188.6" width="3" height="1.2" fill="#9a9aa8" fill-opacity="0.6"/>
<rect x="22" y="188.6" width="2" height="1.2" fill="#9a9aa8" fill-opacity="0.5"/>
<rect x="24" y="188.6" width="2" height="1.2" fill="#9a9aa8" fill-opacity="0.35"/>
<rect x="26" y="188.6" width="3" height="1.2" fill="#9a9aa8" fill-opacity="0.35"/>
<rect x="29" y="188.6" width="1" height="1.2" fill="#9a9aa8" fill-opacity="0.6"/>
<rect x="30" y="188.6" width="2" height="1.2" fill="#9a9aa8" fill-opacity="0.6"/>
<rect x="32" y="188.6" width="2" height="1.2" fill="#9a9aa8" fill-opacity="0.5"/>
<rect x="34" y="188.6" width="2" height="1.2" fill="#9a9aa8" fill-opacity="0.75"/>
<rect x="36" y="188.6" width="3" height="1.2" fill="#9a9aa8" fill-opacity="0.35"/>
<rect x="39" y="188.6" width="1" height="1.2" fill="#9a9aa8" fill-opacity="0.6"/>
<rect x="40" y="188.6" width="2" height="1.2" fill="#9a9aa8" fill-opacity="0.5"/>
<rect x="42" y="188.6" width="1" height="1.2" fill="#9a9aa8" fill-opacity="0.35"/>
<rect x="43" y="188.6" width="2" height="1.2" fill="#9a9aa8" fill-opacity="0.5"/>
<rect x="45" y="188.6" width="3" height="1.2" fill="#9a9aa8" fill-opacity="0.5"/>
<rect x="48" y="188.6" width="2" height="1.2" fill="#9a9aa8" fill-opacity="0.6"/>
<rect x="50" y="188.6" width="3" height="1.2" fill="#9a9aa8" fill-opacity="0.35"/>
<rect x="53" y="188.6" width="3" height="1.2" fill="#9a9aa8" fill-opacity="0.75"/>
<rect x="55" y="188.6" width="2" height="1.2" fill="#9a9aa8" fill-opacity="0.35"/>
<rect x="57" y="188.6" width="1" height="1.2" fill="#9a9aa8" fill-opacity="0.75"/>
<rect x="58" y="188.6" width="2" height="1.2" fill="#9a9aa8" fill-opacity="0.75"/>
<rect x="60" y="188.6" width="1" height="1.2" fill="#9a9aa8" fill-opacity="0.6"/>
<rect x="61" y="188.6" width="1" height="1.2" fill="#9a9aa8" fill-opacity="0.35"/>
<rect x="63" y="188.6" width="2" height="1.2" fill="#9a9aa8" fill-opacity="0.6"/>
<rect x="66" y="188.6" width="2" height="1.2" fill="#9a9aa8" fill-opacity="0.75"/>
<rect x="68" y="188.6" width="1" height="1.2" fill="#9a9aa8" fill-opacity="0.5"/>
<rect x="6" y="191.2" width="3" height="1.2" fill="#9a9aa8" fill-opacity="0.5"/>
<rect x="9" y="191.2" width="2" height="1.2" fill="#9a9aa8" fill-opacity="0.5"/>
<rect x="11" y="191.2" width="2" height="1.2" fill="#9a9aa8" fill-opacity="0.35"/>
<rect x="13" y="191.2" width="1" height="1.2" fill="#9a9aa8" fill-opacity="0.35"/>
<rect x="14" y="191.2" width="1" height="1.2" fill="#9a9aa8" fill-opacity="0.5"/>
<rect x="16" y="191.2" width="2" height="1.2" fill="#9a9aa8" fill-opacity="0.5"/>
<rect x="18" y="191.2" width="2" height="1.2" fill="#9a9aa8" fill-opacity="0.75"/>
<rect x="20" y="191.2" width="3" height="1.2" fill="#9a9aa8" fill-opacity="0.5"/>
<rect x="23" y="191.2" width="2" height="1.2" fill="#9a9aa8" fill-opacity="0.35"/>
<rect x="25" y="191.2" width="1" height="1.2" fill="#9a9aa8" fill-opacity="0.5"/>
<rect x="26" y="191.2" width="2" height="1.2" fill="#9a9aa8" fill-opacity="0.5"/>
<rect x="28" y="191.2" width="3" height="1.2" fill="#9a9aa8" fill-opacity="0.35"/>
<rect x="31" y="191.2" width="1" height="1.2" fill="#9a9aa8" fill-opacity="0.5"/>
<rect x="33" y="191.2" width="2" height="1.2" fill="#9a9aa8" fill-opacity="0.5"/>
<rect x="35" y="191.2" width="1" height="1.2" fill="#9a9aa8" fill-opacity="0.35"/>
<rect x="36" y="191.2" width="1" height="1.2" fill="#9a9aa8" fill-opacity="0.6"/>
<rect x="37" y="191.2" width="3" height="1.2" fill="#9a9aa8" fill-opacity="0.35"/>
<rect x="40" y="191.2" width="3" height="1.2" fill="#9a9aa8" fill-opacity="0.35"/>
<rect x="43" y="191.2" width="1" height="1.2" fill="#9a9aa8" fill-opacity="0.6"/>
<rect x="44" y="191.2" width="1" height="1.2" fill="#9a9aa8" fill-opacity="0.5"/>
<rect x="46" y="191.2" width="1" height="1.2" fill="#9a9aa8" fill-opacity="0.75"/>
<rect x="47" y="191.2" width="1" height="1.2" fill="#9a9aa8" fill-opacity="0.35"/>
<rect x="48" y="191.2" width="3" height="1.2" fill="#9a9aa8" fill-opacity="0.5"/>
<rect x="51" y="191.2" width="1" height="1.2" fill="#9a9aa8" fill-opacity="0.5"/>
<rect x="52" y="191.2" width="3" height="1.2" fill="#9a9aa8" fill-opacity="0.75"/>
<rect x="56" y="191.2" width="1" height="1.2" fill="#9a9aa8" fill-opacity="0.75"/>
<rect x="57" y="191.2" width="3" height="1.2" fill="#9a9aa8" fill-opacity="0.35"/>
<rect x="60" y="191.2" width="2" height="1.2" fill="#9a9aa8" fill-opacity="0.35"/>
<rect x="62" y="191.2" width="2" height="1.2" fill="#9a9aa8" fill-opacity="0.6"/>
<rect x="65" y="191.2" width="3" height="1.2" fill="#9a9aa8" fill-opacity="0.35"/>
<rect x="68" y="191.2" width="2" height="1.2" fill="#9a9aa8" fill-opacity="0.35"/>
<rect x="70" y="191.2" width="2" height="1.2" fill="#9a9aa8" fill-opacity="0.75"/>
<rect x="10" y="193.7" width="1" height="1.2" fill="#9fcf95" fill-opacity="0.5"/>
<rect x="11" y="193.7" width="2" height="1.2" fill="#9fcf95" fill-opacity="0.6"/>
<rect x="13" y="193.7" width="3" height="1.2" fill="#9fcf95" fill-opacity="0.35"/>
<rect x="16" y="193.7" width="3" height="1.2" fill="#9fcf95" fill-opacity="0.35"/>
<rect x="19" y="193.7" width="2" height="1.2" fill="#9fcf95" fill-opacity="0.6"/>
<rect x="21" y="193.7" width="2" height="1.2" fill="#9fcf95" fill-opacity="0.6"/>
<rect x="23" y="193.7" width="1" height="1.2" fill="#9fcf95" fill-opacity="0.5"/>
<rect x="24" y="193.7" width="3" height="1.2" fill="#9fcf95" fill-opacity="0.75"/>
<rect x="27" y="193.7" width="2" height="1.2" fill="#9fcf95" fill-opacity="0.6"/>
<rect x="29" y="193.7" width="3" height="1.2" fill="#9fcf95" fill-opacity="0.35"/>
<rect x="33" y="193.7" width="3" height="1.2" fill="#9fcf95" fill-opacity="0.6"/>
<rect x="36" y="193.7" width="3" height="1.2" fill="#9fcf95" fill-opacity="0.6"/>
<rect x="39" y="193.7" width="1" height="1.2" fill="#9fcf95" fill-opacity="0.75"/>
<rect x="40" y="193.7" width="3" height="1.2" fill="#9fcf95" fill-opacity="0.6"/>
<rect x="42" y="193.7" width="1" height="1.2" fill="#9fcf95" fill-opacity="0.6"/>
<rect x="43" y="193.7" width="2" height="1.2" fill="#9fcf95" fill-opacity="0.75"/>
<rect x="45" y="193.7" width="3" height="1.2" fill="#9fcf95" fill-opacity="0.35"/>
<rect x="48" y="193.7" width="1" height="1.2" fill="#9fcf95" fill-opacity="0.35"/>
<rect x="49" y="193.7" width="2" height="1.2" fill="#9fcf95" fill-opacity="0.6"/>
<rect x="51" y="193.7" width="1" height="1.2" fill="#9fcf95" fill-opacity="0.6"/>
<rect x="52" y="193.7" width="3" height="1.2" fill="#9fcf95" fill-opacity="0.75"/>
<rect x="54" y="193.7" width="2" height="1.2" fill="#9fcf95" fill-opacity="0.75"/>
<rect x="56" y="193.7" width="3" height="1.2" fill="#9fcf95" fill-opacity="0.35"/>
<rect x="60" y="193.7" width="1" height="1.2" fill="#9fcf95" fill-opacity="0.6"/>
<rect x="61" y="193.7" width="3" height="1.2" fill="#9fcf95" fill-opacity="0.5"/>
<rect x="64" y="193.7" width="3" height="1.2" fill="#9fcf95" fill-opacity="0.6"/>
<rect x="67" y="193.7" width="2" height="1.2" fill="#9fcf95" fill-opacity="0.6"/>
<rect x="10" y="196.3" width="1" height="1.2" fill="#9a9aa8" fill-opacity="0.35"/>
<rect x="11" y="196.3" width="3" height="1.2" fill="#9a9aa8" fill-opacity="0.6"/>
<rect x="14" y="196.3" width="2" height="1.2" fill="#9a9aa8" fill-opacity="0.75"/>
<rect x="16" y="196.3" width="3" height="1.2" fill="#9a9aa8" fill-opacity="0.35"/>
<rect x="19" y="196.3" width="1" height="1.2" fill="#9a9aa8" fill-opacity="0.75"/>
<rect x="20" y="196.3" width="3" height="1.2" fill="#9a9aa8" fill-opacity="0.5"/>
<rect x="23" y="196.3" width="2" height="1.2" fill="#9a9aa8" fill-opacity="0.5"/>
<rect x="25" y="196.3" width="3" height="1.2" fill="#9a9aa8" fill-opacity="0.75"/>
<rect x="27" y="196.3" width="3" height="1.2" fill="#9a9aa8" fill-opacity="0.75"/>
<rect x="30" y="196.3" width="2" height="1.2" fill="#9a9aa8" fill-opacity="0.6"/>
<rect x="32" y="196.3" width="3" height="1.2" fill="#9a9aa8" fill-opacity="0.75"/>
<rect x="35" y="196.3" width="1" height="1.2" fill="#9a9aa8" fill-opacity="0.6"/>
<rect x="37" y="196.3" width="3" height="1.2" fill="#9a9aa8" fill-opacity="0.5"/>
<rect x="40" y="196.3" width="3" height="1.2" fill="#9a9aa8" fill-opacity="0.5"/>
<rect x="43" y="196.3" width="1" height="1.2" fill="#9a9aa8" fill-opacity="0.5"/>
<rect x="44" y="196.3" width="3" height="1.2" fill="#9a9aa8" fill-opacity="0.35"/>
<rect x="47" y="196.3" width="2" height="1.2" fill="#9a9aa8" fill-opacity="0.5"/>
<rect x="49" y="196.3" width="3" height="1.2" fill="#9a9aa8" fill-opacity="0.5"/>
<rect x="52" y="196.3" width="3" height="1.2" fill="#9a9aa8" fill-opacity="0.6"/>
<rect x="56" y="196.3" width="1" height="1.2" fill="#9a9aa8" fill-opacity="0.6"/>
<rect x="57" y="196.3" width="1" height="1.2" fill="#9a9aa8" fill-opacity="0.35"/>
<rect x="58" y="196.3" width="1" height="1.2" fill="#9a9aa8" fill-opacity="0.75"/>
<rect x="59" y="196.3" width="3" height="1.2" fill="#9a9aa8" fill-opacity="0.6"/>
<rect x="62" y="196.3" width="3" height="1.2" fill="#9a9aa8" fill-opacity="0.6"/>
<rect x="65" y="196.3" width="3" height="1.2" fill="#9a9aa8" fill-opacity="0.75"/>
<rect x="69" y="196.3" width="1" height="1.2" fill="#9a9aa8" fill-opacity="0.35"/>
<rect x="70" y="196.3" width="3" height="1.2" fill="#9a9aa8" fill-opacity="0.35"/>
<rect x="73" y="196.3" width="2" height="1.2" fill="#9a9aa8" fill-opacity="0.5"/>
<rect x="75" y="196.3" width="1" height="1.2" fill="#9a9aa8" fill-opacity="0.35"/>
<rect x="77" y="196.3" width="1" height="1.2" fill="#9a9aa8" fill-opacity="0.35"/>
<rect x="78" y="196.3" width="1" height="1.2" fill="#9a9aa8" fill-opacity="0.6"/>
<rect x="79" y="196.3" width="1" height="1.2" fill="#9a9aa8" fill-opacity="0.35"/>
<rect x="80" y="196.3" width="3" height="1.2" fill="#9a9aa8" fill-opacity="0.6"/>
<rect x="10" y="198.9" width="3" height="1.2" fill="#9a9aa8" fill-opacity="0.6"/>
<rect x="13" y="198.9" width="2" height="1.2" fill="#9a9aa8" fill-opacity="0.5"/>
<rect x="15" y="198.9" width="1" height="1.2" fill="#9a9aa8" fill-opacity="0.6"/>
<rect x="16" y="198.9" width="2" height="1.2" fill="#9a9aa8" fill-opacity="0.75"/>
<rect x="18" y="198.9" width="3" height="1.2" fill="#9a9aa8" fill-opacity="0.75"/>
<rect x="21" y="198.9" width="2" height="1.2" fill="#9a9aa8" fill-opacity="0.5"/>
<rect x="23" y="198.9" width="1" height="1.2" fill="#9a9aa8" fill-opacity="0.75"/>
<rect x="25" y="198.9" width="2" height="1.2" fill="#9a9aa8" fill-opacity="0.75"/>
<rect x="27" y="198.9" width="3" height="1.2" fill="#9a9aa8" fill-opacity="0.5"/>
<rect x="30" y="198.9" width="3" height="1.2" fill="#9a9aa8" fill-opacity="0.6"/>
<rect x="33" y="198.9" width="1" height="1.2" fill="#9a9aa8" fill-opacity="0.5"/>
<rect x="35" y="198.9" width="3" height="1.2" fill="#9a9aa8" fill-opacity="0.6"/>
<rect x="38" y="198.9" width="3" height="1.2" fill="#9a9aa8" fill-opacity="0.35"/>
<rect x="41" y="198.9" width="3" height="1.2" fill="#9a9aa8" fill-opacity="0.6"/>
<rect x="43" y="198.9" width="2" height="1.2" fill="#9a9aa8" fill-opacity="0.75"/>
<rect x="45" y="198.9" width="2" height="1.2" fill="#9a9aa8" fill-opacity="0.75"/>
<rect x="47" y="198.9" width="2" height="1.2" fill="#9a9aa8" fill-opacity="0.75"/>
<rect x="49" y="198.9" width="3" height="1.2" fill="#9a9aa8" fill-opacity="0.75"/>
<rect x="52" y="198.9" width="2" height="1.2" fill="#9a9aa8" fill-opacity="0.35"/>
<rect x="54" y="198.9" width="1" height="1.2" fill="#9a9aa8" fill-opacity="0.35"/>
<rect x="55" y="198.9" width="3" height="1.2" fill="#9a9aa8" fill-opacity="0.75"/>
<rect x="58" y="198.9" width="3" height="1.2" fill="#9a9aa8" fill-opacity="0.35"/>
<rect x="60" y="198.9" width="1" height="1.2" fill="#9a9aa8" fill-opacity="0.75"/>
<rect x="61" y="198.9" width="1" height="1.2" fill="#9a9aa8" fill-opacity="0.75"/>
<rect x="62" y="198.9" width="1" height="1.2" fill="#9a9aa8" fill-opacity="0.5"/>
<rect x="63" y="198.9" width="1" height="1.2" fill="#9a9aa8" fill-opacity="0.75"/>
<rect x="64" y="198.9" width="3" height="1.2" fill="#9a9aa8" fill-opacity="0.6"/>
<rect x="67" y="198.9" width="2" height="1.2" fill="#9a9aa8" fill-opacity="0.6"/>
<rect x="69" y="198.9" width="2" height="1.2" fill="#9a9aa8" fill-opacity="0.5"/>
<rect x="71" y="198.9" width="3" height="1.2" fill="#9a9aa8" fill-opacity="0.35"/>
<rect x="73" y="198.9" width="1" height="1.2" fill="#9a9aa8" fill-opacity="0.75"/>
<rect x="74" y="198.9" width="1" height="1.2" fill="#9a9aa8" fill-opacity="0.5"/>
<rect x="76" y="198.9" width="1" height="1.2" fill="#9a9aa8" fill-opacity="0.35"/>
<rect x="77" y="198.9" width="3" height="1.2" fill="#9a9aa8" fill-opacity="0.35"/>
<rect x="81" y="198.9" width="3" height="1.2" fill="#9a9aa8" fill-opacity="0.5"/>
<rect x="84" y="198.9" width="1" height="1.2" fill="#9a9aa8" fill-opacity="0.6"/>
<rect x="85" y="198.9" width="2" height="1.2" fill="#9a9aa8" fill-opacity="0.5"/>
<rect x="87" y="198.9" width="3" height="1.2" fill="#9a9aa8" fill-opacity="0.35"/>
<rect x="2" y="201.5" width="3" height="1.2" fill="#9a9aa8" fill-opacity="0.5"/>
<rect x="2" y="206.6" width="3" height="1.2" fill="#9fcf95" fill-opacity="0.35"/>
<rect x="6" y="206.6" width="2" height="1.2" fill="#9fcf95" fill-opacity="0.75"/>
<rect x="8" y="206.6" width="2" height="1.2" fill="#9fcf95" fill-opacity="0.5"/>
<rect x="10" y="206.6" width="1" height="1.2" fill="#9fcf95" fill-opacity="0.5"/>
<rect x="11" y="206.6" width="2" height="1.2" fill="#9fcf95" fill-opacity="0.75"/>
<rect x="13" y="206.6" width="2" height="1.2" fill="#9fcf95" fill-opacity="0.6"/>
<rect x="15" y="206.6" width="2" height="1.2" fill="#9fcf95" fill-opacity="0.5"/>
<rect x="17" y="206.6" width="3" height="1.2" fill="#9fcf95" fill-opacity="0.35"/>
<rect x="19" y="206.6" width="1" height="1.2" fill="#9fcf95" fill-opacity="0.75"/>
<rect x="20" y="206.6" width="3" height="1.2" fill="#9fcf95" fill-opacity="0.5"/>
<rect x="23" y="206.6" width="2" height="1.2" fill="#9fcf95" fill-opacity="0.35"/>
<rect x="25" y="206.6" width="3" height="1.2" fill="#9fcf95" fill-opacity="0.75"/>
<rect x="28" y="206.6" width="3" height="1.2" fill="#9fcf95" fill-opacity="0.5"/>
<rect x="31" y="206.6" width="3" height="1.2" fill="#9fcf95" fill-opacity="0.6"/>
<rect x="34" y="206.6" width="1" height="1.2" fill="#9fcf95" fill-opacity="0.5"/>
<rect x="36" y="206.6" width="3" height="1.2" fill="#9fcf95" fill-opacity="0.6"/>
<rect x="39" y="206.6" width="1" height="1.2" fill="#9fcf95" fill-opacity="0.6"/>
<rect x="40" y="206.6" width="1" height="1.2" fill="#9fcf95" fill-opacity="0.6"/>
<rect x="41" y="206.6" width="3" height="1.2" fill="#9fcf95" fill-opacity="0.75"/>
<rect x="44" y="206.6" width="3" height="1.2" fill="#9fcf95" fill-opacity="0.5"/>
<rect x="47" y="206.6" width="1" height="1.2" fill="#9fcf95" fill-opacity="0.35"/>
<rect x="48" y="206.6" width="3" height="1.2" fill="#9fcf95" fill-opacity="0.35"/>
<rect x="51" y="206.6" width="1" height="1.2" fill="#9fcf95" fill-opacity="0.5"/>
<rect x="52" y="206.6" width="1" height="1.2" fill="#9fcf95" fill-opacity="0.75"/>
<rect x="53" y="206.6" width="2" height="1.2" fill="#9fcf95" fill-opacity="0.75"/>
<rect x="55" y="206.6" width="2" height="1.2" fill="#9fcf95" fill-opacity="0.5"/>
<rect x="57" y="206.6" width="1" height="1.2" fill="#9fcf95" fill-opacity="0.5"/>
<rect x="58" y="206.6" width="1" height="1.2" fill="#9fcf95" fill-opacity="0.5"/>
<rect x="59" y="206.6" width="1" height="1.2" fill="#9fcf95" fill-opacity="0.35"/>
<rect x="60" y="206.6" width="3" height="1.2" fill="#9fcf95" fill-opacity="0.75"/>
<rect x="63" y="206.6" width="2" height="1.2" fill="#9fcf95" fill-opacity="0.5"/>
<rect x="2" y="209.2" width="2" height="1.2" fill="#9fcf95" fill-opacity="0.35"/>
<rect x="4" y="209.2" width="3" height="1.2" fill="#9fcf95" fill-opacity="0.6"/>
<rect x="7" y="209.2" width="2" height="1.2" fill="#9fcf95" fill-opacity="0.75"/>
<rect x="9" y="209.2" width="2" height="1.2" fill="#9fcf95" fill-opacity="0.6"/>
<rect x="11" y="209.2" width="1" height="1.2" fill="#9fcf95" fill-opacity="0.6"/>
<rect x="12" y="209.2" width="2" height="1.2" fill="#9fcf95" fill-opacity="0.35"/>
<rect x="14" y="209.2" width="2" height="1.2" fill="#9fcf95" fill-opacity="0.75"/>
<rect x="16" y="209.2" width="2" height="1.2" fill="#9fcf95" fill-opacity="0.35"/>
<rect x="18" y="209.2" width="1" height="1.2" fill="#9fcf95" fill-opacity="0.6"/>
<rect x="19" y="209.2" width="3" height="1.2" fill="#9fcf95" fill-opacity="0.75"/>
<rect x="22" y="209.2" width="3" height="1.2" fill="#9fcf95" fill-opacity="0.35"/>
<rect x="24" y="209.2" width="3" height="1.2" fill="#9fcf95" fill-opacity="0.35"/>
<rect x="27" y="209.2" width="3" height="1.2" fill="#9fcf95" fill-opacity="0.6"/>
<rect x="29" y="209.2" width="1" height="1.2" fill="#9fcf95" fill-opacity="0.35"/>
<rect x="30" y="209.2" width="1" height="1.2" fill="#9fcf95" fill-opacity="0.6"/>
<rect x="31" y="209.2" width="3" height="1.2" fill="#9fcf95" fill-opacity="0.75"/>
<rect x="34" y="209.2" width="1" height="1.2" fill="#9fcf95" fill-opacity="0.6"/>
<rect x="35" y="209.2" width="2" height="1.2" fill="#9fcf95" fill-opacity="0.6"/>
<rect x="37" y="209.2" width="2" height="1.2" fill="#9fcf95" fill-opacity="0.75"/>
<rect x="39" y="209.2" width="1" height="1.2" fill="#9fcf95" fill-opacity="0.6"/>
<rect x="40" y="209.2" width="2" height="1.2" fill="#9fcf95" fill-opacity="0.5"/>
<rect x="42" y="209.2" width="1" height="1.2" fill="#9fcf95" fill-opacity="0.75"/>
<rect x="43" y="209.2" width="1" height="1.2" fill="#9fcf95" fill-opacity="0.35"/>
<rect x="45" y="209.2" width="3" height="1.2" fill="#9fcf95" fill-opacity="0.35"/>
<rect x="48" y="209.2" width="1" height="1.2" fill="#9fcf95" fill-opacity="0.75"/>
<rect x="49" y="209.2" width="2" height="1.2" fill="#9fcf95" fill-opacity="0.75"/>
<rect x="51" y="209.2" width="2" height="1.2" fill="#9fcf95" fill-opacity="0.6"/>
<rect x="53" y="209.2" width="1" height="1.2" fill="#9fcf95" fill-opacity="0.75"/>
<rect x="54" y="209.2" width="2" height="1.2" fill="#9fcf95" fill-opacity="0.6"/>
<rect x="57" y="209.2" width="1" height="1.2" fill="#9fcf95" fill-opacity="0.6"/>
<rect x="58" y="209.2" width="3" height="1.2" fill="#9fcf95" fill-opacity="0.35"/>
<rect x="61" y="209.2" width="1" height="1.2" fill="#9fcf95" fill-opacity="0.6"/>
<rect x="62" y="209.2" width="3" height="1.2" fill="#9fcf95" fill-opacity="0.35"/>
<rect x="64" y="209.2" width="3" height="1.2" fill="#9fcf95" fill-opacity="0.35"/>
<rect x="67" y="209.2" width="3" height="1.2" fill="#9fcf95" fill-opacity="0.35"/>
<rect x="69" y="209.2" width="2" height="1.2" fill="#9fcf95" fill-opacity="0.5"/>
<rect x="71" y="209.2" width="2" height="1.2" fill="#9fcf95" fill-opacity="0.6"/>
<rect x="2" y="211.7" width="1" height="1.2" fill="#9fcf95" fill-opacity="0.75"/>
<rect x="3" y="211.7" width="3" height="1.2" fill="#9fcf95" fill-opacity="0.35"/>
<rect x="6" y="211.7" width="2" height="1.2" fill="#9fcf95" fill-opacity="0.5"/>
<rect x="9" y="211.7" width="3" height="1.2" fill="#9fcf95" fill-opacity="0.35"/>
<rect x="12" y="211.7" width="1" height="1.2" fill="#9fcf95" fill-opacity="0.75"/>
<rect x="13" y="211.7" width="3" height="1.2" fill="#9fcf95" fill-opacity="0.75"/>
<rect x="17" y="211.7" width="1" height="1.2" fill="#9fcf95" fill-opacity="0.35"/>
<rect x="18" y="211.7" width="1" height="1.2" fill="#9fcf95" fill-opacity="0.6"/>
<rect x="19" y="211.7" width="1" height="1.2" fill="#9fcf95" fill-opacity="0.75"/>
<rect x="21" y="211.7" width="2" height="1.2" fill="#9fcf95" fill-opacity="0.5"/>
<rect x="23" y="211.7" width="3" height="1.2" fill="#9fcf95" fill-opacity="0.6"/>
<rect x="26" y="211.7" width="3" height="1.2" fill="#9fcf95" fill-opacity="0.6"/>
<rect x="29" y="211.7" width="1" height="1.2" fill="#9fcf95" fill-opacity="0.6"/>
<rect x="30" y="211.7" width="2" height="1.2" fill="#9fcf95" fill-opacity="0.35"/>
<rect x="32" y="211.7" width="2" height="1.2" fill="#9fcf95" fill-opacity="0.75"/>
<rect x="34" y="211.7" width="1" height="1.2" fill="#9fcf95" fill-opacity="0.5"/>
<rect x="35" y="211.7" width="1" height="1.2" fill="#9fcf95" fill-opacity="0.6"/>
<rect x="36" y="211.7" width="2" height="1.2" fill="#9fcf95" fill-opacity="0.5"/>
<rect x="39" y="211.7" width="2" height="1.2" fill="#9fcf95" fill-opacity="0.5"/>
<rect x="41" y="211.7" width="2" height="1.2" fill="#9fcf95" fill-opacity="0.75"/>
<rect x="43" y="211.7" width="1" height="1.2" fill="#9fcf95" fill-opacity="0.6"/>
<rect x="44" y="211.7" width="1" height="1.2" fill="#9fcf95" fill-opacity="0.75"/>
<rect x="45" y="211.7" width="1" height="1.2" fill="#9fcf95" fill-opacity="0.5"/>
<rect x="46" y="211.7" width="3" height="1.2" fill="#9fcf95" fill-opacity="0.5"/>
<rect x="48" y="211.7" width="3" height="1.2" fill="#9fcf95" fill-opacity="0.75"/>
<rect x="51" y="211.7" width="1" height="1.2" fill="#9fcf95" fill-opacity="0.5"/>
<rect x="52" y="211.7" width="3" height="1.2" fill="#9fcf95" fill-opacity="0.75"/>
<rect x="55" y="211.7" width="3" height="1.2" fill="#9fcf95" fill-opacity="0.5"/>
<rect x="58" y="211.7" width="2" height="1.2" fill="#9fcf95" fill-opacity="0.75"/>
<rect x="60" y="211.7" width="3" height="1.2" fill="#9fcf95" fill-opacity="0.75"/>
<rect x="63" y="211.7" width="3" height="1.2" fill="#9fcf95" fill-opacity="0.5"/>
<rect x="65" y="211.7" width="1" height="1.2" fill="#9fcf95" fill-opacity="0.6"/>
<rect x="66" y="211.7" width="1" height="1.2" fill="#9fcf95" fill-opacity="0.75"/>
<rect x="67" y="211.7" width="1" height="1.2" fill="#9fcf95" fill-opacity="0.35"/>
<rect x="68" y="211.7" width="1" height="1.2" fill="#9fcf95" fill-opacity="0.75"/>
<rect x="69" y="211.7" width="1" height="1.2" fill="#9fcf95" fill-opacity="0.6"/>
<rect x="4" y="214.3" width="3" height="1.2" fill="#9a9aa8" fill-opacity="0.6"/>
<rect x="7" y="214.3" width="2" height="1.2" fill="#9a9aa8" fill-opacity="0.75"/>
<rect x="9" y="214.3" width="1" height="1.2" fill="#9a9aa8" fill-opacity="0.75"/>
<rect x="11" y="214.3" width="2" height="1.2" fill="#9a9aa8" fill-opacity="0.6"/>
<rect x="13" y="214.3" width="3" height="1.2" fill="#9a9aa8" fill-opacity="0.5"/>
<rect x="16" y="214.3" width="1" height="1.2" fill="#9a9aa8" fill-opacity="0.35"/>
<rect x="17" y="214.3" width="3" height="1.2" fill="#9a9aa8" fill-opacity="0.75"/>
<rect x="19" y="214.3" width="2" height="1.2" fill="#9a9aa8" fill-opacity="0.35"/>
<rect x="21" y="214.3" width="3" height="1.2" fill="#9a9aa8" fill-opacity="0.35"/>
<rect x="24" y="214.3" width="2" height="1.2" fill="#9a9aa8" fill-opacity="0.5"/>
<rect x="26" y="214.3" width="2" height="1.2" fill="#9a9aa8" fill-opacity="0.35"/>
<rect x="28" y="214.3" width="1" height="1.2" fill="#9a9aa8" fill-opacity="0.6"/>
<rect x="29" y="214.3" width="1" height="1.2" fill="#9a9aa8" fill-opacity="0.6"/>
<rect x="31" y="214.3" width="2" height="1.2" fill="#9a9aa8" fill-opacity="0.5"/>
<rect x="33" y="214.3" width="1" height="1.2" fill="#9a9aa8" fill-opacity="0.75"/>
<rect x="35" y="214.3" width="1" height="1.2" fill="#9a9aa8" fill-opacity="0.5"/>
<rect x="36" y="214.3" width="1" height="1.2" fill="#9a9aa8" fill-opacity="0.6"/>
<rect x="37" y="214.3" width="1" height="1.2" fill="#9a9aa8" fill-opacity="0.75"/>
<rect x="38" y="214.3" width="1" height="1.2" fill="#9a9aa8" fill-opacity="0.5"/>
<rect x="39" y="214.3" width="3" height="1.2" fill="#9a9aa8" fill-opacity="0.35"/>
<rect x="43" y="214.3" width="1" height="1.2" fill="#9a9aa8" fill-opacity="0.75"/>
<rect x="44" y="214.3" width="2" height="1.2" fill="#9a9aa8" fill-opacity="0.75"/>
<rect x="46" y="214.3" width="1" height="1.2" fill="#9a9aa8" fill-opacity="0.6"/>
<rect x="47" y="214.3" width="1" height="1.2" fill="#9a9aa8" fill-opacity="0.75"/>
<rect x="49" y="214.3" width="2" height="1.2" fill="#9a9aa8" fill-opacity="0.35"/>
<rect x="51" y="214.3" width="2" height="1.2" fill="#9a9aa8" fill-opacity="0.35"/>
<rect x="53" y="214.3" width="2" height="1.2" fill="#9a9aa8" fill-opacity="0.35"/>
<rect x="55" y="214.3" width="2" height="1.2" fill="#9a9aa8" fill-opacity="0.6"/>
<rect x="57" y="214.3" width="3" height="1.2" fill="#9a9aa8" fill-opacity="0.35"/>
<rect x="59" y="214.3" width="2" height="1.2" fill="#9a9aa8" fill-opacity="0.5"/>
<rect x="61" y="214.3" width="1" height="1.2" fill="#9a9aa8" fill-opacity="0.35"/>
<rect x="62" y="214.3" width="2" height="1.2" fill="#9a9aa8" fill-opacity="0.6"/>
<rect x="64" y="214.3" width="1" height="1.2" fill="#9a9aa8" fill-opacity="0.6"/>
<rect x="4" y="216.9" width="3" height="1.2" fill="#9a9aa8" fill-opacity="0.35"/>
<rect x="7" y="216.9" width="1" height="1.2" fill="#9a9aa8" fill-opacity="0.6"/>
<rect x="8" y="216.9" width="2" height="1.2" fill="#9a9aa8" fill-opacity="0.6"/>
<rect x="10" y="216.9" width="2" height="1.2" fill="#9a9aa8" fill-opacity="0.75"/>
<rect x="13" y="216.9" width="3" height="1.2" fill="#9a9aa8" fill-opacity="0.75"/>
<rect x="17" y="216.9" width="2" height="1.2" fill="#9a9aa8" fill-opacity="0.5"/>
<rect x="19" y="216.9" width="2" height="1.2" fill="#9a9aa8" fill-opacity="0.6"/>
<rect x="21" y="216.9" width="1" height="1.2" fill="#9a9aa8" fill-opacity="0.75"/>
<rect x="22" y="216.9" width="1" height="1.2" fill="#9a9aa8" fill-opacity="0.35"/>
<rect x="23" y="216.9" width="2" height="1.2" fill="#9a9aa8" fill-opacity="0.75"/>
<rect x="25" y="216.9" width="2" height="1.2" fill="#9a9aa8" fill-opacity="0.6"/>
<rect x="27" y="216.9" width="2" height="1.2" fill="#9a9aa8" fill-opacity="0.6"/>
<rect x="29" y="216.9" width="2" height="1.2" fill="#9a9aa8" fill-opacity="0.35"/>
<rect x="31" y="216.9" width="3" height="1.2" fill="#9a9aa8" fill-opacity="0.35"/>
<rect x="34" y="216.9" width="2" height="1.2" fill="#9a9aa8" fill-opacity="0.75"/>
<rect x="36" y="216.9" width="2" height="1.2" fill="#9a9aa8" fill-opacity="0.35"/>
<rect x="38" y="216.9" width="2" height="1.2" fill="#9a9aa8" fill-opacity="0.35"/>
<rect x="41" y="216.9" width="2" height="1.2" fill="#9a9aa8" fill-opacity="0.6"/>
<rect x="44" y="216.9" width="1" height="1.2" fill="#9a9aa8" fill-opacity="0.5"/>
<rect x="45" y="216.9" width="1" height="1.2" fill="#9a9aa8" fill-opacity="0.75"/>
<rect x="46" y="216.9" width="3" height="1.2" fill="#9a9aa8" fill-opacity="0.35"/>
<rect x="49" y="216.9" width="2" height="1.2" fill="#9a9aa8" fill-opacity="0.35"/>
<rect x="52" y="216.9" width="3" height="1.2" fill="#9a9aa8" fill-opacity="0.5"/>
<rect x="55" y="216.9" width="1" height="1.2" fill="#9a9aa8" fill-opacity="0.75"/>
<rect x="56" y="216.9" width="1" height="1.2" fill="#9a9aa8" fill-opacity="0.75"/>
<rect x="57" y="216.9" width="3" height="1.2" fill="#9a9aa8" fill-opacity="0.75"/>
<rect x="60" y="216.9" width="1" height="1.2" fill="#9a9aa8" fill-opacity="0.6"/>
<rect x="62" y="216.9" width="2" height="1.2" fill="#9a9aa8" fill-opacity="0.75"/>
<rect x="64" y="216.9" width="3" height="1.2" fill="#9a9aa8" fill-opacity="0.5"/>
<rect x="4" y="219.4" width="3" height="1.2" fill="#9a9aa8" fill-opacity="0.35"/>
<rect x="7" y="219.4" width="3" height="1.2" fill="#9a9aa8" fill-opacity="0.35"/>
<rect x="8" y="222.0" width="2" height="1.2" fill="#9a9aa8" fill-opacity="0.35"/>
<rect x="10" y="222.0" width="3" height="1.2" fill="#9a9aa8" fill-opacity="0.5"/>
<rect x="13" y="222.0" width="2" height="1.2" fill="#9a9aa8" fill-opacity="0.5"/>
<rect x="15" y="222.0" width="2" height="1.2" fill="#9a9aa8" fill-opacity="0.35"/>
<rect x="17" y="222.0" width="3" height="1.2" fill="#9a9aa8" fill-opacity="0.6"/>
<rect x="20" y="222.0" width="2" height="1.2" fill="#9a9aa8" fill-opacity="0.35"/>
<rect x="22" y="222.0" width="2" height="1.2" fill="#9a9aa8" fill-opacity="0.5"/>
<rect x="25" y="222.0" width="3" height="1.2" fill="#9a9aa8" fill-opacity="0.6"/>
<rect x="28" y="222.0" width="1" height="1.2" fill="#9a9aa8" fill-opacity="0.75"/>
<rect x="29" y="222.0" width="3" height="1.2" fill="#9a9aa8" fill-opacity="0.75"/>
<rect x="32" y="222.0" width="3" height="1.2" fill="#9a9aa8" fill-opacity="0.35"/>
<rect x="34" y="222.0" width="3" height="1.2" fill="#9a9aa8" fill-opacity="0.35"/>
<rect x="37" y="222.0" width="1" height="1.2" fill="#9a9aa8" fill-opacity="0.75"/>
<rect x="38" y="222.0" width="2" height="1.2" fill="#9a9aa8" fill-opacity="0.5"/>
<rect x="40" y="222.0" width="2" height="1.2" fill="#9a9aa8" fill-opacity="0.5"/>
<rect x="42" y="222.0" width="1" height="1.2" fill="#9a9aa8" fill-opacity="0.75"/>
<rect x="43" y="222.0" width="2" height="1.2" fill="#9a9aa8" fill-opacity="0.35"/>
<rect x="46" y="222.0" width="1" height="1.2" fill="#9a9aa8" fill-opacity="0.6"/>
<rect x="47" y="222.0" width="3" height="1.2" fill="#9a9aa8" fill-opacity="0.35"/>
<rect x="50" y="222.0" width="1" height="1.2" fill="#9a9aa8" fill-opacity="0.6"/>
<rect x="51" y="222.0" width="2" height="1.2" fill="#9a9aa8" fill-opacity="0.75"/>
<rect x="53" y="222.0" width="3" height="1.2" fill="#9a9aa8" fill-opacity="0.75"/>
<rect x="56" y="222.0" width="2" height="1.2" fill="#9a9aa8" fill-opacity="0.5"/>
<rect x="58" y="222.0" width="3" height="1.2" fill="#9a9aa8" fill-opacity="0.6"/>
<rect x="61" y="222.0" width="1" height="1.2" fill="#9a9aa8" fill-opacity="0.5"/>
<rect x="8" y="224.6" width="3" height="1.2" fill="#9a9aa8" fill-opacity="0.75"/>
<rect x="11" y="224.6" width="3" height="1.2" fill="#9a9aa8" fill-opacity="0.6"/>
<rect x="14" y="224.6" width="3" height="1.2" fill="#9a9aa8" fill-opacity="0.6"/>
<rect x="18" y="224.6" width="3" height="1.2" fill="#9a9aa8" fill-opacity="0.35"/>
<rect x="21" y="224.6" width="1" height="1.2" fill="#9a9aa8" fill-opacity="0.35"/>
<rect x="22" y="224.6" width="1" height="1.2" fill="#9a9aa8" fill-opacity="0.35"/>
<rect x="23" y="224.6" width="3" height="1.2" fill="#9a9aa8" fill-opacity="0.5"/>
<rect x="25" y="224.6" width="1" height="1.2" fill="#9a9aa8" fill-opacity="0.35"/>
<rect x="26" y="224.6" width="1" height="1.2" fill="#9a9aa8" fill-opacity="0.6"/>
<rect x="27" y="224.6" width="3" height="1.2" fill="#9a9aa8" fill-opacity="0.35"/>
<rect x="29" y="224.6" width="2" height="1.2" fill="#9a9aa8" fill-opacity="0.75"/>
<rect x="31" y="224.6" width="1" height="1.2" fill="#9a9aa8" fill-opacity="0.6"/>
<rect x="32" y="224.6" width="3" height="1.2" fill="#9a9aa8" fill-opacity="0.6"/>
<rect x="35" y="224.6" width="3" height="1.2" fill="#9a9aa8" fill-opacity="0.6"/>
<rect x="39" y="224.6" width="1" height="1.2" fill="#9a9aa8" fill-opacity="0.5"/>
<rect x="40" y="224.6" width="2" height="1.2" fill="#9a9aa8" fill-opacity="0.5"/>
<rect x="42" y="224.6" width="1" height="1.2" fill="#9a9aa8" fill-opacity="0.5"/>
<rect x="43" y="224.6" width="3" height="1.2" fill="#9a9aa8" fill-opacity="0.35"/>
<rect x="46" y="224.6" width="1" height="1.2" fill="#9a9aa8" fill-opacity="0.75"/>
<rect x="47" y="224.6" width="3" height="1.2" fill="#9a9aa8" fill-opacity="0.6"/>
<rect x="50" y="224.6" width="3" height="1.2" fill="#9a9aa8" fill-opacity="0.35"/>
<rect x="52" y="224.6" width="1" height="1.2" fill="#9a9aa8" fill-opacity="0.75"/>
<rect x="53" y="224.6" width="1" height="1.2" fill="#9a9aa8" fill-opacity="0.75"/>
<rect x="55" y="224.6" width="3" height="1.2" fill="#9a9aa8" fill-opacity="0.75"/>
<rect x="4" y="227.2" width="2" height="1.2" fill="#9a9aa8" fill-opacity="0.35"/>
<rect x="2" y="232.3" width="3" height="1.2" fill="#9fcf95" fill-opacity="0.75"/>
<rect x="5" y="232.3" width="2" height="1.2" fill="#9fcf95" fill-opacity="0.5"/>
<rect x="7" y="232.3" width="1" height="1.2" fill="#9fcf95" fill-opacity="0.75"/>
<rect x="8" y="232.3" width="2" height="1.2" fill="#9fcf95" fill-opacity="0.35"/>
<rect x="11" y="232.3" width="1" height="1.2" fill="#9fcf95" fill-opacity="0.75"/>
<rect x="12" y="232.3" width="1" height="1.2" fill="#9fcf95" fill-opacity="0.5"/>
<rect x="13" y="232.3" width="1" height="1.2" fill="#9fcf95" fill-opacity="0.5"/>
<rect x="14" y="232.3" width="2" height="1.2" fill="#9fcf95" fill-opacity="0.5"/>
<rect x="16" y="232.3" width="1" height="1.2" fill="#9fcf95" fill-opacity="0.5"/>
<rect x="17" y="232.3" width="3" height="1.2" fill="#9fcf95" fill-opacity="0.6"/>
<rect x="20" y="232.3" width="3" height="1.2" fill="#9fcf95" fill-opacity="0.5"/>
<rect x="23" y="232.3" width="2" height="1.2" fill="#9fcf95" fill-opacity="0.35"/>
<rect x="25" y="232.3" width="2" height="1.2" fill="#9fcf95" fill-opacity="0.35"/>
<rect x="27" y="232.3" width="2" height="1.2" fill="#9fcf95" fill-opacity="0.35"/>
<rect x="29" y="232.3" width="3" height="1.2" fill="#9fcf95" fill-opacity="0.35"/>
<rect x="32" y="232.3" width="3" height="1.2" fill="#9fcf95" fill-opacity="0.75"/>
<rect x="35" y="232.3" width="3" height="1.2" fill="#9fcf95" fill-opacity="0.75"/>
<rect x="38" y="232.3" width="1" height="1.2" fill="#9fcf95" fill-opacity="0.75"/>
<rect x="39" y="232.3" width="2" height="1.2" fill="#9fcf95" fill-opacity="0.35"/>
<rect x="42" y="232.3" width="3" height="1.2" fill="#9fcf95" fill-opacity="0.5"/>
<rect x="45" y="232.3" width="3" height="1.2" fill="#9fcf95" fill-opacity="0.6"/>
<rect x="48" y="232.3" width="2" height="1.2" fill="#9fcf95" fill-opacity="0.35"/>
<rect x="50" y="232.3" width="1" height="1.2" fill="#9fcf95" fill-opacity="0.6"/>
<rect x="51" y="232.3" width="3" height="1.2" fill="#9fcf95" fill-opacity="0.75"/>
<rect x="54" y="232.3" width="3" height="1.2" fill="#9fcf95" fill-opacity="0.5"/>
<rect x="57" y="232.3" width="1" height="1.2" fill="#9fcf95" fill-opacity="0.5"/>
<rect x="58" y="232.3" width="2" height="1.2" fill="#9fcf95" fill-opacity="0.75"/>
<rect x="60" y="232.3" width="3" height="1.2" fill="#9fcf95" fill-opacity="0.35"/>
<rect x="64" y="232.3" width="2" height="1.2" fill="#9fcf95" fill-opacity="0.6"/>
<rect x="66" y="232.3" width="1" height="1.2" fill="#9fcf95" fill-opacity="0.75"/>
<rect x="67" y="232.3" width="2" height="1.2" fill="#9fcf95" fill-opacity="0.6"/>
<rect x="69" y="232.3" width="1" height="1.2" fill="#9fcf95" fill-opacity="0.35"/>
<rect x="70" y="232.3" width="3" height="1.2" fill="#9fcf95" fill-opacity="0.6"/>
<rect x="4" y="234.9" width="3" height="1.2" fill="#9a9aa8" fill-opacity="0.75"/>
<rect x="8" y="234.9" width="1" height="1.2" fill="#9a9aa8" fill-opacity="0.6"/>
<rect x="9" y="234.9" width="3" height="1.2" fill="#9a9aa8" fill-opacity="0.5"/>
<rect x="12" y="234.9" width="3" height="1.2" fill="#9a9aa8" fill-opacity="0.6"/>
<rect x="16" y="234.9" width="2" height="1.2" fill="#9a9aa8" fill-opacity="0.35"/>
<rect x="18" y="234.9" width="3" height="1.2" fill="#9a9aa8" fill-opacity="0.6"/>
<rect x="22" y="234.9" width="3" height="1.2" fill="#9a9aa8" fill-opacity="0.6"/>
<rect x="25" y="234.9" width="2" height="1.2" fill="#9a9aa8" fill-opacity="0.75"/>
<rect x="27" y="234.9" width="3" height="1.2" fill="#9a9aa8" fill-opacity="0.6"/>
<rect x="31" y="234.9" width="2" height="1.2" fill="#9a9aa8" fill-opacity="0.35"/>
<rect x="33" y="234.9" width="2" height="1.2" fill="#9a9aa8" fill-opacity="0.6"/>
<rect x="35" y="234.9" width="2" height="1.2" fill="#9a9aa8" fill-opacity="0.5"/>
<rect x="37" y="234.9" width="2" height="1.2" fill="#9a9aa8" fill-opacity="0.75"/>
<rect x="39" y="234.9" width="1" height="1.2" fill="#9a9aa8" fill-opacity="0.6"/>
<rect x="40" y="234.9" width="1" height="1.2" fill="#9a9aa8" fill-opacity="0.5"/>
<rect x="42" y="234.9" width="3" height="1.2" fill="#9a9aa8" fill-opacity="0.5"/>
<rect x="46" y="234.9" width="1" height="1.2" fill="#9a9aa8" fill-opacity="0.75"/>
<rect x="47" y="234.9" width="3" height="1.2" fill="#9a9aa8" fill-opacity="0.75"/>
<rect x="50" y="234.9" width="1" height="1.2" fill="#9a9aa8" fill-opacity="0.75"/>
<rect x="51" y="234.9" width="2" height="1.2" fill="#9a9aa8" fill-opacity="0.6"/>
<rect x="53" y="234.9" width="1" height="1.2" fill="#9a9aa8" fill-opacity="0.75"/>
<rect x="54" y="234.9" width="2" height="1.2" fill="#9a9aa8" fill-opacity="0.35"/>
<rect x="56" y="234.9" width="3" height="1.2" fill="#9a9aa8" fill-opacity="0.35"/>
<rect x="58" y="234.9" width="1" height="1.2" fill="#9a9aa8" fill-opacity="0.5"/>
<rect x="59" y="234.9" width="1" height="1.2" fill="#9a9aa8" fill-opacity="0.6"/>
<rect x="6" y="237.4" width="3" height="1.2" fill="#9a9aa8" fill-opacity="0.5"/>
<rect x="9" y="237.4" width="3" height="1.2" fill="#9a9aa8" fill-opacity="0.6"/>
<rect x="12" y="237.4" width="2" height="1.2" fill="#9a9aa8" fill-opacity="0.35"/>
<rect x="14" y="237.4" width="3" height="1.2" fill="#9a9aa8" fill-opacity="0.35"/>
<rect x="17" y="237.4" width="2" height="1.2" fill="#9a9aa8" fill-opacity="0.35"/>
<rect x="19" y="237.4" width="3" height="1.2" fill="#9a9aa8" fill-opacity="0.5"/>
<rect x="22" y="237.4" width="1" height="1.2" fill="#9a9aa8" fill-opacity="0.35"/>
<rect x="23" y="237.4" width="1" height="1.2" fill="#9a9aa8" fill-opacity="0.35"/>
<rect x="24" y="237.4" width="3" height="1.2" fill="#9a9aa8" fill-opacity="0.75"/>
<rect x="26" y="237.4" width="2" height="1.2" fill="#9a9aa8" fill-opacity="0.35"/>
<rect x="28" y="237.4" width="2" height="1.2" fill="#9a9aa8" fill-opacity="0.6"/>
<rect x="30" y="237.4" width="1" height="1.2" fill="#9a9aa8" fill-opacity="0.35"/>
<rect x="31" y="237.4" width="2" height="1.2" fill="#9a9aa8" fill-opacity="0.35"/>
<rect x="6" y="240.0" width="2" height="1.2" fill="#9a9aa8" fill-opacity="0.5"/>
<rect x="8" y="240.0" width="2" height="1.2" fill="#9a9aa8" fill-opacity="0.6"/>
<rect x="10" y="240.0" width="2" height="1.2" fill="#9a9aa8" fill-opacity="0.6"/>
<rect x="12" y="240.0" width="2" height="1.2" fill="#9a9aa8" fill-opacity="0.35"/>
<rect x="15" y="240.0" width="2" height="1.2" fill="#9a9aa8" fill-opacity="0.5"/>
<rect x="17" y="240.0" width="1" height="1.2" fill="#9a9aa8" fill-opacity="0.35"/>
<rect x="18" y="240.0" width="1" height="1.2" fill="#9a9aa8" fill-opacity="0.35"/>
<rect x="19" y="240.0" width="3" height="1.2" fill="#9a9aa8" fill-opacity="0.75"/>
<rect x="22" y="240.0" width="1" height="1.2" fill="#9a9aa8" fill-opacity="0.75"/>
<rect x="24" y="240.0" width="1" height="1.2" fill="#9a9aa8" fill-opacity="0.6"/>
<rect x="25" y="240.0" width="3" height="1.2" fill="#9a9aa8" fill-opacity="0.75"/>
<rect x="29" y="240.0" width="2" height="1.2" fill="#9a9aa8" fill-opacity="0.5"/>
<rect x="2" y="242.6" width="1" height="1.2" fill="#9a9aa8" fill-opacity="0.35"/>
<rect x="3" y="242.6" width="1" height="1.2" fill="#9a9aa8" fill-opacity="0.75"/>
<rect x="2" y="247.7" width="2" height="1.2" fill="#9a9aa8" fill-opacity="0.6"/>
<rect x="4" y="247.7" width="2" height="1.2" fill="#9a9aa8" fill-opacity="0.5"/>
<rect x="6" y="247.7" width="3" height="1.2" fill="#9a9aa8" fill-opacity="0.75"/>
<rect x="9" y="247.7" width="1" height="1.2" fill="#9a9aa8" fill-opacity="0.75"/>
<rect x="11" y="247.7" width="2" height="1.2" fill="#9a9aa8" fill-opacity="0.35"/>
<rect x="14" y="247.7" width="3" height="1.2" fill="#9a9aa8" fill-opacity="0.5"/>
<rect x="17" y="247.7" width="1" height="1.2" fill="#9a9aa8" fill-opacity="0.6"/>
<rect x="18" y="247.7" width="3" height="1.2" fill="#9a9aa8" fill-opacity="0.5"/>
<rect x="20" y="247.7" width="2" height="1.2" fill="#9a9aa8" fill-opacity="0.5"/>
<rect x="22" y="247.7" width="3" height="1.2" fill="#9a9aa8" fill-opacity="0.75"/>
<rect x="26" y="247.7" width="1" height="1.2" fill="#9a9aa8" fill-opacity="0.75"/>
<rect x="27" y="247.7" width="1" height="1.2" fill="#9a9aa8" fill-opacity="0.6"/>
<rect x="28" y="247.7" width="1" height="1.2" fill="#9a9aa8" fill-opacity="0.35"/>
<rect x="30" y="247.7" width="2" height="1.2" fill="#9a9aa8" fill-opacity="0.35"/>
<rect x="2" y="250.3" width="2" height="1.2" fill="#9a9aa8" fill-opacity="0.35"/>
<rect x="6" y="252.8" width="3" height="1.2" fill="#9a9aa8" fill-opacity="0.5"/>
<rect x="9" y="252.8" width="1" height="1.2" fill="#9a9aa8" fill-opacity="0.6"/>
<rect x="10" y="252.8" width="3" height="1.2" fill="#9a9aa8" fill-opacity="0.6"/>
<rect x="12" y="252.8" width="1" height="1.2" fill="#9a9aa8" fill-opacity="0.75"/>
<rect x="13" y="252.8" width="1" height="1.2" fill="#9a9aa8" fill-opacity="0.6"/>
<rect x="15" y="252.8" width="1" height="1.2" fill="#9a9aa8" fill-opacity="0.5"/>
<rect x="16" y="252.8" width="3" height="1.2" fill="#9a9aa8" fill-opacity="0.75"/>
<rect x="19" y="252.8" width="2" height="1.2" fill="#9a9aa8" fill-opacity="0.35"/>
<rect x="21" y="252.8" width="3" height="1.2" fill="#9a9aa8" fill-opacity="0.75"/>
<rect x="25" y="252.8" width="1" height="1.2" fill="#9a9aa8" fill-opacity="0.75"/>
<rect x="26" y="252.8" width="1" height="1.2" fill="#9a9aa8" fill-opacity="0.75"/>
<rect x="27" y="252.8" width="1" height="1.2" fill="#9a9aa8" fill-opacity="0.5"/>
<rect x="28" y="252.8" width="1" height="1.2" fill="#9a9aa8" fill-opacity="0.75"/>
<rect x="29" y="252.8" width="2" height="1.2" fill="#9a9aa8" fill-opacity="0.5"/>
<rect x="31" y="252.8" width="3" height="1.2" fill="#9a9aa8" fill-opacity="0.35"/>
<rect x="6" y="255.4" width="1" height="1.2" fill="#9a9aa8" fill-opacity="0.35"/>
<rect x="7" y="255.4" width="1" height="1.2" fill="#9a9aa8" fill-opacity="0.75"/>
<rect x="8" y="255.4" width="3" height="1.2" fill="#9a9aa8" fill-opacity="0.75"/>
<rect x="11" y="255.4" width="1" height="1.2" fill="#9a9aa8" fill-opacity="0.5"/>
<rect x="12" y="255.4" width="1" height="1.2" fill="#9a9aa8" fill-opacity="0.75"/>
<rect x="13" y="255.4" width="3" height="1.2" fill="#9a9aa8" fill-opacity="0.5"/>
<rect x="15" y="255.4" width="1" height="1.2" fill="#9a9aa8" fill-opacity="0.5"/>
<rect x="16" y="255.4" width="2" height="1.2" fill="#9a9aa8" fill-opacity="0.35"/>
<rect x="18" y="255.4" width="3" height="1.2" fill="#9a9aa8" fill-opacity="0.75"/>
<rect x="21" y="255.4" width="2" height="1.2" fill="#9a9aa8" fill-opacity="0.35"/>
<rect x="23" y="255.4" width="3" height="1.2" fill="#9a9aa8" fill-opacity="0.35"/>
<rect x="26" y="255.4" width="2" height="1.2" fill="#9a9aa8" fill-opacity="0.5"/>
<rect x="28" y="255.4" width="1" height="1.2" fill="#9a9aa8" fill-opacity="0.6"/>
<rect x="29" y="255.4" width="3" height="1.2" fill="#9a9aa8" fill-opacity="0.5"/>
<rect x="31" y="255.4" width="2" height="1.2" fill="#9a9aa8" fill-opacity="0.75"/>
<rect x="33" y="255.4" width="1" height="1.2" fill="#9a9aa8" fill-opacity="0.75"/>
<rect x="34" y="255.4" width="2" height="1.2" fill="#9a9aa8" fill-opacity="0.35"/>
<rect x="2" y="258.0" width="2" height="1.2" fill="#9a9aa8" fill-opacity="0.5"/>
<rect x="2" y="263.1" width="1" height="1.2" fill="#9a9aa8" fill-opacity="0.75"/>
<rect x="3" y="263.1" width="2" height="1.2" fill="#9a9aa8" fill-opacity="0.75"/>
<rect x="5" y="263.1" width="2" height="1.2" fill="#9a9aa8" fill-opacity="0.5"/>
<rect x="8" y="263.1" width="2" height="1.2" fill="#9a9aa8" fill-opacity="0.75"/>
<rect x="10" y="263.1" width="2" height="1.2" fill="#9a9aa8" fill-opacity="0.5"/>
<rect x="12" y="263.1" width="2" height="1.2" fill="#9a9aa8" fill-opacity="0.6"/>
<rect x="15" y="263.1" width="3" height="1.2" fill="#9a9aa8" fill-opacity="0.35"/>
<rect x="18" y="263.1" width="3" height="1.2" fill="#9a9aa8" fill-opacity="0.5"/>
<rect x="21" y="263.1" width="3" height="1.2" fill="#9a9aa8" fill-opacity="0.35"/>
<rect x="24" y="263.1" width="2" height="1.2" fill="#9a9aa8" fill-opacity="0.75"/>
<rect x="27" y="263.1" width="2" height="1.2" fill="#9a9aa8" fill-opacity="0.75"/>
<rect x="2" y="265.7" width="2" height="1.2" fill="#9a9aa8" fill-opacity="0.75"/>
<rect x="4" y="268.3" width="3" height="1.2" fill="#9a9aa8" fill-opacity="0.75"/>
<rect x="7" y="268.3" width="1" height="1.2" fill="#9a9aa8" fill-opacity="0.75"/>
<rect x="8" y="268.3" width="3" height="1.2" fill="#9a9aa8" fill-opacity="0.35"/>
<rect x="11" y="268.3" width="1" height="1.2" fill="#9a9aa8" fill-opacity="0.35"/>
<rect x="6" y="270.8" width="2" height="1.2" fill="#9a9aa8" fill-opacity="0.35"/>
<rect x="8" y="270.8" width="1" height="1.2" fill="#9a9aa8" fill-opacity="0.35"/>
<rect x="9" y="270.8" width="1" height="1.2" fill="#9a9aa8" fill-opacity="0.35"/>
<rect x="10" y="270.8" width="2" height="1.2" fill="#9a9aa8" fill-opacity="0.5"/>
<rect x="12" y="270.8" width="2" height="1.2" fill="#9a9aa8" fill-opacity="0.35"/>
<rect x="14" y="270.8" width="1" height="1.2" fill="#9a9aa8" fill-opacity="0.5"/>
<rect x="15" y="270.8" width="2" height="1.2" fill="#9a9aa8" fill-opacity="0.75"/>
<rect x="12" y="273.4" width="1" height="1.2" fill="#9a9aa8" fill-opacity="0.6"/>
<rect x="13" y="273.4" width="1" height="1.2" fill="#9a9aa8" fill-opacity="0.35"/>
<rect x="14" y="273.4" width="1" height="1.2" fill="#9a9aa8" fill-opacity="0.6"/>
<rect x="15" y="273.4" width="2" height="1.2" fill="#9a9aa8" fill-opacity="0.5"/>
<rect x="17" y="273.4" width="2" height="1.2" fill="#9a9aa8" fill-opacity="0.5"/>
<rect x="19" y="273.4" width="1" height="1.2" fill="#9a9aa8" fill-opacity="0.35"/>
<rect x="20" y="273.4" width="2" height="1.2" fill="#9a9aa8" fill-opacity="0.35"/>
<rect x="22" y="273.4" width="1" height="1.2" fill="#9a9aa8" fill-opacity="0.75"/>
<rect x="24" y="273.4" width="3" height="1.2" fill="#9a9aa8" fill-opacity="0.35"/>
<rect x="12" y="276.0" width="1" height="1.2" fill="#9a9aa8" fill-opacity="0.5"/>
<rect x="13" y="276.0" width="3" height="1.2" fill="#9a9aa8" fill-opacity="0.6"/>
<rect x="16" y="276.0" width="3" height="1.2" fill="#9a9aa8" fill-opacity="0.6"/>
<rect x="18" y="276.0" width="1" height="1.2" fill="#9a9aa8" fill-opacity="0.6"/>
<rect x="19" y="276.0" width="3" height="1.2" fill="#9a9aa8" fill-opacity="0.5"/>
<rect x="22" y="276.0" width="3" height="1.2" fill="#9a9aa8" fill-opacity="0.6"/>
<rect x="25" y="276.0" width="3" height="1.2" fill="#9a9aa8" fill-opacity="0.35"/>
<rect x="28" y="276.0" width="2" height="1.2" fill="#9a9aa8" fill-opacity="0.35"/>
<rect x="12" y="278.5" width="3" height="1.2" fill="#9a9aa8" fill-opacity="0.5"/>
<rect x="15" y="278.5" width="1" height="1.2" fill="#9a9aa8" fill-opacity="0.35"/>
<rect x="16" y="278.5" width="1" height="1.2" fill="#9a9aa8" fill-opacity="0.5"/>
<rect x="17" y="278.5" width="2" height="1.2" fill="#9a9aa8" fill-opacity="0.6"/>
<rect x="19" y="278.5" width="1" height="1.2" fill="#9a9aa8" fill-opacity="0.6"/>
<rect x="21" y="278.5" width="3" height="1.2" fill="#9a9aa8" fill-opacity="0.5"/>
<rect x="24" y="278.5" width="3" height="1.2" fill="#9a9aa8" fill-opacity="0.5"/>
<rect x="27" y="278.5" width="3" height="1.2" fill="#9a9aa8" fill-opacity="0.5"/>
<rect x="12" y="281.1" width="2" height="1.2" fill="#9a9aa8" fill-opacity="0.6"/>
<rect x="14" y="281.1" width="1" height="1.2" fill="#9a9aa8" fill-opacity="0.75"/>
<rect x="16" y="281.1" width="3" height="1.2" fill="#9a9aa8" fill-opacity="0.5"/>
<rect x="19" y="281.1" width="3" height="1.2" fill="#9a9aa8" fill-opacity="0.35"/>
<rect x="21" y="281.1" width="2" height="1.2" fill="#9a9aa8" fill-opacity="0.35"/>
<rect x="23" y="281.1" width="2" height="1.2" fill="#9a9aa8" fill-opacity="0.5"/>
<rect x="25" y="281.1" width="3" height="1.2" fill="#9a9aa8" fill-opacity="0.6"/>
<rect x="27" y="281.1" width="3" height="1.2" fill="#9a9aa8" fill-opacity="0.35"/>
<rect x="30" y="281.1" width="3" height="1.2" fill="#9a9aa8" fill-opacity="0.5"/>
<rect x="6" y="283.7" width="3" height="1.2" fill="#9a9aa8" fill-opacity="0.75"/>
<rect x="2" y="286.3" width="1" height="1.2" fill="#9a9aa8" fill-opacity="0.75"/>
<rect x="3" y="286.3" width="3" height="1.2" fill="#9a9aa8" fill-opacity="0.75"/>
<rect x="2" y="294.0" width="1" height="1.2" fill="#9aa0e0" fill-opacity="0.5"/>
<rect x="3" y="294.0" width="3" height="1.2" fill="#9aa0e0" fill-opacity="0.6"/>
<rect x="6" y="294.0" width="1" height="1.2" fill="#9aa0e0" fill-opacity="0.35"/>
<rect x="7" y="294.0" width="1" height="1.2" fill="#9aa0e0" fill-opacity="0.35"/>
<rect x="8" y="294.0" width="1" height="1.2" fill="#9aa0e0" fill-opacity="0.5"/>
<rect x="9" y="294.0" width="3" height="1.2" fill="#9aa0e0" fill-opacity="0.75"/>
<rect x="12" y="294.0" width="2" height="1.2" fill="#9aa0e0" fill-opacity="0.5"/>
<rect x="14" y="294.0" width="3" height="1.2" fill="#9aa0e0" fill-opacity="0.75"/>
<rect x="17" y="294.0" width="3" height="1.2" fill="#9aa0e0" fill-opacity="0.5"/>
<rect x="2" y="296.5" width="2" height="1.2" fill="#9a9aa8" fill-opacity="0.6"/>
<rect x="4" y="299.1" width="2" height="1.2" fill="#9fcf95" fill-opacity="0.6"/>
<rect x="6" y="299.1" width="2" height="1.2" fill="#9fcf95" fill-opacity="0.75"/>
<rect x="8" y="299.1" width="3" height="1.2" fill="#9fcf95" fill-opacity="0.5"/>
<rect x="11" y="299.1" width="1" height="1.2" fill="#9fcf95" fill-opacity="0.75"/>
<rect x="12" y="299.1" width="3" height="1.2" fill="#9fcf95" fill-opacity="0.6"/>
<rect x="15" y="299.1" width="3" height="1.2" fill="#9fcf95" fill-opacity="0.5"/>
<rect x="19" y="299.1" width="2" height="1.2" fill="#9fcf95" fill-opacity="0.35"/>
<rect x="21" y="299.1" width="1" height="1.2" fill="#9fcf95" fill-opacity="0.35"/>
<rect x="22" y="299.1" width="2" height="1.2" fill="#9fcf95" fill-opacity="0.5"/>
<rect x="24" y="299.1" width="2" height="1.2" fill="#9fcf95" fill-opacity="0.75"/>
<rect x="26" y="299.1" width="3" height="1.2" fill="#9fcf95" fill-opacity="0.6"/>
<rect x="28" y="299.1" width="3" height="1.2" fill="#9fcf95" fill-opacity="0.6"/>
<rect x="31" y="299.1" width="1" height="1.2" fill="#9fcf95" fill-opacity="0.35"/>
<rect x="32" y="299.1" width="2" height="1.2" fill="#9fcf95" fill-opacity="0.75"/>
<rect x="34" y="299.1" width="3" height="1.2" fill="#9fcf95" fill-opacity="0.75"/>
<rect x="37" y="299.1" width="3" height="1.2" fill="#9fcf95" fill-opacity="0.5"/>
<rect x="41" y="299.1" width="3" height="1.2" fill="#9fcf95" fill-opacity="0.6"/>
<rect x="6" y="304.2" width="1" height="1.2" fill="#9a9aa8" fill-opacity="0.5"/>
<rect x="7" y="304.2" width="3" height="1.2" fill="#9a9aa8" fill-opacity="0.5"/>
<rect x="9" y="304.2" width="3" height="1.2" fill="#9a9aa8" fill-opacity="0.5"/>
<rect x="12" y="304.2" width="2" height="1.2" fill="#9a9aa8" fill-opacity="0.35"/>
<rect x="14" y="304.2" width="2" height="1.2" fill="#9a9aa8" fill-opacity="0.35"/>
<rect x="16" y="304.2" width="3" height="1.2" fill="#9a9aa8" fill-opacity="0.5"/>
<rect x="19" y="304.2" width="2" height="1.2" fill="#9a9aa8" fill-opacity="0.35"/>
<rect x="21" y="304.2" width="3" height="1.2" fill="#9a9aa8" fill-opacity="0.75"/>
<rect x="24" y="304.2" width="1" height="1.2" fill="#9a9aa8" fill-opacity="0.6"/>
<rect x="25" y="304.2" width="2" height="1.2" fill="#9a9aa8" fill-opacity="0.75"/>
<rect x="27" y="304.2" width="1" height="1.2" fill="#9a9aa8" fill-opacity="0.75"/>
<rect x="28" y="304.2" width="3" height="1.2" fill="#9a9aa8" fill-opacity="0.35"/>
<rect x="31" y="304.2" width="3" height="1.2" fill="#9a9aa8" fill-opacity="0.75"/>
<rect x="34" y="304.2" width="1" height="1.2" fill="#9a9aa8" fill-opacity="0.6"/>
<rect x="35" y="304.2" width="2" height="1.2" fill="#9a9aa8" fill-opacity="0.35"/>
<rect x="37" y="304.2" width="3" height="1.2" fill="#9a9aa8" fill-opacity="0.5"/>
<rect x="40" y="304.2" width="2" height="1.2" fill="#9a9aa8" fill-opacity="0.6"/>
<rect x="42" y="304.2" width="2" height="1.2" fill="#9a9aa8" fill-opacity="0.5"/>
<rect x="44" y="304.2" width="2" height="1.2" fill="#9a9aa8" fill-opacity="0.5"/>
<rect x="46" y="304.2" width="1" height="1.2" fill="#9a9aa8" fill-opacity="0.75"/>
<rect x="47" y="304.2" width="1" height="1.2" fill="#9a9aa8" fill-opacity="0.75"/>
<rect x="49" y="304.2" width="3" height="1.2" fill="#9a9aa8" fill-opacity="0.6"/>
<rect x="52" y="304.2" width="2" height="1.2" fill="#9a9aa8" fill-opacity="0.75"/>
<rect x="54" y="304.2" width="3" height="1.2" fill="#9a9aa8" fill-opacity="0.5"/>
<rect x="57" y="304.2" width="3" height="1.2" fill="#9a9aa8" fill-opacity="0.6"/>
<rect x="6" y="306.8" width="3" height="1.2" fill="#9fcf95" fill-opacity="0.75"/>
<rect x="9" y="306.8" width="2" height="1.2" fill="#9fcf95" fill-opacity="0.6"/>
<rect x="11" y="306.8" width="3" height="1.2" fill="#9fcf95" fill-opacity="0.6"/>
<rect x="15" y="306.8" width="2" height="1.2" fill="#9fcf95" fill-opacity="0.75"/>
<rect x="17" y="306.8" width="2" height="1.2" fill="#9fcf95" fill-opacity="0.75"/>
<rect x="19" y="306.8" width="3" height="1.2" fill="#9fcf95" fill-opacity="0.5"/>
<rect x="22" y="306.8" width="3" height="1.2" fill="#9fcf95" fill-opacity="0.75"/>
<rect x="24" y="306.8" width="1" height="1.2" fill="#9fcf95" fill-opacity="0.5"/>
<rect x="25" y="306.8" width="3" height="1.2" fill="#9fcf95" fill-opacity="0.5"/>
<rect x="28" y="306.8" width="1" height="1.2" fill="#9fcf95" fill-opacity="0.6"/>
<rect x="29" y="306.8" width="1" height="1.2" fill="#9fcf95" fill-opacity="0.35"/>
<rect x="30" y="306.8" width="3" height="1.2" fill="#9fcf95" fill-opacity="0.35"/>
<rect x="33" y="306.8" width="2" height="1.2" fill="#9fcf95" fill-opacity="0.35"/>
<rect x="35" y="306.8" width="2" height="1.2" fill="#9fcf95" fill-opacity="0.35"/>
<rect x="37" y="306.8" width="2" height="1.2" fill="#9fcf95" fill-opacity="0.35"/>
<rect x="40" y="306.8" width="2" height="1.2" fill="#9fcf95" fill-opacity="0.35"/>
<rect x="42" y="306.8" width="3" height="1.2" fill="#9fcf95" fill-opacity="0.35"/>
<rect x="45" y="306.8" width="2" height="1.2" fill="#9fcf95" fill-opacity="0.75"/>
<rect x="47" y="306.8" width="2" height="1.2" fill="#9fcf95" fill-opacity="0.5"/>
<rect x="49" y="306.8" width="3" height="1.2" fill="#9fcf95" fill-opacity="0.35"/>
<rect x="52" y="306.8" width="1" height="1.2" fill="#9fcf95" fill-opacity="0.5"/>
<rect x="54" y="306.8" width="2" height="1.2" fill="#9fcf95" fill-opacity="0.6"/>
<rect x="56" y="306.8" width="2" height="1.2" fill="#9fcf95" fill-opacity="0.35"/>
<rect x="58" y="306.8" width="2" height="1.2" fill="#9fcf95" fill-opacity="0.75"/>
<rect x="60" y="306.8" width="2" height="1.2" fill="#9fcf95" fill-opacity="0.5"/>
<rect x="6" y="309.4" width="2" height="1.2" fill="#9a9aa8" fill-opacity="0.6"/>
<rect x="8" y="309.4" width="1" height="1.2" fill="#9a9aa8" fill-opacity="0.35"/>
<rect x="9" y="309.4" width="1" height="1.2" fill="#9a9aa8" fill-opacity="0.5"/>
<rect x="10" y="309.4" width="1" height="1.2" fill="#9a9aa8" fill-opacity="0.5"/>
<rect x="11" y="309.4" width="2" height="1.2" fill="#9a9aa8" fill-opacity="0.75"/>
<rect x="13" y="309.4" width="3" height="1.2" fill="#9a9aa8" fill-opacity="0.35"/>
<rect x="16" y="309.4" width="1" height="1.2" fill="#9a9aa8" fill-opacity="0.6"/>
<rect x="17" y="309.4" width="1" height="1.2" fill="#9a9aa8" fill-opacity="0.6"/>
<rect x="18" y="309.4" width="1" height="1.2" fill="#9a9aa8" fill-opacity="0.75"/>
<rect x="19" y="309.4" width="2" height="1.2" fill="#9a9aa8" fill-opacity="0.5"/>
<rect x="22" y="309.4" width="3" height="1.2" fill="#9a9aa8" fill-opacity="0.5"/>
<rect x="25" y="309.4" width="2" height="1.2" fill="#9a9aa8" fill-opacity="0.35"/>
<rect x="6" y="312.0" width="1" height="1.2" fill="#9a9aa8" fill-opacity="0.35"/>
<rect x="7" y="312.0" width="1" height="1.2" fill="#9a9aa8" fill-opacity="0.35"/>
<rect x="9" y="312.0" width="2" height="1.2" fill="#9a9aa8" fill-opacity="0.75"/>
<rect x="11" y="312.0" width="2" height="1.2" fill="#9a9aa8" fill-opacity="0.5"/>
<rect x="13" y="312.0" width="2" height="1.2" fill="#9a9aa8" fill-opacity="0.5"/>
<rect x="15" y="312.0" width="3" height="1.2" fill="#9a9aa8" fill-opacity="0.5"/>
<rect x="18" y="312.0" width="3" height="1.2" fill="#9a9aa8" fill-opacity="0.75"/>
<rect x="21" y="312.0" width="3" height="1.2" fill="#9a9aa8" fill-opacity="0.5"/>
<rect x="25" y="312.0" width="1" height="1.2" fill="#9a9aa8" fill-opacity="0.5"/>
<rect x="26" y="312.0" width="1" height="1.2" fill="#9a9aa8" fill-opacity="0.5"/>
<rect x="28" y="312.0" width="3" height="1.2" fill="#9a9aa8" fill-opacity="0.6"/>
<rect x="31" y="312.0" width="2" height="1.2" fill="#9a9aa8" fill-opacity="0.35"/>
<rect x="33" y="312.0" width="2" height="1.2" fill="#9a9aa8" fill-opacity="0.75"/>
<rect x="35" y="312.0" width="2" height="1.2" fill="#9a9aa8" fill-opacity="0.35"/>
<rect x="37" y="312.0" width="2" height="1.2" fill="#9a9aa8" fill-opacity="0.75"/>
<rect x="39" y="312.0" width="2" height="1.2" fill="#9a9aa8" fill-opacity="0.35"/>
<rect x="41" y="312.0" width="3" height="1.2" fill="#9a9aa8" fill-opacity="0.6"/>
<rect x="44" y="312.0" width="3" height="1.2" fill="#9a9aa8" fill-opacity="0.75"/>
<rect x="47" y="312.0" width="2" height="1.2" fill="#9a9aa8" fill-opacity="0.35"/>
<rect x="50" y="312.0" width="2" height="1.2" fill="#9a9aa8" fill-opacity="0.75"/>
<rect x="52" y="312.0" width="1" height="1.2" fill="#9a9aa8" fill-opacity="0.6"/>
<rect x="53" y="312.0" width="1" height="1.2" fill="#9a9aa8" fill-opacity="0.75"/>
<rect x="54" y="312.0" width="2" height="1.2" fill="#9a9aa8" fill-opacity="0.5"/>
<rect x="56" y="312.0" width="2" height="1.2" fill="#9a9aa8" fill-opacity="0.6"/>
<rect x="58" y="312.0" width="2" height="1.2" fill="#9a9aa8" fill-opacity="0.35"/>
<rect x="61" y="312.0" width="2" height="1.2" fill="#9a9aa8" fill-opacity="0.75"/>
<rect x="63" y="312.0" width="3" height="1.2" fill="#9a9aa8" fill-opacity="0.75"/>
<rect x="67" y="312.0" width="2" height="1.2" fill="#9a9aa8" fill-opacity="0.35"/>
<rect x="69" y="312.0" width="2" height="1.2" fill="#9a9aa8" fill-opacity="0.75"/>
<rect x="71" y="312.0" width="3" height="1.2" fill="#9a9aa8" fill-opacity="0.6"/>
<rect x="74" y="312.0" width="2" height="1.2" fill="#9a9aa8" fill-opacity="0.75"/>
<rect x="76" y="312.0" width="3" height="1.2" fill="#9a9aa8" fill-opacity="0.75"/>
<rect x="78" y="312.0" width="3" height="1.2" fill="#9a9aa8" fill-opacity="0.6"/>
<rect x="82" y="312.0" width="3" height="1.2" fill="#9a9aa8" fill-opacity="0.35"/>
<rect x="85" y="312.0" width="2" height="1.2" fill="#9a9aa8" fill-opacity="0.5"/>
<rect x="87" y="312.0" width="3" height="1.2" fill="#9a9aa8" fill-opacity="0.35"/>
<rect x="90" y="312.0" width="1" height="1.2" fill="#9a9aa8" fill-opacity="0.6"/>
<rect x="92" y="312.0" width="3" height="1.2" fill="#9a9aa8" fill-opacity="0.35"/>
<rect x="95" y="312.0" width="3" height="1.2" fill="#9a9aa8" fill-opacity="0.75"/>
<rect x="98" y="312.0" width="3" height="1.2" fill="#9a9aa8" fill-opacity="0.5"/>
<rect x="100" y="312.0" width="3" height="1.2" fill="#9a9aa8" fill-opacity="0.75"/>
<rect x="6" y="314.5" width="1" height="1.2" fill="#9a9aa8" fill-opacity="0.5"/>
<rect x="7" y="314.5" width="2" height="1.2" fill="#9a9aa8" fill-opacity="0.35"/>
<rect x="9" y="314.5" width="3" height="1.2" fill="#9a9aa8" fill-opacity="0.5"/>
<rect x="12" y="314.5" width="3" height="1.2" fill="#9a9aa8" fill-opacity="0.5"/>
<rect x="15" y="314.5" width="1" height="1.2" fill="#9a9aa8" fill-opacity="0.35"/>
<rect x="16" y="314.5" width="1" height="1.2" fill="#9a9aa8" fill-opacity="0.6"/>
<rect x="17" y="314.5" width="3" height="1.2" fill="#9a9aa8" fill-opacity="0.75"/>
<rect x="20" y="314.5" width="2" height="1.2" fill="#9a9aa8" fill-opacity="0.75"/>
<rect x="23" y="314.5" width="3" height="1.2" fill="#9a9aa8" fill-opacity="0.75"/>
<rect x="6" y="317.1" width="2" height="1.2" fill="#9a9aa8" fill-opacity="0.5"/>
<rect x="8" y="317.1" width="1" height="1.2" fill="#9a9aa8" fill-opacity="0.5"/>
<rect x="9" y="317.1" width="3" height="1.2" fill="#9a9aa8" fill-opacity="0.35"/>
<rect x="12" y="317.1" width="1" height="1.2" fill="#9a9aa8" fill-opacity="0.6"/>
<rect x="13" y="317.1" width="1" height="1.2" fill="#9a9aa8" fill-opacity="0.5"/>
<rect x="14" y="317.1" width="3" height="1.2" fill="#9a9aa8" fill-opacity="0.75"/>
<rect x="17" y="317.1" width="2" height="1.2" fill="#9a9aa8" fill-opacity="0.75"/>
<rect x="19" y="317.1" width="1" height="1.2" fill="#9a9aa8" fill-opacity="0.5"/>
<rect x="20" y="317.1" width="2" height="1.2" fill="#9a9aa8" fill-opacity="0.35"/>
<rect x="22" y="317.1" width="1" height="1.2" fill="#9a9aa8" fill-opacity="0.6"/>
<rect x="23" y="317.1" width="2" height="1.2" fill="#9a9aa8" fill-opacity="0.6"/>
<rect x="25" y="317.1" width="3" height="1.2" fill="#9a9aa8" fill-opacity="0.75"/>
<rect x="6" y="322.2" width="3" height="1.2" fill="#9fcf95" fill-opacity="0.35"/>
<rect x="9" y="322.2" width="3" height="1.2" fill="#9fcf95" fill-opacity="0.75"/>
<rect x="12" y="322.2" width="2" height="1.2" fill="#9fcf95" fill-opacity="0.75"/>
<rect x="14" y="322.2" width="3" height="1.2" fill="#9fcf95" fill-opacity="0.6"/>
<rect x="18" y="322.2" width="1" height="1.2" fill="#9fcf95" fill-opacity="0.6"/>
<rect x="19" y="322.2" width="2" height="1.2" fill="#9fcf95" fill-opacity="0.5"/>
<rect x="21" y="322.2" width="3" height="1.2" fill="#9fcf95" fill-opacity="0.75"/>
<rect x="24" y="322.2" width="2" height="1.2" fill="#9fcf95" fill-opacity="0.6"/>
<rect x="26" y="322.2" width="2" height="1.2" fill="#9fcf95" fill-opacity="0.75"/>
<rect x="29" y="322.2" width="1" height="1.2" fill="#9fcf95" fill-opacity="0.35"/>
<rect x="30" y="322.2" width="1" height="1.2" fill="#9fcf95" fill-opacity="0.6"/>
<rect x="31" y="322.2" width="1" height="1.2" fill="#9fcf95" fill-opacity="0.5"/>
<rect x="32" y="322.2" width="1" height="1.2" fill="#9fcf95" fill-opacity="0.6"/>
<rect x="33" y="322.2" width="2" height="1.2" fill="#9fcf95" fill-opacity="0.5"/>
<rect x="35" y="322.2" width="3" height="1.2" fill="#9fcf95" fill-opacity="0.35"/>
<rect x="38" y="322.2" width="2" height="1.2" fill="#9fcf95" fill-opacity="0.5"/>
<rect x="40" y="322.2" width="2" height="1.2" fill="#9fcf95" fill-opacity="0.6"/>
<rect x="42" y="322.2" width="3" height="1.2" fill="#9fcf95" fill-opacity="0.5"/>
<rect x="45" y="322.2" width="2" height="1.2" fill="#9fcf95" fill-opacity="0.6"/>
<rect x="47" y="322.2" width="1" height="1.2" fill="#9fcf95" fill-opacity="0.75"/>
<rect x="48" y="322.2" width="2" height="1.2" fill="#9fcf95" fill-opacity="0.75"/>
<rect x="50" y="322.2" width="3" height="1.2" fill="#9fcf95" fill-opacity="0.5"/>
<rect x="54" y="322.2" width="2" height="1.2" fill="#9fcf95" fill-opacity="0.35"/>
<rect x="56" y="322.2" width="3" height="1.2" fill="#9fcf95" fill-opacity="0.6"/>
<rect x="6" y="324.8" width="2" height="1.2" fill="#9fcf95" fill-opacity="0.5"/>
<rect x="8" y="324.8" width="1" height="1.2" fill="#9fcf95" fill-opacity="0.5"/>
<rect x="9" y="324.8" width="3" height="1.2" fill="#9fcf95" fill-opacity="0.6"/>
<rect x="12" y="324.8" width="2" height="1.2" fill="#9fcf95" fill-opacity="0.75"/>
<rect x="14" y="324.8" width="2" height="1.2" fill="#9fcf95" fill-opacity="0.35"/>
<rect x="16" y="324.8" width="2" height="1.2" fill="#9fcf95" fill-opacity="0.75"/>
<rect x="18" y="324.8" width="1" height="1.2" fill="#9fcf95" fill-opacity="0.6"/>
<rect x="20" y="324.8" width="1" height="1.2" fill="#9fcf95" fill-opacity="0.75"/>
<rect x="21" y="324.8" width="1" height="1.2" fill="#9fcf95" fill-opacity="0.75"/>
<rect x="22" y="324.8" width="3" height="1.2" fill="#9fcf95" fill-opacity="0.75"/>
<rect x="26" y="324.8" width="3" height="1.2" fill="#9fcf95" fill-opacity="0.6"/>
<rect x="29" y="324.8" width="3" height="1.2" fill="#9fcf95" fill-opacity="0.6"/>
<rect x="31" y="324.8" width="3" height="1.2" fill="#9fcf95" fill-opacity="0.6"/>
<rect x="34" y="324.8" width="3" height="1.2" fill="#9fcf95" fill-opacity="0.5"/>
<rect x="38" y="324.8" width="2" height="1.2" fill="#9fcf95" fill-opacity="0.75"/>
<rect x="40" y="324.8" width="1" height="1.2" fill="#9fcf95" fill-opacity="0.35"/>
<rect x="41" y="324.8" width="3" height="1.2" fill="#9fcf95" fill-opacity="0.35"/>
<rect x="44" y="324.8" width="2" height="1.2" fill="#9fcf95" fill-opacity="0.75"/>
<rect x="46" y="324.8" width="2" height="1.2" fill="#9fcf95" fill-opacity="0.75"/>
<rect x="49" y="324.8" width="2" height="1.2" fill="#9fcf95" fill-opacity="0.6"/>
<rect x="51" y="324.8" width="2" height="1.2" fill="#9fcf95" fill-opacity="0.5"/>
<rect x="53" y="324.8" width="1" height="1.2" fill="#9fcf95" fill-opacity="0.5"/>
<rect x="55" y="324.8" width="3" height="1.2" fill="#9fcf95" fill-opacity="0.35"/>
<rect x="58" y="324.8" width="2" height="1.2" fill="#9fcf95" fill-opacity="0.6"/>
<rect x="60" y="324.8" width="2" height="1.2" fill="#9fcf95" fill-opacity="0.5"/>
<rect x="62" y="324.8" width="2" height="1.2" fill="#9fcf95" fill-opacity="0.5"/>
<rect x="64" y="324.8" width="3" height="1.2" fill="#9fcf95" fill-opacity="0.75"/>
<rect x="68" y="324.8" width="2" height="1.2" fill="#9fcf95" fill-opacity="0.75"/>
<rect x="70" y="324.8" width="2" height="1.2" fill="#9fcf95" fill-opacity="0.5"/>
<rect x="6" y="327.4" width="1" height="1.2" fill="#9a9aa8" fill-opacity="0.6"/>
<rect x="7" y="327.4" width="3" height="1.2" fill="#9a9aa8" fill-opacity="0.6"/>
<rect x="10" y="327.4" width="3" height="1.2" fill="#9a9aa8" fill-opacity="0.6"/>
<rect x="13" y="327.4" width="1" height="1.2" fill="#9a9aa8" fill-opacity="0.75"/>
<rect x="14" y="327.4" width="1" height="1.2" fill="#9a9aa8" fill-opacity="0.75"/>
<rect x="15" y="327.4" width="1" height="1.2" fill="#9a9aa8" fill-opacity="0.75"/>
<rect x="16" y="327.4" width="3" height="1.2" fill="#9a9aa8" fill-opacity="0.35"/>
<rect x="19" y="327.4" width="1" height="1.2" fill="#9a9aa8" fill-opacity="0.5"/>
<rect x="20" y="327.4" width="3" height="1.2" fill="#9a9aa8" fill-opacity="0.6"/>
<rect x="23" y="327.4" width="1" height="1.2" fill="#9a9aa8" fill-opacity="0.5"/>
<rect x="24" y="327.4" width="2" height="1.2" fill="#9a9aa8" fill-opacity="0.75"/>
<rect x="26" y="327.4" width="1" height="1.2" fill="#9a9aa8" fill-opacity="0.6"/>
<rect x="27" y="327.4" width="3" height="1.2" fill="#9a9aa8" fill-opacity="0.6"/>
<rect x="30" y="327.4" width="2" height="1.2" fill="#9a9aa8" fill-opacity="0.6"/>
<rect x="32" y="327.4" width="1" height="1.2" fill="#9a9aa8" fill-opacity="0.35"/>
<rect x="33" y="327.4" width="3" height="1.2" fill="#9a9aa8" fill-opacity="0.35"/>
<rect x="36" y="327.4" width="2" height="1.2" fill="#9a9aa8" fill-opacity="0.75"/>
<rect x="38" y="327.4" width="3" height="1.2" fill="#9a9aa8" fill-opacity="0.35"/>
<rect x="40" y="327.4" width="1" height="1.2" fill="#9a9aa8" fill-opacity="0.5"/>
<rect x="41" y="327.4" width="2" height="1.2" fill="#9a9aa8" fill-opacity="0.6"/>
<rect x="43" y="327.4" width="1" height="1.2" fill="#9a9aa8" fill-opacity="0.5"/>
<rect x="44" y="327.4" width="2" height="1.2" fill="#9a9aa8" fill-opacity="0.6"/>
<rect x="6" y="329.9" width="3" height="1.2" fill="#9a9aa8" fill-opacity="0.5"/>
<rect x="9" y="329.9" width="1" height="1.2" fill="#9a9aa8" fill-opacity="0.75"/>
<rect x="10" y="329.9" width="1" height="1.2" fill="#9a9aa8" fill-opacity="0.5"/>
<rect x="11" y="329.9" width="3" height="1.2" fill="#9a9aa8" fill-opacity="0.75"/>
<rect x="14" y="329.9" width="1" height="1.2" fill="#9a9aa8" fill-opacity="0.6"/>
<rect x="15" y="329.9" width="2" height="1.2" fill="#9a9aa8" fill-opacity="0.6"/>
<rect x="17" y="329.9" width="2" height="1.2" fill="#9a9aa8" fill-opacity="0.6"/>
<rect x="19" y="329.9" width="1" height="1.2" fill="#9a9aa8" fill-opacity="0.35"/>
<rect x="20" y="329.9" width="2" height="1.2" fill="#9a9aa8" fill-opacity="0.5"/>
<rect x="22" y="329.9" width="3" height="1.2" fill="#9a9aa8" fill-opacity="0.75"/>
<rect x="26" y="329.9" width="3" height="1.2" fill="#9a9aa8" fill-opacity="0.5"/>
<rect x="29" y="329.9" width="3" height="1.2" fill="#9a9aa8" fill-opacity="0.35"/>
<rect x="32" y="329.9" width="2" height="1.2" fill="#9a9aa8" fill-opacity="0.6"/>
<rect x="34" y="329.9" width="2" height="1.2" fill="#9a9aa8" fill-opacity="0.5"/>
<rect x="6" y="332.5" width="1" height="1.2" fill="#9a9aa8" fill-opacity="0.75"/>
<rect x="7" y="332.5" width="1" height="1.2" fill="#9a9aa8" fill-opacity="0.5"/>
<rect x="8" y="332.5" width="3" height="1.2" fill="#9a9aa8" fill-opacity="0.75"/>
<rect x="11" y="332.5" width="2" height="1.2" fill="#9a9aa8" fill-opacity="0.35"/>
<rect x="13" y="332.5" width="1" height="1.2" fill="#9a9aa8" fill-opacity="0.6"/>
<rect x="14" y="332.5" width="3" height="1.2" fill="#9a9aa8" fill-opacity="0.35"/>
<rect x="18" y="332.5" width="2" height="1.2" fill="#9a9aa8" fill-opacity="0.6"/>
<rect x="20" y="332.5" width="2" height="1.2" fill="#9a9aa8" fill-opacity="0.5"/>
<rect x="22" y="332.5" width="2" height="1.2" fill="#9a9aa8" fill-opacity="0.6"/>
<rect x="24" y="332.5" width="2" height="1.2" fill="#9a9aa8" fill-opacity="0.75"/>
<rect x="27" y="332.5" width="1" height="1.2" fill="#9a9aa8" fill-opacity="0.6"/>
<rect x="28" y="332.5" width="1" height="1.2" fill="#9a9aa8" fill-opacity="0.35"/>
<rect x="29" y="332.5" width="2" height="1.2" fill="#9a9aa8" fill-opacity="0.6"/>
<rect x="6" y="337.7" width="3" height="1.2" fill="#9a9aa8" fill-opacity="0.35"/>
<rect x="9" y="337.7" width="3" height="1.2" fill="#9a9aa8" fill-opacity="0.75"/>
<rect x="12" y="337.7" width="3" height="1.2" fill="#9a9aa8" fill-opacity="0.75"/>
<rect x="15" y="337.7" width="1" height="1.2" fill="#9a9aa8" fill-opacity="0.6"/>
<rect x="17" y="337.7" width="3" height="1.2" fill="#9a9aa8" fill-opacity="0.5"/>
<rect x="20" y="337.7" width="2" height="1.2" fill="#9a9aa8" fill-opacity="0.75"/>
<rect x="22" y="337.7" width="2" height="1.2" fill="#9a9aa8" fill-opacity="0.5"/>
<rect x="24" y="337.7" width="3" height="1.2" fill="#9a9aa8" fill-opacity="0.35"/>
<rect x="27" y="337.7" width="3" height="1.2" fill="#9a9aa8" fill-opacity="0.5"/>
<rect x="30" y="337.7" width="2" height="1.2" fill="#9a9aa8" fill-opacity="0.6"/>
<rect x="33" y="337.7" width="3" height="1.2" fill="#9a9aa8" fill-opacity="0.75"/>
<rect x="36" y="337.7" width="2" height="1.2" fill="#9a9aa8" fill-opacity="0.75"/>
<rect x="38" y="337.7" width="2" height="1.2" fill="#9a9aa8" fill-opacity="0.35"/>
<rect x="40" y="337.7" width="3" height="1.2" fill="#9a9aa8" fill-opacity="0.75"/>
<rect x="44" y="337.7" width="2" height="1.2" fill="#9a9aa8" fill-opacity="0.5"/>
<rect x="46" y="337.7" width="1" height="1.2" fill="#9a9aa8" fill-opacity="0.75"/>
<rect x="47" y="337.7" width="1" height="1.2" fill="#9a9aa8" fill-opacity="0.35"/>
<rect x="49" y="337.7" width="2" height="1.2" fill="#9a9aa8" fill-opacity="0.6"/>
<rect x="51" y="337.7" width="3" height="1.2" fill="#9a9aa8" fill-opacity="0.35"/>
<rect x="2" y="342.8" width="1" height="1.2" fill="#9aa0e0" fill-opacity="0.75"/>
<rect x="3" y="342.8" width="3" height="1.2" fill="#9aa0e0" fill-opacity="0.35"/>
<rect x="6" y="342.8" width="3" height="1.2" fill="#9aa0e0" fill-opacity="0.75"/>
<rect x="10" y="342.8" width="1" height="1.2" fill="#9aa0e0" fill-opacity="0.75"/>
<rect x="11" y="342.8" width="1" height="1.2" fill="#9aa0e0" fill-opacity="0.5"/>
<rect x="12" y="342.8" width="3" height="1.2" fill="#9aa0e0" fill-opacity="0.5"/>
<rect x="15" y="342.8" width="2" height="1.2" fill="#9aa0e0" fill-opacity="0.5"/>
<rect x="2" y="345.4" width="2" height="1.2" fill="#9a9aa8" fill-opacity="0.5"/>
<rect x="6" y="347.9" width="3" height="1.2" fill="#d0a098" fill-opacity="0.35"/>
<rect x="9" y="347.9" width="1" height="1.2" fill="#d0a098" fill-opacity="0.6"/>
<rect x="10" y="347.9" width="3" height="1.2" fill="#d0a098" fill-opacity="0.75"/>
<rect x="13" y="347.9" width="2" height="1.2" fill="#d0a098" fill-opacity="0.5"/>
<rect x="15" y="347.9" width="1" height="1.2" fill="#d0a098" fill-opacity="0.75"/>
<rect x="16" y="347.9" width="3" height="1.2" fill="#d0a098" fill-opacity="0.6"/>
<rect x="19" y="347.9" width="1" height="1.2" fill="#d0a098" fill-opacity="0.6"/>
<rect x="20" y="347.9" width="3" height="1.2" fill="#d0a098" fill-opacity="0.35"/>
<rect x="22" y="347.9" width="3" height="1.2" fill="#d0a098" fill-opacity="0.35"/>
<rect x="6" y="350.5" width="1" height="1.2" fill="#9a9aa8" fill-opacity="0.35"/>
<rect x="7" y="350.5" width="3" height="1.2" fill="#9a9aa8" fill-opacity="0.5"/>
<rect x="10" y="350.5" width="3" height="1.2" fill="#9a9aa8" fill-opacity="0.35"/>
<rect x="13" y="350.5" width="3" height="1.2" fill="#9a9aa8" fill-opacity="0.35"/>
<rect x="16" y="350.5" width="3" height="1.2" fill="#9a9aa8" fill-opacity="0.35"/>
<rect x="19" y="350.5" width="2" height="1.2" fill="#9a9aa8" fill-opacity="0.75"/>
<rect x="21" y="350.5" width="3" height="1.2" fill="#9a9aa8" fill-opacity="0.5"/>
<rect x="6" y="355.6" width="3" height="1.2" fill="#9a9aa8" fill-opacity="0.5"/>
<rect x="9" y="355.6" width="2" height="1.2" fill="#9a9aa8" fill-opacity="0.75"/>
<rect x="11" y="355.6" width="1" height="1.2" fill="#9a9aa8" fill-opacity="0.5"/>
<rect x="12" y="355.6" width="2" height="1.2" fill="#9a9aa8" fill-opacity="0.35"/>
<rect x="15" y="355.6" width="2" height="1.2" fill="#9a9aa8" fill-opacity="0.5"/>
<rect x="17" y="355.6" width="2" height="1.2" fill="#9a9aa8" fill-opacity="0.6"/>
<rect x="20" y="355.6" width="1" height="1.2" fill="#9a9aa8" fill-opacity="0.75"/>
<rect x="21" y="355.6" width="1" height="1.2" fill="#9a9aa8" fill-opacity="0.6"/>
<rect x="22" y="355.6" width="1" height="1.2" fill="#9a9aa8" fill-opacity="0.35"/>
<rect x="23" y="355.6" width="3" height="1.2" fill="#9a9aa8" fill-opacity="0.75"/>
<rect x="25" y="355.6" width="2" height="1.2" fill="#9a9aa8" fill-opacity="0.35"/>
<rect x="27" y="355.6" width="2" height="1.2" fill="#9a9aa8" fill-opacity="0.75"/>
<rect x="29" y="355.6" width="2" height="1.2" fill="#9a9aa8" fill-opacity="0.5"/>
<rect x="31" y="355.6" width="3" height="1.2" fill="#9a9aa8" fill-opacity="0.6"/>
<rect x="34" y="355.6" width="3" height="1.2" fill="#9a9aa8" fill-opacity="0.75"/>
<rect x="36" y="355.6" width="2" height="1.2" fill="#9a9aa8" fill-opacity="0.75"/>
<rect x="6" y="358.2" width="2" height="1.2" fill="#9a9aa8" fill-opacity="0.75"/>
<rect x="9" y="358.2" width="3" height="1.2" fill="#9a9aa8" fill-opacity="0.5"/>
<rect x="12" y="358.2" width="1" height="1.2" fill="#9a9aa8" fill-opacity="0.75"/>
<rect x="13" y="358.2" width="1" height="1.2" fill="#9a9aa8" fill-opacity="0.6"/>
<rect x="14" y="358.2" width="2" height="1.2" fill="#9a9aa8" fill-opacity="0.6"/>
<rect x="16" y="358.2" width="3" height="1.2" fill="#9a9aa8" fill-opacity="0.35"/>
<rect x="19" y="358.2" width="2" height="1.2" fill="#9a9aa8" fill-opacity="0.35"/>
<rect x="21" y="358.2" width="1" height="1.2" fill="#9a9aa8" fill-opacity="0.35"/>
<rect x="22" y="358.2" width="3" height="1.2" fill="#9a9aa8" fill-opacity="0.6"/>
<rect x="25" y="358.2" width="2" height="1.2" fill="#9a9aa8" fill-opacity="0.35"/>
<rect x="27" y="358.2" width="2" height="1.2" fill="#9a9aa8" fill-opacity="0.75"/>
<rect x="29" y="358.2" width="1" height="1.2" fill="#9a9aa8" fill-opacity="0.35"/>
<rect x="30" y="358.2" width="2" height="1.2" fill="#9a9aa8" fill-opacity="0.75"/>
<rect x="32" y="358.2" width="2" height="1.2" fill="#9a9aa8" fill-opacity="0.35"/>
<rect x="34" y="358.2" width="1" height="1.2" fill="#9a9aa8" fill-opacity="0.35"/>
<rect x="35" y="358.2" width="2" height="1.2" fill="#9a9aa8" fill-opacity="0.75"/>
<rect x="37" y="358.2" width="3" height="1.2" fill="#9a9aa8" fill-opacity="0.35"/>
<rect x="6" y="360.8" width="3" height="1.2" fill="#9a9aa8" fill-opacity="0.5"/>
<rect x="9" y="360.8" width="3" height="1.2" fill="#9a9aa8" fill-opacity="0.75"/>
<rect x="12" y="360.8" width="2" height="1.2" fill="#9a9aa8" fill-opacity="0.75"/>
<rect x="14" y="360.8" width="3" height="1.2" fill="#9a9aa8" fill-opacity="0.6"/>
<rect x="17" y="360.8" width="1" height="1.2" fill="#9a9aa8" fill-opacity="0.75"/>
<rect x="19" y="360.8" width="2" height="1.2" fill="#9a9aa8" fill-opacity="0.5"/>
<rect x="21" y="360.8" width="3" height="1.2" fill="#9a9aa8" fill-opacity="0.75"/>
<rect x="24" y="360.8" width="3" height="1.2" fill="#9a9aa8" fill-opacity="0.6"/>
<rect x="26" y="360.8" width="2" height="1.2" fill="#9a9aa8" fill-opacity="0.35"/>
<rect x="28" y="360.8" width="2" height="1.2" fill="#9a9aa8" fill-opacity="0.6"/>
<rect x="30" y="360.8" width="3" height="1.2" fill="#9a9aa8" fill-opacity="0.5"/>
<rect x="34" y="360.8" width="1" height="1.2" fill="#9a9aa8" fill-opacity="0.35"/>
<rect x="35" y="360.8" width="3" height="1.2" fill="#9a9aa8" fill-opacity="0.75"/>
<rect x="39" y="360.8" width="3" height="1.2" fill="#9a9aa8" fill-opacity="0.75"/>
<rect x="42" y="360.8" width="2" height="1.2" fill="#9a9aa8" fill-opacity="0.6"/>
<rect x="44" y="360.8" width="2" height="1.2" fill="#9a9aa8" fill-opacity="0.35"/>
<rect x="46" y="360.8" width="1" height="1.2" fill="#9a9aa8" fill-opacity="0.35"/>
<rect x="47" y="360.8" width="2" height="1.2" fill="#9a9aa8" fill-opacity="0.6"/>
<rect x="50" y="360.8" width="3" height="1.2" fill="#9a9aa8" fill-opacity="0.35"/>
<rect x="53" y="360.8" width="2" height="1.2" fill="#9a9aa8" fill-opacity="0.6"/>
<rect x="55" y="360.8" width="2" height="1.2" fill="#9a9aa8" fill-opacity="0.5"/>
<rect x="57" y="360.8" width="1" height="1.2" fill="#9a9aa8" fill-opacity="0.6"/>
<rect x="58" y="360.8" width="2" height="1.2" fill="#9a9aa8" fill-opacity="0.35"/>
<rect x="60" y="360.8" width="3" height="1.2" fill="#9a9aa8" fill-opacity="0.6"/>
<rect x="63" y="360.8" width="1" height="1.2" fill="#9a9aa8" fill-opacity="0.6"/>
<rect x="64" y="360.8" width="1" height="1.2" fill="#9a9aa8" fill-opacity="0.35"/>
<rect x="65" y="360.8" width="3" height="1.2" fill="#9a9aa8" fill-opacity="0.35"/>
<rect x="67" y="360.8" width="2" height="1.2" fill="#9a9aa8" fill-opacity="0.5"/>
<rect x="69" y="360.8" width="3" height="1.2" fill="#9a9aa8" fill-opacity="0.6"/>
<rect x="71" y="360.8" width="2" height="1.2" fill="#9a9aa8" fill-opacity="0.35"/>
<rect x="73" y="360.8" width="3" height="1.2" fill="#9a9aa8" fill-opacity="0.35"/>
<rect x="75" y="360.8" width="3" height="1.2" fill="#9a9aa8" fill-opacity="0.75"/>
<rect x="78" y="360.8" width="3" height="1.2" fill="#9a9aa8" fill-opacity="0.5"/>
<rect x="81" y="360.8" width="1" height="1.2" fill="#9a9aa8" fill-opacity="0.35"/>
<rect x="82" y="360.8" width="2" height="1.2" fill="#9a9aa8" fill-opacity="0.75"/>
<rect x="84" y="360.8" width="2" height="1.2" fill="#9a9aa8" fill-opacity="0.6"/>
<rect x="86" y="360.8" width="3" height="1.2" fill="#9a9aa8" fill-opacity="0.35"/>
<rect x="89" y="360.8" width="2" height="1.2" fill="#9a9aa8" fill-opacity="0.35"/>
<rect x="91" y="360.8" width="1" height="1.2" fill="#9a9aa8" fill-opacity="0.35"/>
<rect x="93" y="360.8" width="2" height="1.2" fill="#9a9aa8" fill-opacity="0.75"/>
<rect x="95" y="360.8" width="1" height="1.2" fill="#9a9aa8" fill-opacity="0.5"/>
<rect x="97" y="360.8" width="3" height="1.2" fill="#9a9aa8" fill-opacity="0.5"/>
<rect x="6" y="365.9" width="1" height="1.2" fill="#9a9aa8" fill-opacity="0.6"/>
<rect x="7" y="365.9" width="1" height="1.2" fill="#9a9aa8" fill-opacity="0.75"/>
<rect x="8" y="365.9" width="3" height="1.2" fill="#9a9aa8" fill-opacity="0.35"/>
<rect x="11" y="365.9" width="1" height="1.2" fill="#9a9aa8" fill-opacity="0.75"/>
<rect x="12" y="365.9" width="3" height="1.2" fill="#9a9aa8" fill-opacity="0.6"/>
<rect x="14" y="365.9" width="3" height="1.2" fill="#9a9aa8" fill-opacity="0.75"/>
<rect x="17" y="365.9" width="2" height="1.2" fill="#9a9aa8" fill-opacity="0.75"/>
<rect x="19" y="365.9" width="1" height="1.2" fill="#9a9aa8" fill-opacity="0.35"/>
<rect x="20" y="365.9" width="3" height="1.2" fill="#9a9aa8" fill-opacity="0.6"/>
<rect x="23" y="365.9" width="2" height="1.2" fill="#9a9aa8" fill-opacity="0.5"/>
<rect x="25" y="365.9" width="2" height="1.2" fill="#9a9aa8" fill-opacity="0.5"/>
<rect x="27" y="365.9" width="3" height="1.2" fill="#9a9aa8" fill-opacity="0.6"/>
<rect x="30" y="365.9" width="2" height="1.2" fill="#9a9aa8" fill-opacity="0.35"/>
<rect x="32" y="365.9" width="2" height="1.2" fill="#9a9aa8" fill-opacity="0.75"/>
<rect x="34" y="365.9" width="1" height="1.2" fill="#9a9aa8" fill-opacity="0.5"/>
<rect x="35" y="365.9" width="2" height="1.2" fill="#9a9aa8" fill-opacity="0.6"/>
<rect x="37" y="365.9" width="1" height="1.2" fill="#9a9aa8" fill-opacity="0.35"/>
<rect x="38" y="365.9" width="3" height="1.2" fill="#9a9aa8" fill-opacity="0.75"/>
<rect x="6" y="368.5" width="3" height="1.2" fill="#9a9aa8" fill-opacity="0.75"/>
<rect x="10" y="368.5" width="3" height="1.2" fill="#9a9aa8" fill-opacity="0.5"/>
<rect x="13" y="368.5" width="2" height="1.2" fill="#9a9aa8" fill-opacity="0.5"/>
<rect x="15" y="368.5" width="2" height="1.2" fill="#9a9aa8" fill-opacity="0.5"/>
<rect x="17" y="368.5" width="3" height="1.2" fill="#9a9aa8" fill-opacity="0.5"/>
<rect x="20" y="368.5" width="1" height="1.2" fill="#9a9aa8" fill-opacity="0.5"/>
<rect x="21" y="368.5" width="1" height="1.2" fill="#9a9aa8" fill-opacity="0.35"/>
<rect x="22" y="368.5" width="3" height="1.2" fill="#9a9aa8" fill-opacity="0.5"/>
<rect x="26" y="368.5" width="3" height="1.2" fill="#9a9aa8" fill-opacity="0.5"/>
<rect x="29" y="368.5" width="2" height="1.2" fill="#9a9aa8" fill-opacity="0.6"/>
<rect x="31" y="368.5" width="3" height="1.2" fill="#9a9aa8" fill-opacity="0.5"/>
<rect x="33" y="368.5" width="1" height="1.2" fill="#9a9aa8" fill-opacity="0.75"/>
<rect x="34" y="368.5" width="1" height="1.2" fill="#9a9aa8" fill-opacity="0.6"/>
<rect x="35" y="368.5" width="1" height="1.2" fill="#9a9aa8" fill-opacity="0.6"/>
<rect x="36" y="368.5" width="3" height="1.2" fill="#9a9aa8" fill-opacity="0.75"/>
<rect x="6" y="371.1" width="1" height="1.2" fill="#9a9aa8" fill-opacity="0.75"/>
<rect x="7" y="371.1" width="3" height="1.2" fill="#9a9aa8" fill-opacity="0.35"/>
<rect x="10" y="371.1" width="2" height="1.2" fill="#9a9aa8" fill-opacity="0.75"/>
<rect x="13" y="371.1" width="2" height="1.2" fill="#9a9aa8" fill-opacity="0.5"/>
<rect x="15" y="371.1" width="2" height="1.2" fill="#9a9aa8" fill-opacity="0.35"/>
<rect x="17" y="371.1" width="1" height="1.2" fill="#9a9aa8" fill-opacity="0.75"/>
<rect x="18" y="371.1" width="1" height="1.2" fill="#9a9aa8" fill-opacity="0.35"/>
<rect x="19" y="371.1" width="2" height="1.2" fill="#9a9aa8" fill-opacity="0.75"/>
<rect x="22" y="371.1" width="1" height="1.2" fill="#9a9aa8" fill-opacity="0.75"/>
<rect x="23" y="371.1" width="1" height="1.2" fill="#9a9aa8" fill-opacity="0.75"/>
<rect x="24" y="371.1" width="2" height="1.2" fill="#9a9aa8" fill-opacity="0.6"/>
<rect x="6" y="373.6" width="1" height="1.2" fill="#9a9aa8" fill-opacity="0.5"/>
<rect x="7" y="373.6" width="2" height="1.2" fill="#9a9aa8" fill-opacity="0.5"/>
<rect x="9" y="373.6" width="2" height="1.2" fill="#9a9aa8" fill-opacity="0.75"/>
<rect x="11" y="373.6" width="1" height="1.2" fill="#9a9aa8" fill-opacity="0.6"/>
<rect x="12" y="373.6" width="3" height="1.2" fill="#9a9aa8" fill-opacity="0.35"/>
<rect x="14" y="373.6" width="2" height="1.2" fill="#9a9aa8" fill-opacity="0.75"/>
<rect x="16" y="373.6" width="1" height="1.2" fill="#9a9aa8" fill-opacity="0.35"/>
<rect x="17" y="373.6" width="3" height="1.2" fill="#9a9aa8" fill-opacity="0.6"/>
<rect x="21" y="373.6" width="3" height="1.2" fill="#9a9aa8" fill-opacity="0.35"/>
<rect x="24" y="373.6" width="3" height="1.2" fill="#9a9aa8" fill-opacity="0.75"/>
<rect x="6" y="378.8" width="2" height="1.2" fill="#9a9aa8" fill-opacity="0.6"/>
<rect x="8" y="378.8" width="1" height="1.2" fill="#9a9aa8" fill-opacity="0.5"/>
<rect x="9" y="378.8" width="1" height="1.2" fill="#9a9aa8" fill-opacity="0.6"/>
<rect x="10" y="378.8" width="1" height="1.2" fill="#9a9aa8" fill-opacity="0.6"/>
<rect x="11" y="378.8" width="3" height="1.2" fill="#9a9aa8" fill-opacity="0.75"/>
<rect x="14" y="378.8" width="1" height="1.2" fill="#9a9aa8" fill-opacity="0.6"/>
<rect x="15" y="378.8" width="1" height="1.2" fill="#9a9aa8" fill-opacity="0.5"/>
<rect x="17" y="378.8" width="2" height="1.2" fill="#9a9aa8" fill-opacity="0.75"/>
<rect x="19" y="378.8" width="3" height="1.2" fill="#9a9aa8" fill-opacity="0.75"/>
<rect x="22" y="378.8" width="2" height="1.2" fill="#9a9aa8" fill-opacity="0.35"/>
<rect x="24" y="378.8" width="3" height="1.2" fill="#9a9aa8" fill-opacity="0.75"/>
<rect x="27" y="378.8" width="2" height="1.2" fill="#9a9aa8" fill-opacity="0.35"/>
<rect x="29" y="378.8" width="3" height="1.2" fill="#9a9aa8" fill-opacity="0.75"/>
<rect x="32" y="378.8" width="3" height="1.2" fill="#9a9aa8" fill-opacity="0.5"/>
<rect x="6" y="381.3" width="2" height="1.2" fill="#9a9aa8" fill-opacity="0.75"/>
<rect x="8" y="381.3" width="1" height="1.2" fill="#9a9aa8" fill-opacity="0.5"/>
<rect x="9" y="381.3" width="1" height="1.2" fill="#9a9aa8" fill-opacity="0.5"/>
<rect x="10" y="381.3" width="2" height="1.2" fill="#9a9aa8" fill-opacity="0.5"/>
<rect x="12" y="381.3" width="3" height="1.2" fill="#9a9aa8" fill-opacity="0.75"/>
<rect x="15" y="381.3" width="3" height="1.2" fill="#9a9aa8" fill-opacity="0.5"/>
<rect x="18" y="381.3" width="3" height="1.2" fill="#9a9aa8" fill-opacity="0.35"/>
<rect x="20" y="381.3" width="1" height="1.2" fill="#9a9aa8" fill-opacity="0.6"/>
<rect x="21" y="381.3" width="1" height="1.2" fill="#9a9aa8" fill-opacity="0.35"/>
<rect x="22" y="381.3" width="2" height="1.2" fill="#9a9aa8" fill-opacity="0.6"/>
<rect x="24" y="381.3" width="2" height="1.2" fill="#9a9aa8" fill-opacity="0.6"/>
<rect x="26" y="381.3" width="1" height="1.2" fill="#9a9aa8" fill-opacity="0.5"/>
<rect x="27" y="381.3" width="3" height="1.2" fill="#9a9aa8" fill-opacity="0.35"/>
<rect x="30" y="381.3" width="3" height="1.2" fill="#9a9aa8" fill-opacity="0.6"/>
<rect x="33" y="381.3" width="3" height="1.2" fill="#9a9aa8" fill-opacity="0.6"/>
<rect x="6" y="383.9" width="1" height="1.2" fill="#9a9aa8" fill-opacity="0.5"/>
<rect x="7" y="383.9" width="2" height="1.2" fill="#9a9aa8" fill-opacity="0.6"/>
<rect x="9" y="383.9" width="3" height="1.2" fill="#9a9aa8" fill-opacity="0.6"/>
<rect x="13" y="383.9" width="1" height="1.2" fill="#9a9aa8" fill-opacity="0.35"/>
<rect x="14" y="383.9" width="1" height="1.2" fill="#9a9aa8" fill-opacity="0.75"/>
<rect x="15" y="383.9" width="3" height="1.2" fill="#9a9aa8" fill-opacity="0.75"/>
<rect x="18" y="383.9" width="1" height="1.2" fill="#9a9aa8" fill-opacity="0.35"/>
<rect x="19" y="383.9" width="3" height="1.2" fill="#9a9aa8" fill-opacity="0.35"/>
<rect x="21" y="383.9" width="2" height="1.2" fill="#9a9aa8" fill-opacity="0.35"/>
<rect x="23" y="383.9" width="3" height="1.2" fill="#9a9aa8" fill-opacity="0.35"/>
<rect x="26" y="383.9" width="1" height="1.2" fill="#9a9aa8" fill-opacity="0.6"/>
<rect x="28" y="383.9" width="2" height="1.2" fill="#9a9aa8" fill-opacity="0.35"/>
<rect x="30" y="383.9" width="3" height="1.2" fill="#9a9aa8" fill-opacity="0.35"/>
<rect x="33" y="383.9" width="1" height="1.2" fill="#9a9aa8" fill-opacity="0.5"/>
<rect x="6" y="386.5" width="3" height="1.2" fill="#9aa0e0" fill-opacity="0.6"/>
<rect x="9" y="386.5" width="3" height="1.2" fill="#9aa0e0" fill-opacity="0.35"/>
<rect x="12" y="386.5" width="1" height="1.2" fill="#9aa0e0" fill-opacity="0.35"/>
<rect x="13" y="386.5" width="3" height="1.2" fill="#9aa0e0" fill-opacity="0.6"/>
<rect x="16" y="386.5" width="3" height="1.2" fill="#9aa0e0" fill-opacity="0.35"/>
<rect x="19" y="386.5" width="1" height="1.2" fill="#9aa0e0" fill-opacity="0.35"/>
<rect x="20" y="386.5" width="2" height="1.2" fill="#9aa0e0" fill-opacity="0.5"/>
<rect x="22" y="386.5" width="2" height="1.2" fill="#9aa0e0" fill-opacity="0.6"/>
<rect x="24" y="386.5" width="1" height="1.2" fill="#9aa0e0" fill-opacity="0.35"/>
<rect x="25" y="386.5" width="1" height="1.2" fill="#9aa0e0" fill-opacity="0.35"/>
<rect x="26" y="386.5" width="3" height="1.2" fill="#9aa0e0" fill-opacity="0.5"/>
<rect x="29" y="386.5" width="3" height="1.2" fill="#9aa0e0" fill-opacity="0.6"/>
<rect x="32" y="386.5" width="1" height="1.2" fill="#9aa0e0" fill-opacity="0.5"/>
<rect x="6" y="391.6" width="1" height="1.2" fill="#9a9aa8" fill-opacity="0.35"/>
<rect x="7" y="391.6" width="3" height="1.2" fill="#9a9aa8" fill-opacity="0.5"/>
<rect x="10" y="391.6" width="1" height="1.2" fill="#9a9aa8" fill-opacity="0.6"/>
<rect x="11" y="391.6" width="3" height="1.2" fill="#9a9aa8" fill-opacity="0.35"/>
<rect x="14" y="391.6" width="2" height="1.2" fill="#9a9aa8" fill-opacity="0.5"/>
<rect x="16" y="391.6" width="2" height="1.2" fill="#9a9aa8" fill-opacity="0.5"/>
<rect x="18" y="391.6" width="3" height="1.2" fill="#9a9aa8" fill-opacity="0.75"/>
<rect x="20" y="391.6" width="1" height="1.2" fill="#9a9aa8" fill-opacity="0.35"/>
<rect x="21" y="391.6" width="3" height="1.2" fill="#9a9aa8" fill-opacity="0.75"/>
<rect x="23" y="391.6" width="1" height="1.2" fill="#9a9aa8" fill-opacity="0.35"/>
<rect x="24" y="391.6" width="1" height="1.2" fill="#9a9aa8" fill-opacity="0.6"/>
<rect x="25" y="391.6" width="2" height="1.2" fill="#9a9aa8" fill-opacity="0.75"/>
<rect x="28" y="391.6" width="2" height="1.2" fill="#9a9aa8" fill-opacity="0.6"/>
<rect x="6" y="394.2" width="1" height="1.2" fill="#9a9aa8" fill-opacity="0.5"/>
<rect x="7" y="394.2" width="3" height="1.2" fill="#9a9aa8" fill-opacity="0.6"/>
<rect x="10" y="394.2" width="1" height="1.2" fill="#9a9aa8" fill-opacity="0.5"/>
<rect x="11" y="394.2" width="1" height="1.2" fill="#9a9aa8" fill-opacity="0.5"/>
<rect x="12" y="394.2" width="2" height="1.2" fill="#9a9aa8" fill-opacity="0.75"/>
<rect x="14" y="394.2" width="2" height="1.2" fill="#9a9aa8" fill-opacity="0.75"/>
<rect x="17" y="394.2" width="1" height="1.2" fill="#9a9aa8" fill-opacity="0.75"/>
<rect x="18" y="394.2" width="1" height="1.2" fill="#9a9aa8" fill-opacity="0.6"/>
<rect x="19" y="394.2" width="2" height="1.2" fill="#9a9aa8" fill-opacity="0.75"/>
<rect x="21" y="394.2" width="3" height="1.2" fill="#9a9aa8" fill-opacity="0.6"/>
<rect x="24" y="394.2" width="1" height="1.2" fill="#9a9aa8" fill-opacity="0.75"/>
<rect x="25" y="394.2" width="1" height="1.2" fill="#9a9aa8" fill-opacity="0.6"/>
<rect x="26" y="394.2" width="1" height="1.2" fill="#9a9aa8" fill-opacity="0.6"/>
<rect x="27" y="394.2" width="1" height="1.2" fill="#9a9aa8" fill-opacity="0.6"/>
<rect x="29" y="394.2" width="1" height="1.2" fill="#9a9aa8" fill-opacity="0.6"/>
<rect x="30" y="394.2" width="3" height="1.2" fill="#9a9aa8" fill-opacity="0.75"/>
<rect x="32" y="394.2" width="1" height="1.2" fill="#9a9aa8" fill-opacity="0.5"/>
<rect x="33" y="394.2" width="2" height="1.2" fill="#9a9aa8" fill-opacity="0.5"/>
<rect x="6" y="396.8" width="1" height="1.2" fill="#9a9aa8" fill-opacity="0.5"/>
<rect x="7" y="396.8" width="1" height="1.2" fill="#9a9aa8" fill-opacity="0.5"/>
<rect x="8" y="396.8" width="1" height="1.2" fill="#9a9aa8" fill-opacity="0.6"/>
<rect x="9" y="396.8" width="3" height="1.2" fill="#9a9aa8" fill-opacity="0.75"/>
<rect x="12" y="396.8" width="1" height="1.2" fill="#9a9aa8" fill-opacity="0.35"/>
<rect x="13" y="396.8" width="1" height="1.2" fill="#9a9aa8" fill-opacity="0.35"/>
<rect x="14" y="396.8" width="1" height="1.2" fill="#9a9aa8" fill-opacity="0.6"/>
<rect x="15" y="396.8" width="1" height="1.2" fill="#9a9aa8" fill-opacity="0.75"/>
<rect x="16" y="396.8" width="2" height="1.2" fill="#9a9aa8" fill-opacity="0.35"/>
<rect x="19" y="396.8" width="2" height="1.2" fill="#9a9aa8" fill-opacity="0.5"/>
<rect x="21" y="396.8" width="1" height="1.2" fill="#9a9aa8" fill-opacity="0.5"/>
<rect x="22" y="396.8" width="2" height="1.2" fill="#9a9aa8" fill-opacity="0.6"/>
<rect x="24" y="396.8" width="1" height="1.2" fill="#9a9aa8" fill-opacity="0.5"/>
<rect x="25" y="396.8" width="3" height="1.2" fill="#9a9aa8" fill-opacity="0.6"/>
<rect x="27" y="396.8" width="2" height="1.2" fill="#9a9aa8" fill-opacity="0.75"/>
<rect x="29" y="396.8" width="2" height="1.2" fill="#9a9aa8" fill-opacity="0.5"/>
<rect x="31" y="396.8" width="1" height="1.2" fill="#9a9aa8" fill-opacity="0.5"/>
<rect x="32" y="396.8" width="3" height="1.2" fill="#9a9aa8" fill-opacity="0.6"/>
<rect x="6" y="401.9" width="3" height="1.2" fill="#9a9aa8" fill-opacity="0.5"/>
<rect x="10" y="401.9" width="1" height="1.2" fill="#9a9aa8" fill-opacity="0.75"/>
<rect x="11" y="401.9" width="3" height="1.2" fill="#9a9aa8" fill-opacity="0.35"/>
<rect x="14" y="401.9" width="2" height="1.2" fill="#9a9aa8" fill-opacity="0.6"/>
<rect x="16" y="401.9" width="1" height="1.2" fill="#9a9aa8" fill-opacity="0.5"/>
<rect x="17" y="401.9" width="1" height="1.2" fill="#9a9aa8" fill-opacity="0.35"/>
<rect x="18" y="401.9" width="3" height="1.2" fill="#9a9aa8" fill-opacity="0.35"/>
<rect x="21" y="401.9" width="1" height="1.2" fill="#9a9aa8" fill-opacity="0.6"/>
<rect x="22" y="401.9" width="3" height="1.2" fill="#9a9aa8" fill-opacity="0.35"/>
<rect x="24" y="401.9" width="2" height="1.2" fill="#9a9aa8" fill-opacity="0.6"/>
<rect x="26" y="401.9" width="3" height="1.2" fill="#9a9aa8" fill-opacity="0.75"/>
<rect x="29" y="401.9" width="2" height="1.2" fill="#9a9aa8" fill-opacity="0.35"/>
<rect x="6" y="407.0" width="3" height="1.2" fill="#b898cc" fill-opacity="0.5"/>
<rect x="9" y="407.0" width="1" height="1.2" fill="#b898cc" fill-opacity="0.6"/>
<rect x="10" y="407.0" width="3" height="1.2" fill="#b898cc" fill-opacity="0.6"/>
<rect x="13" y="407.0" width="3" height="1.2" fill="#b898cc" fill-opacity="0.35"/>
<rect x="15" y="407.0" width="3" height="1.2" fill="#b898cc" fill-opacity="0.35"/>
<rect x="6" y="409.6" width="1" height="1.2" fill="#9a9aa8" fill-opacity="0.6"/>
<rect x="7" y="409.6" width="2" height="1.2" fill="#9a9aa8" fill-opacity="0.35"/>
<rect x="12" y="412.2" width="3" height="1.2" fill="#9a9aa8" fill-opacity="0.5"/>
<rect x="15" y="412.2" width="3" height="1.2" fill="#9a9aa8" fill-opacity="0.75"/>
<rect x="18" y="412.2" width="3" height="1.2" fill="#9a9aa8" fill-opacity="0.6"/>
<rect x="21" y="412.2" width="3" height="1.2" fill="#9a9aa8" fill-opacity="0.75"/>
<rect x="24" y="412.2" width="2" height="1.2" fill="#9a9aa8" fill-opacity="0.35"/>
<rect x="26" y="412.2" width="2" height="1.2" fill="#9a9aa8" fill-opacity="0.5"/>
<rect x="28" y="412.2" width="2" height="1.2" fill="#9a9aa8" fill-opacity="0.5"/>
<rect x="12" y="414.8" width="2" height="1.2" fill="#9a9aa8" fill-opacity="0.75"/>
<rect x="14" y="414.8" width="2" height="1.2" fill="#9a9aa8" fill-opacity="0.75"/>
<rect x="16" y="414.8" width="3" height="1.2" fill="#9a9aa8" fill-opacity="0.6"/>
<rect x="19" y="414.8" width="2" height="1.2" fill="#9a9aa8" fill-opacity="0.6"/>
<rect x="21" y="414.8" width="1" height="1.2" fill="#9a9aa8" fill-opacity="0.35"/>
<rect x="22" y="414.8" width="3" height="1.2" fill="#9a9aa8" fill-opacity="0.5"/>
<rect x="25" y="414.8" width="1" height="1.2" fill="#9a9aa8" fill-opacity="0.5"/>
<rect x="12" y="417.3" width="2" height="1.2" fill="#9a9aa8" fill-opacity="0.6"/>
<rect x="14" y="417.3" width="3" height="1.2" fill="#9a9aa8" fill-opacity="0.75"/>
<rect x="17" y="417.3" width="1" height="1.2" fill="#9a9aa8" fill-opacity="0.35"/>
<rect x="19" y="417.3" width="3" height="1.2" fill="#9a9aa8" fill-opacity="0.75"/>
<rect x="22" y="417.3" width="2" height="1.2" fill="#9a9aa8" fill-opacity="0.6"/>
<rect x="12" y="419.9" width="1" height="1.2" fill="#9a9aa8" fill-opacity="0.5"/>
<rect x="13" y="419.9" width="2" height="1.2" fill="#9a9aa8" fill-opacity="0.35"/>
<rect x="15" y="419.9" width="2" height="1.2" fill="#9a9aa8" fill-opacity="0.75"/>
<rect x="17" y="419.9" width="3" height="1.2" fill="#9a9aa8" fill-opacity="0.5"/>
<rect x="20" y="419.9" width="2" height="1.2" fill="#9a9aa8" fill-opacity="0.75"/>
<rect x="22" y="419.9" width="3" height="1.2" fill="#9a9aa8" fill-opacity="0.75"/>
<rect x="26" y="419.9" width="2" height="1.2" fill="#9a9aa8" fill-opacity="0.35"/>
<rect x="29" y="419.9" width="2" height="1.2" fill="#9a9aa8" fill-opacity="0.35"/>
<rect x="31" y="419.9" width="1" height="1.2" fill="#9a9aa8" fill-opacity="0.35"/>
<rect x="32" y="419.9" width="1" height="1.2" fill="#9a9aa8" fill-opacity="0.5"/>
<rect x="12" y="422.5" width="3" height="1.2" fill="#9a9aa8" fill-opacity="0.5"/>
<rect x="14" y="425.0" width="1" height="1.2" fill="#9a9aa8" fill-opacity="0.35"/>
<rect x="15" y="425.0" width="3" height="1.2" fill="#9a9aa8" fill-opacity="0.6"/>
<rect x="18" y="425.0" width="3" height="1.2" fill="#9a9aa8" fill-opacity="0.75"/>
<rect x="21" y="425.0" width="1" height="1.2" fill="#9a9aa8" fill-opacity="0.5"/>
<rect x="22" y="425.0" width="2" height="1.2" fill="#9a9aa8" fill-opacity="0.6"/>
<rect x="24" y="425.0" width="1" height="1.2" fill="#9a9aa8" fill-opacity="0.5"/>
<rect x="25" y="425.0" width="2" height="1.2" fill="#9a9aa8" fill-opacity="0.6"/>
<rect x="27" y="425.0" width="2" height="1.2" fill="#9a9aa8" fill-opacity="0.35"/>
<rect x="29" y="425.0" width="2" height="1.2" fill="#9a9aa8" fill-opacity="0.6"/>
<rect x="31" y="425.0" width="3" height="1.2" fill="#9a9aa8" fill-opacity="0.35"/>
<rect x="34" y="425.0" width="2" height="1.2" fill="#9a9aa8" fill-opacity="0.35"/>
<rect x="36" y="425.0" width="3" height="1.2" fill="#9a9aa8" fill-opacity="0.5"/>
<rect x="39" y="425.0" width="2" height="1.2" fill="#9a9aa8" fill-opacity="0.35"/>
<rect x="41" y="425.0" width="1" height="1.2" fill="#9a9aa8" fill-opacity="0.6"/>
<rect x="42" y="425.0" width="1" height="1.2" fill="#9a9aa8" fill-opacity="0.75"/>
<rect x="44" y="425.0" width="3" height="1.2" fill="#9a9aa8" fill-opacity="0.75"/>
<rect x="47" y="425.0" width="3" height="1.2" fill="#9a9aa8" fill-opacity="0.35"/>
<rect x="50" y="425.0" width="2" height="1.2" fill="#9a9aa8" fill-opacity="0.6"/>
<rect x="52" y="425.0" width="1" height="1.2" fill="#9a9aa8" fill-opacity="0.5"/>
<rect x="53" y="425.0" width="1" height="1.2" fill="#9a9aa8" fill-opacity="0.35"/>
<rect x="54" y="425.0" width="1" height="1.2" fill="#9a9aa8" fill-opacity="0.75"/>
<rect x="56" y="425.0" width="3" height="1.2" fill="#9a9aa8" fill-opacity="0.6"/>
<rect x="59" y="425.0" width="3" height="1.2" fill="#9a9aa8" fill-opacity="0.75"/>
<rect x="63" y="425.0" width="2" height="1.2" fill="#9a9aa8" fill-opacity="0.6"/>
<rect x="65" y="425.0" width="3" height="1.2" fill="#9a9aa8" fill-opacity="0.6"/>
<rect x="67" y="425.0" width="2" height="1.2" fill="#9a9aa8" fill-opacity="0.35"/>
<rect x="69" y="425.0" width="1" height="1.2" fill="#9a9aa8" fill-opacity="0.6"/>
<rect x="71" y="425.0" width="2" height="1.2" fill="#9a9aa8" fill-opacity="0.35"/>
<rect x="12" y="427.6" width="1" height="1.2" fill="#9a9aa8" fill-opacity="0.5"/>
<rect x="13" y="427.6" width="2" height="1.2" fill="#9a9aa8" fill-opacity="0.5"/>
<rect x="12" y="430.2" width="1" height="1.2" fill="#b898cc" fill-opacity="0.6"/>
<rect x="13" y="430.2" width="1" height="1.2" fill="#b898cc" fill-opacity="0.6"/>
<rect x="14" y="430.2" width="3" height="1.2" fill="#b898cc" fill-opacity="0.35"/>
<rect x="16" y="432.7" width="3" height="1.2" fill="#9a9aa8" fill-opacity="0.75"/>
<rect x="19" y="432.7" width="3" height="1.2" fill="#9a9aa8" fill-opacity="0.35"/>
<rect x="22" y="432.7" width="2" height="1.2" fill="#9a9aa8" fill-opacity="0.6"/>
<rect x="24" y="432.7" width="2" height="1.2" fill="#9a9aa8" fill-opacity="0.6"/>
<rect x="26" y="432.7" width="2" height="1.2" fill="#9a9aa8" fill-opacity="0.5"/>
<rect x="28" y="432.7" width="3" height="1.2" fill="#9a9aa8" fill-opacity="0.6"/>
<rect x="31" y="432.7" width="1" height="1.2" fill="#9a9aa8" fill-opacity="0.75"/>
<rect x="33" y="432.7" width="3" height="1.2" fill="#9a9aa8" fill-opacity="0.75"/>
<rect x="37" y="432.7" width="3" height="1.2" fill="#9a9aa8" fill-opacity="0.5"/>
<rect x="40" y="432.7" width="3" height="1.2" fill="#9a9aa8" fill-opacity="0.75"/>
<rect x="43" y="432.7" width="1" height="1.2" fill="#9a9aa8" fill-opacity="0.35"/>
<rect x="44" y="432.7" width="1" height="1.2" fill="#9a9aa8" fill-opacity="0.35"/>
<rect x="45" y="432.7" width="1" height="1.2" fill="#9a9aa8" fill-opacity="0.75"/>
<rect x="46" y="432.7" width="1" height="1.2" fill="#9a9aa8" fill-opacity="0.35"/>
<rect x="47" y="432.7" width="2" height="1.2" fill="#9a9aa8" fill-opacity="0.75"/>
<rect x="49" y="432.7" width="1" height="1.2" fill="#9a9aa8" fill-opacity="0.35"/>
<rect x="50" y="432.7" width="1" height="1.2" fill="#9a9aa8" fill-opacity="0.35"/>
<rect x="51" y="432.7" width="1" height="1.2" fill="#9a9aa8" fill-opacity="0.5"/>
<rect x="53" y="432.7" width="1" height="1.2" fill="#9a9aa8" fill-opacity="0.5"/>
<rect x="54" y="432.7" width="1" height="1.2" fill="#9a9aa8" fill-opacity="0.5"/>
<rect x="55" y="432.7" width="1" height="1.2" fill="#9a9aa8" fill-opacity="0.5"/>
<rect x="56" y="432.7" width="2" height="1.2" fill="#9a9aa8" fill-opacity="0.75"/>
<rect x="58" y="432.7" width="3" height="1.2" fill="#9a9aa8" fill-opacity="0.6"/>
<rect x="61" y="432.7" width="1" height="1.2" fill="#9a9aa8" fill-opacity="0.6"/>
<rect x="62" y="432.7" width="1" height="1.2" fill="#9a9aa8" fill-opacity="0.35"/>
<rect x="63" y="432.7" width="2" height="1.2" fill="#9a9aa8" fill-opacity="0.75"/>
<rect x="66" y="432.7" width="1" height="1.2" fill="#9a9aa8" fill-opacity="0.35"/>
<rect x="67" y="432.7" width="1" height="1.2" fill="#9a9aa8" fill-opacity="0.75"/>
<rect x="68" y="432.7" width="3" height="1.2" fill="#9a9aa8" fill-opacity="0.6"/>
<rect x="12" y="435.3" width="1" height="1.2" fill="#9a9aa8" fill-opacity="0.35"/>
<rect x="13" y="435.3" width="2" height="1.2" fill="#9a9aa8" fill-opacity="0.35"/>
<rect x="12" y="437.9" width="1" height="1.2" fill="#9a9aa8" fill-opacity="0.35"/>
<rect x="13" y="437.9" width="2" height="1.2" fill="#9a9aa8" fill-opacity="0.6"/>
<rect x="16" y="437.9" width="1" height="1.2" fill="#9a9aa8" fill-opacity="0.5"/>
<rect x="17" y="437.9" width="3" height="1.2" fill="#9a9aa8" fill-opacity="0.35"/>
<rect x="20" y="437.9" width="3" height="1.2" fill="#9a9aa8" fill-opacity="0.35"/>
<rect x="22" y="437.9" width="2" height="1.2" fill="#9a9aa8" fill-opacity="0.75"/>
<rect x="24" y="437.9" width="1" height="1.2" fill="#9a9aa8" fill-opacity="0.75"/>
<rect x="16" y="440.5" width="1" height="1.2" fill="#9a9aa8" fill-opacity="0.35"/>
<rect x="17" y="440.5" width="3" height="1.2" fill="#9a9aa8" fill-opacity="0.5"/>
<rect x="20" y="440.5" width="1" height="1.2" fill="#9a9aa8" fill-opacity="0.5"/>
<rect x="21" y="440.5" width="2" height="1.2" fill="#9a9aa8" fill-opacity="0.5"/>
<rect x="24" y="440.5" width="3" height="1.2" fill="#9a9aa8" fill-opacity="0.6"/>
<rect x="27" y="440.5" width="3" height="1.2" fill="#9a9aa8" fill-opacity="0.5"/>
<rect x="29" y="440.5" width="1" height="1.2" fill="#9a9aa8" fill-opacity="0.75"/>
<rect x="30" y="440.5" width="3" height="1.2" fill="#9a9aa8" fill-opacity="0.35"/>
<rect x="33" y="440.5" width="1" height="1.2" fill="#9a9aa8" fill-opacity="0.75"/>
<rect x="34" y="440.5" width="3" height="1.2" fill="#9a9aa8" fill-opacity="0.75"/>
<rect x="37" y="440.5" width="1" height="1.2" fill="#9a9aa8" fill-opacity="0.75"/>
<rect x="39" y="440.5" width="2" height="1.2" fill="#9a9aa8" fill-opacity="0.5"/>
<rect x="41" y="440.5" width="1" height="1.2" fill="#9a9aa8" fill-opacity="0.6"/>
<rect x="42" y="440.5" width="3" height="1.2" fill="#9a9aa8" fill-opacity="0.35"/>
<rect x="45" y="440.5" width="1" height="1.2" fill="#9a9aa8" fill-opacity="0.35"/>
<rect x="46" y="440.5" width="2" height="1.2" fill="#9a9aa8" fill-opacity="0.35"/>
<rect x="48" y="440.5" width="2" height="1.2" fill="#9a9aa8" fill-opacity="0.75"/>
<rect x="50" y="440.5" width="3" height="1.2" fill="#9a9aa8" fill-opacity="0.75"/>
<rect x="52" y="440.5" width="3" height="1.2" fill="#9a9aa8" fill-opacity="0.75"/>
<rect x="56" y="440.5" width="2" height="1.2" fill="#9a9aa8" fill-opacity="0.35"/>
<rect x="58" y="440.5" width="2" height="1.2" fill="#9a9aa8" fill-opacity="0.5"/>
<rect x="60" y="440.5" width="1" height="1.2" fill="#9a9aa8" fill-opacity="0.5"/>
<rect x="61" y="440.5" width="1" height="1.2" fill="#9a9aa8" fill-opacity="0.5"/>
<rect x="62" y="440.5" width="1" height="1.2" fill="#9a9aa8" fill-opacity="0.6"/>
<rect x="63" y="440.5" width="1" height="1.2" fill="#9a9aa8" fill-opacity="0.75"/>
<rect x="64" y="440.5" width="2" height="1.2" fill="#9a9aa8" fill-opacity="0.35"/>
<rect x="66" y="440.5" width="3" height="1.2" fill="#9a9aa8" fill-opacity="0.35"/>
<rect x="69" y="440.5" width="1" height="1.2" fill="#9a9aa8" fill-opacity="0.5"/>
<rect x="70" y="440.5" width="3" height="1.2" fill="#9a9aa8" fill-opacity="0.6"/>
<rect x="73" y="440.5" width="2" height="1.2" fill="#9a9aa8" fill-opacity="0.75"/>
<rect x="75" y="440.5" width="3" height="1.2" fill="#9a9aa8" fill-opacity="0.35"/>
<rect x="12" y="443.0" width="2" height="1.2" fill="#9a9aa8" fill-opacity="0.75"/>
<rect x="16" y="445.6" width="2" height="1.2" fill="#9a9aa8" fill-opacity="0.75"/>
<rect x="18" y="445.6" width="1" height="1.2" fill="#9a9aa8" fill-opacity="0.75"/>
<rect x="19" y="445.6" width="1" height="1.2" fill="#9a9aa8" fill-opacity="0.75"/>
<rect x="20" y="445.6" width="1" height="1.2" fill="#9a9aa8" fill-opacity="0.35"/>
<rect x="21" y="445.6" width="2" height="1.2" fill="#9a9aa8" fill-opacity="0.5"/>
<rect x="24" y="445.6" width="3" height="1.2" fill="#9a9aa8" fill-opacity="0.75"/>
<rect x="27" y="445.6" width="2" height="1.2" fill="#9a9aa8" fill-opacity="0.6"/>
<rect x="29" y="445.6" width="1" height="1.2" fill="#9a9aa8" fill-opacity="0.75"/>
<rect x="30" y="445.6" width="3" height="1.2" fill="#9a9aa8" fill-opacity="0.5"/>
<rect x="33" y="445.6" width="1" height="1.2" fill="#9a9aa8" fill-opacity="0.75"/>
<rect x="34" y="445.6" width="3" height="1.2" fill="#9a9aa8" fill-opacity="0.5"/>
<rect x="37" y="445.6" width="2" height="1.2" fill="#9a9aa8" fill-opacity="0.35"/>
<rect x="39" y="445.6" width="2" height="1.2" fill="#9a9aa8" fill-opacity="0.75"/>
<rect x="41" y="445.6" width="2" height="1.2" fill="#9a9aa8" fill-opacity="0.75"/>
<rect x="43" y="445.6" width="2" height="1.2" fill="#9a9aa8" fill-opacity="0.5"/>
<rect x="45" y="445.6" width="3" height="1.2" fill="#9a9aa8" fill-opacity="0.6"/>
<rect x="48" y="445.6" width="1" height="1.2" fill="#9a9aa8" fill-opacity="0.75"/>
<rect x="50" y="445.6" width="2" height="1.2" fill="#9a9aa8" fill-opacity="0.35"/>
<rect x="52" y="445.6" width="2" height="1.2" fill="#9a9aa8" fill-opacity="0.75"/>
<rect x="54" y="445.6" width="1" height="1.2" fill="#9a9aa8" fill-opacity="0.75"/>
<rect x="55" y="445.6" width="2" height="1.2" fill="#9a9aa8" fill-opacity="0.75"/>
<rect x="58" y="445.6" width="3" height="1.2" fill="#9a9aa8" fill-opacity="0.35"/>
<rect x="61" y="445.6" width="1" height="1.2" fill="#9a9aa8" fill-opacity="0.6"/>
<rect x="62" y="445.6" width="1" height="1.2" fill="#9a9aa8" fill-opacity="0.75"/>
<rect x="63" y="445.6" width="2" height="1.2" fill="#9a9aa8" fill-opacity="0.75"/>
<rect x="66" y="445.6" width="3" height="1.2" fill="#9a9aa8" fill-opacity="0.6"/>
<rect x="69" y="445.6" width="3" height="1.2" fill="#9a9aa8" fill-opacity="0.35"/>
<rect x="72" y="445.6" width="1" height="1.2" fill="#9a9aa8" fill-opacity="0.5"/>
<rect x="12" y="448.2" width="1" height="1.2" fill="#9a9aa8" fill-opacity="0.75"/>
<rect x="13" y="448.2" width="3" height="1.2" fill="#9a9aa8" fill-opacity="0.6"/>
<rect x="16" y="450.7" width="3" height="1.2" fill="#9a9aa8" fill-opacity="0.75"/>
<rect x="20" y="450.7" width="3" height="1.2" fill="#9a9aa8" fill-opacity="0.75"/>
<rect x="23" y="450.7" width="2" height="1.2" fill="#9a9aa8" fill-opacity="0.35"/>
<rect x="26" y="450.7" width="1" height="1.2" fill="#9a9aa8" fill-opacity="0.35"/>
<rect x="27" y="450.7" width="2" height="1.2" fill="#9a9aa8" fill-opacity="0.75"/>
<rect x="29" y="450.7" width="2" height="1.2" fill="#9a9aa8" fill-opacity="0.6"/>
<rect x="31" y="450.7" width="3" height="1.2" fill="#9a9aa8" fill-opacity="0.5"/>
<rect x="33" y="450.7" width="3" height="1.2" fill="#9a9aa8" fill-opacity="0.75"/>
<rect x="36" y="450.7" width="2" height="1.2" fill="#9a9aa8" fill-opacity="0.35"/>
<rect x="38" y="450.7" width="2" height="1.2" fill="#9a9aa8" fill-opacity="0.6"/>
<rect x="40" y="450.7" width="3" height="1.2" fill="#9a9aa8" fill-opacity="0.5"/>
<rect x="43" y="450.7" width="2" height="1.2" fill="#9a9aa8" fill-opacity="0.35"/>
<rect x="46" y="450.7" width="3" height="1.2" fill="#9a9aa8" fill-opacity="0.35"/>
<rect x="49" y="450.7" width="3" height="1.2" fill="#9a9aa8" fill-opacity="0.75"/>
<rect x="52" y="450.7" width="3" height="1.2" fill="#9a9aa8" fill-opacity="0.6"/>
<rect x="55" y="450.7" width="1" height="1.2" fill="#9a9aa8" fill-opacity="0.75"/>
<rect x="56" y="450.7" width="2" height="1.2" fill="#9a9aa8" fill-opacity="0.6"/>
<rect x="58" y="450.7" width="3" height="1.2" fill="#9a9aa8" fill-opacity="0.5"/>
<rect x="6" y="453.3" width="1" height="1.2" fill="#9a9aa8" fill-opacity="0.75"/>
<rect x="7" y="453.3" width="2" height="1.2" fill="#9a9aa8" fill-opacity="0.6"/>
<rect x="6" y="455.9" width="3" height="1.2" fill="#9fcf95" fill-opacity="0.75"/>
<rect x="9" y="455.9" width="2" height="1.2" fill="#9fcf95" fill-opacity="0.6"/>
<rect x="11" y="455.9" width="2" height="1.2" fill="#9fcf95" fill-opacity="0.75"/>
<rect x="13" y="455.9" width="2" height="1.2" fill="#9fcf95" fill-opacity="0.35"/>
<rect x="15" y="455.9" width="3" height="1.2" fill="#9fcf95" fill-opacity="0.35"/>
<rect x="17" y="455.9" width="3" height="1.2" fill="#9fcf95" fill-opacity="0.6"/>
<rect x="21" y="455.9" width="3" height="1.2" fill="#9fcf95" fill-opacity="0.35"/>
<rect x="24" y="455.9" width="1" height="1.2" fill="#9fcf95" fill-opacity="0.6"/>
<rect x="25" y="455.9" width="2" height="1.2" fill="#9fcf95" fill-opacity="0.5"/>
<rect x="27" y="455.9" width="2" height="1.2" fill="#9fcf95" fill-opacity="0.75"/>
<rect x="30" y="455.9" width="2" height="1.2" fill="#9fcf95" fill-opacity="0.35"/>
<rect x="32" y="455.9" width="3" height="1.2" fill="#9fcf95" fill-opacity="0.5"/>
<rect x="35" y="455.9" width="2" height="1.2" fill="#9fcf95" fill-opacity="0.75"/>
<rect x="37" y="455.9" width="2" height="1.2" fill="#9fcf95" fill-opacity="0.35"/>
<rect x="39" y="455.9" width="1" height="1.2" fill="#9fcf95" fill-opacity="0.35"/>
<rect x="40" y="455.9" width="3" height="1.2" fill="#9fcf95" fill-opacity="0.35"/>
<rect x="42" y="455.9" width="3" height="1.2" fill="#9fcf95" fill-opacity="0.5"/>
<rect x="46" y="455.9" width="3" height="1.2" fill="#9fcf95" fill-opacity="0.75"/>
<rect x="49" y="455.9" width="2" height="1.2" fill="#9fcf95" fill-opacity="0.6"/>
<rect x="51" y="455.9" width="1" height="1.2" fill="#9fcf95" fill-opacity="0.6"/>
<rect x="52" y="455.9" width="3" height="1.2" fill="#9fcf95" fill-opacity="0.5"/>
<rect x="56" y="455.9" width="2" height="1.2" fill="#9fcf95" fill-opacity="0.75"/>
<rect x="58" y="455.9" width="3" height="1.2" fill="#9fcf95" fill-opacity="0.75"/>
<rect x="61" y="455.9" width="2" height="1.2" fill="#9fcf95" fill-opacity="0.6"/>
<rect x="63" y="455.9" width="1" height="1.2" fill="#9fcf95" fill-opacity="0.75"/>
<rect x="64" y="455.9" width="1" height="1.2" fill="#9fcf95" fill-opacity="0.35"/>
<rect x="65" y="455.9" width="2" height="1.2" fill="#9fcf95" fill-opacity="0.35"/>
<rect x="2" y="458.4" width="2" height="1.2" fill="#9a9aa8" fill-opacity="0.75"/>
<rect x="2" y="463.6" width="2" height="1.2" fill="#9aa0e0" fill-opacity="0.6"/>
<rect x="4" y="463.6" width="3" height="1.2" fill="#9aa0e0" fill-opacity="0.6"/>
<rect x="7" y="463.6" width="2" height="1.2" fill="#9aa0e0" fill-opacity="0.75"/>
<rect x="9" y="463.6" width="1" height="1.2" fill="#9aa0e0" fill-opacity="0.75"/>
<rect x="10" y="463.6" width="2" height="1.2" fill="#9aa0e0" fill-opacity="0.35"/>
<rect x="12" y="463.6" width="3" height="1.2" fill="#9aa0e0" fill-opacity="0.6"/>
<rect x="15" y="463.6" width="1" height="1.2" fill="#9aa0e0" fill-opacity="0.35"/>
<rect x="16" y="463.6" width="1" height="1.2" fill="#9aa0e0" fill-opacity="0.5"/>
<rect x="18" y="463.6" width="1" height="1.2" fill="#9aa0e0" fill-opacity="0.75"/>
<rect x="19" y="463.6" width="3" height="1.2" fill="#9aa0e0" fill-opacity="0.35"/>
<rect x="22" y="463.6" width="1" height="1.2" fill="#9aa0e0" fill-opacity="0.75"/>
<rect x="23" y="463.6" width="2" height="1.2" fill="#9aa0e0" fill-opacity="0.6"/>
<rect x="26" y="463.6" width="1" height="1.2" fill="#9aa0e0" fill-opacity="0.6"/>
<rect x="2" y="466.2" width="3" height="1.2" fill="#9fcf95" fill-opacity="0.75"/>
<rect x="5" y="466.2" width="1" height="1.2" fill="#9fcf95" fill-opacity="0.6"/>
<rect x="6" y="466.2" width="1" height="1.2" fill="#9fcf95" fill-opacity="0.75"/>
<rect x="7" y="466.2" width="2" height="1.2" fill="#9fcf95" fill-opacity="0.35"/>
<rect x="10" y="466.2" width="2" height="1.2" fill="#9fcf95" fill-opacity="0.35"/>
<rect x="12" y="466.2" width="3" height="1.2" fill="#9fcf95" fill-opacity="0.5"/>
<rect x="15" y="466.2" width="2" height="1.2" fill="#9fcf95" fill-opacity="0.35"/>
<rect x="17" y="466.2" width="1" height="1.2" fill="#9fcf95" fill-opacity="0.35"/>
<rect x="19" y="466.2" width="2" height="1.2" fill="#9fcf95" fill-opacity="0.75"/>
<rect x="21" y="466.2" width="2" height="1.2" fill="#9fcf95" fill-opacity="0.5"/>
<rect x="23" y="466.2" width="1" height="1.2" fill="#9fcf95" fill-opacity="0.6"/>
<rect x="24" y="466.2" width="3" height="1.2" fill="#9fcf95" fill-opacity="0.35"/>
<rect x="28" y="466.2" width="1" height="1.2" fill="#9fcf95" fill-opacity="0.35"/>
<rect x="29" y="466.2" width="2" height="1.2" fill="#9fcf95" fill-opacity="0.5"/>
<rect x="31" y="466.2" width="1" height="1.2" fill="#9fcf95" fill-opacity="0.75"/>
<rect x="32" y="466.2" width="1" height="1.2" fill="#9fcf95" fill-opacity="0.75"/>
<rect x="33" y="466.2" width="1" height="1.2" fill="#9fcf95" fill-opacity="0.6"/>
<rect x="34" y="466.2" width="2" height="1.2" fill="#9fcf95" fill-opacity="0.75"/>
<rect x="4" y="468.7" width="1" height="1.2" fill="#9a9aa8" fill-opacity="0.75"/>
<rect x="5" y="468.7" width="3" height="1.2" fill="#9a9aa8" fill-opacity="0.5"/>
<rect x="8" y="468.7" width="1" height="1.2" fill="#9a9aa8" fill-opacity="0.75"/>
<rect x="9" y="468.7" width="2" height="1.2" fill="#9a9aa8" fill-opacity="0.5"/>
<rect x="11" y="468.7" width="2" height="1.2" fill="#9a9aa8" fill-opacity="0.5"/>
<rect x="13" y="468.7" width="3" height="1.2" fill="#9a9aa8" fill-opacity="0.35"/>
<rect x="16" y="468.7" width="2" height="1.2" fill="#9a9aa8" fill-opacity="0.75"/>
<rect x="18" y="468.7" width="1" height="1.2" fill="#9a9aa8" fill-opacity="0.5"/>
<rect x="19" y="468.7" width="1" height="1.2" fill="#9a9aa8" fill-opacity="0.35"/>
<rect x="20" y="468.7" width="2" height="1.2" fill="#9a9aa8" fill-opacity="0.75"/>
<rect x="22" y="468.7" width="2" height="1.2" fill="#9a9aa8" fill-opacity="0.75"/>
<rect x="24" y="468.7" width="3" height="1.2" fill="#9a9aa8" fill-opacity="0.35"/>
<rect x="27" y="468.7" width="2" height="1.2" fill="#9a9aa8" fill-opacity="0.5"/>
<rect x="29" y="468.7" width="3" height="1.2" fill="#9a9aa8" fill-opacity="0.6"/>
<rect x="4" y="471.3" width="1" height="1.2" fill="#9a9aa8" fill-opacity="0.6"/>
<rect x="5" y="471.3" width="2" height="1.2" fill="#9a9aa8" fill-opacity="0.6"/>
<rect x="7" y="471.3" width="3" height="1.2" fill="#9a9aa8" fill-opacity="0.35"/>
<rect x="10" y="471.3" width="3" height="1.2" fill="#9a9aa8" fill-opacity="0.6"/>
<rect x="14" y="471.3" width="2" height="1.2" fill="#9a9aa8" fill-opacity="0.75"/>
<rect x="16" y="471.3" width="3" height="1.2" fill="#9a9aa8" fill-opacity="0.35"/>
<rect x="19" y="471.3" width="3" height="1.2" fill="#9a9aa8" fill-opacity="0.35"/>
<rect x="22" y="471.3" width="3" height="1.2" fill="#9a9aa8" fill-opacity="0.75"/>
<rect x="25" y="471.3" width="3" height="1.2" fill="#9a9aa8" fill-opacity="0.5"/>
<rect x="28" y="471.3" width="2" height="1.2" fill="#9a9aa8" fill-opacity="0.75"/>
<rect x="30" y="471.3" width="1" height="1.2" fill="#9a9aa8" fill-opacity="0.6"/>
<rect x="4" y="473.9" width="1" height="1.2" fill="#9a9aa8" fill-opacity="0.35"/>
<rect x="5" y="473.9" width="1" height="1.2" fill="#9a9aa8" fill-opacity="0.6"/>
<rect x="6" y="473.9" width="3" height="1.2" fill="#9a9aa8" fill-opacity="0.35"/>
<rect x="9" y="473.9" width="2" height="1.2" fill="#9a9aa8" fill-opacity="0.6"/>
<rect x="11" y="473.9" width="1" height="1.2" fill="#9a9aa8" fill-opacity="0.35"/>
<rect x="12" y="473.9" width="1" height="1.2" fill="#9a9aa8" fill-opacity="0.6"/>
<rect x="13" y="473.9" width="3" height="1.2" fill="#9a9aa8" fill-opacity="0.6"/>
<rect x="16" y="473.9" width="3" height="1.2" fill="#9a9aa8" fill-opacity="0.75"/>
<rect x="19" y="473.9" width="3" height="1.2" fill="#9a9aa8" fill-opacity="0.5"/>
<rect x="22" y="473.9" width="2" height="1.2" fill="#9a9aa8" fill-opacity="0.6"/>
<rect x="24" y="473.9" width="1" height="1.2" fill="#9a9aa8" fill-opacity="0.6"/>
<rect x="25" y="473.9" width="2" height="1.2" fill="#9a9aa8" fill-opacity="0.6"/>
<rect x="27" y="473.9" width="3" height="1.2" fill="#9a9aa8" fill-opacity="0.5"/>
<rect x="30" y="473.9" width="1" height="1.2" fill="#9a9aa8" fill-opacity="0.35"/>
<rect x="2" y="476.4" width="3" height="1.2" fill="#9a9aa8" fill-opacity="0.5"/>
</svg>
<div class="a" style="left:1906px;top:57px;width:1px;height:655px;background:#e2e2e2"></div>
<div class="a" style="left:1916px;top:123px;width:4px;height:13px;background:#ef7070"></div>
<div class="a" style="left:1916px;top:333px;width:4px;height:6px;background:#ef7070"></div>
<div class="a" style="left:1916px;top:421px;width:4px;height:10px;background:#ef7070"></div>
<div class="a" style="left:1916px;top:449px;width:4px;height:6px;background:#ef7070"></div>
<div class="a" style="left:1916px;top:471px;width:4px;height:6px;background:#ef7070"></div>
<div class="a" style="left:1916px;top:479px;width:4px;height:12px;background:#ef7070"></div>
<div class="a" style="left:1916px;top:524px;width:4px;height:11px;background:#ef7070"></div>
<div class="a" style="left:1916px;top:616px;width:4px;height:5px;background:#ef7070"></div>
<div class="a" style="left:1907px;top:492px;width:13px;height:2px;background:#333"></div>
<div class="a" style="left:511px;top:57px;width:1274px;height:3px;background:linear-gradient(#f4f4f4,rgba(255,255,255,0))"></div>
<div class="a" style="left:1567px;top:25px;width:210px;height:29px;background:#f3f3f3;box-shadow:0 3px 6px rgba(0,0,0,0.35)"></div>
<svg style="left:1574px;top:32px" width="8" height="12" viewBox="0 0 8 12"><rect x="0" y="0" width="2" height="2" fill="#aaa"/><rect x="0" y="5" width="2" height="2" fill="#aaa"/><rect x="0" y="10" width="2" height="2" fill="#aaa"/><rect x="6" y="0" width="2" height="2" fill="#aaa"/><rect x="6" y="5" width="2" height="2" fill="#aaa"/><rect x="6" y="10" width="2" height="2" fill="#aaa"/></svg>
<svg style="left:1595px;top:32px" width="10" height="13" viewBox="0 0 10 13"><path d="M0.5 0 L9.5 6.5 L0.5 13 Z" fill="#3a7d36"/></svg>
<svg style="left:1625px;top:31px" width="14" height="15" viewBox="0 0 14 15"><path d="M1.5 7 A5.5 5 0 0 1 11.5 4.5" fill="none" stroke="#1f5299" stroke-width="2.2"/><path d="M8 5.5 L13 6.2 L12.5 1 Z" fill="#1f5299"/><circle cx="6" cy="12" r="1.8" fill="#333"/></svg>
<svg style="left:1659px;top:31px" width="10" height="15" viewBox="0 0 10 15"><path d="M5 0 V8" stroke="#1f5299" stroke-width="2"/><path d="M1.5 4.5 L5 8.5 L8.5 4.5" fill="none" stroke="#1f5299" stroke-width="2"/><circle cx="5" cy="12.5" r="1.8" fill="#333"/></svg>
<svg style="left:1691px;top:31px" width="10" height="15" viewBox="0 0 10 15"><path d="M5 1 V9" stroke="#1f5299" stroke-width="2"/><path d="M1.5 4.5 L5 1 L8.5 4.5" fill="none" stroke="#1f5299" stroke-width="2"/><circle cx="5" cy="12.5" r="1.8" fill="#333"/></svg>
<svg style="left:1721px;top:31px" width="14" height="15" viewBox="0 0 14 15"><path d="M4 3.2 A5.3 5.3 0 1 0 7 2.5" fill="none" stroke="#3a7d36" stroke-width="2"/><path d="M8 0 L3.5 3 L8 6 Z" fill="#3a7d36"/></svg>
<div class="a" style="left:1756px;top:34px;width:8px;height:8px;background:#c5250e"></div>
<svg style="left:1863px;top:33px" width="15" height="12" viewBox="0 0 15 12"><rect x="0.75" y="0.75" width="13.5" height="10.5" fill="none" stroke="#333" stroke-width="1.5"/><path d="M7.5 1 V11" stroke="#333" stroke-width="1.5"/><path d="M1 1 H14" stroke="#333" stroke-width="2"/></svg>
<svg style="left:1895px;top:37px" width="14" height="4" viewBox="0 0 14 4"><circle cx="2" cy="2" r="1.6" fill="#333"/><circle cx="7" cy="2" r="1.6" fill="#333"/><circle cx="12" cy="2" r="1.6" fill="#333"/></svg>
<div class="a" style="left:511px;top:712px;width:1409px;height:323px;background:#fffffe;border-top:1px solid #d7d7d7"></div>
<div class="t" style="left:547px;top:720px;font-size:11.7px;line-height:16px;color:#777">PROBLEMS</div>
<div class="t" style="left:647px;top:720px;font-size:11.7px;line-height:16px;color:#424242">OUTPUT</div>
<div class="t" style="left:733px;top:720px;font-size:11.7px;line-height:16px;color:#777">DEBUG CONSOLE</div>
<div class="t" style="left:871px;top:720px;font-size:11.7px;line-height:16px;color:#777">TERMINAL</div>
<div class="a" style="left:647px;top:739px;width:50px;height:1px;background:#e0e0e0"></div>
<div class="a" style="left:1643px;top:721px;width:109px;height:20px;border:1px solid #d0d0d0;border-radius:3px;background:#fff"></div>
<div class="t" style="left:1651px;top:723px;font-size:12px;line-height:16px;color:#222">Adapter Output</div>
<svg style="left:1741px;top:725px" width="6" height="12" viewBox="0 0 6 12"><path d="M0 5 L3 1 L6 5 Z M0 7 L3 11 L6 7 Z" fill="#222"/></svg>
<svg style="left:1770px;top:723px" width="14" height="15" viewBox="0 0 14 15"><path d="M0 6 H13 M0 9 H13 M0 12 H13 M5 3 H13" stroke="#333" stroke-width="1.6"/><path d="M1 0.5 L4.5 4 M4.5 0.5 L1 4" stroke="#c62e2e" stroke-width="1.2"/></svg>
<svg style="left:1801px;top:723px" width="14" height="16" viewBox="0 0 14 16"><rect x="0.75" y="7.75" width="9" height="7" fill="none" stroke="#333" stroke-width="1.5"/><path d="M7 7.5 V4 A3 3 0 0 1 13 4 V6" fill="none" stroke="#333" stroke-width="1.5"/><rect x="4.5" y="10" width="1.5" height="2.5" fill="#333"/></svg>
<svg style="left:1832px;top:726px" width="14" height="8" viewBox="0 0 14 8"><path d="M1 7 L7 1 L13 7" fill="none" stroke="#333" stroke-width="1.5"/></svg>
<svg style="left:1863px;top:724px" width="14" height="14" viewBox="0 0 14 14"><rect x="0.75" y="0.75" width="12.5" height="12.5" fill="none" stroke="#333" stroke-width="1.5"/><rect x="8" y="1" width="5" height="12" fill="#333"/></svg>
<svg style="left:1897px;top:726px" width="10" height="10" viewBox="0 0 10 10"><path d="M1 1 L9 9 M9 1 L1 9" stroke="#333" stroke-width="2"/></svg>
<div class="out" style="top:746px">Info : halted: PC: 0x08000386</div>
<div class="out" style="top:764px">Info : halted: PC: 0x08000388</div>
<div class="out" style="top:782px">Info : halted: PC: 0x0800038c</div>
<div class="out" style="top:800px">Info : halted: PC: 0x0800038e</div>
<div class="out" style="top:818px">Info : halted: PC: 0x08000390</div>
<div class="out" style="top:836px">Info : halted: PC: 0x080000b4</div>
<div class="out" style="top:854px">Info : halted: PC: 0x08000398</div>
<div class="out" style="top:872px">Info : halted: PC: 0x0800039c</div>
<div class="out" style="top:890px">Info : halted: PC: 0x0800039e</div>
<div class="out" style="top:908px">Info : halted: PC: 0x080003a2</div>
<div class="out" style="top:926px">Info : halted: PC: 0x080003a4</div>
<div class="out" style="top:944px">Info : halted: PC: 0x080003a6</div>
<div class="out" style="top:962px">Info : halted: PC: 0x080003aa</div>
<div class="out" style="top:980px">Info : halted: PC: 0x080003ac</div>
<div class="out" style="top:998px">Info : halted: PC: 0x080003ae</div>
<div class="a" style="left:1905px;top:746px;width:1px;height:289px;background:#e8e8e8"></div>
<div class="a" style="left:1911px;top:835px;width:6px;height:5px;background:#999"></div>
<div class="a" style="left:1911px;top:845px;width:6px;height:5px;background:#999"></div>
<div class="a" style="left:1911px;top:855px;width:6px;height:5px;background:#999"></div>
<div class="a" style="left:1911px;top:865px;width:6px;height:5px;background:#999"></div>
<div class="a" style="left:1911px;top:875px;width:6px;height:5px;background:#999"></div>
<div class="a" style="left:1906px;top:844px;width:14px;height:1px;background:#333"></div>
<div class="a" style="left:0;top:1035px;width:1920px;height:22px;background:#cb692c"></div>
<svg style="left:12px;top:1040px" width="12" height="12" viewBox="0 0 12 12"><circle cx="6" cy="6" r="6" fill="#fff"/><path d="M3.5 3.5 L8.5 8.5 M8.5 3.5 L3.5 8.5" stroke="#cc6633" stroke-width="1.6"/></svg>
<div class="st" style="left:28px">23</div>
<svg style="left:48px;top:1040px" width="12" height="12" viewBox="0 0 12 12"><path d="M6 0.5 L11.5 11.5 H0.5 Z" fill="#fff"/><path d="M6 4 V8 M6 9 V10.5" stroke="#cc6633" stroke-width="1.4"/></svg>
<div class="st" style="left:62px">0</div>
<svg style="left:87px;top:1040px" width="9" height="12" viewBox="0 0 9 12"><path d="M0 0 L9 6 L0 12 Z" fill="#fff"/></svg>
<div class="st" style="left:100px">Debug Microcontroller</div>
<div class="st" style="left:1507px">main(void)</div>
<div class="st" style="left:1587px">Ln 186, Col 1</div>
<div class="st" style="left:1675px">Spaces: 4</div>
<div class="st" style="left:1746px">UTF-8</div>
<div class="st" style="left:1798px">LF</div>
<div class="st" style="left:1826px">C</div>
<div class="st" style="left:1850px">Mac</div>
<svg style="left:1890px;top:1039px" width="14" height="14" viewBox="0 0 14 14"><circle cx="7" cy="7" r="7" fill="#fff"/><circle cx="4.7" cy="5.3" r="1.1" fill="#cc6633"/><circle cx="9.3" cy="5.3" r="1.1" fill="#cc6633"/><path d="M3.5 8 Q7 12 10.5 8" fill="none" stroke="#cc6633" stroke-width="1.3"/></svg>
</body></html>
